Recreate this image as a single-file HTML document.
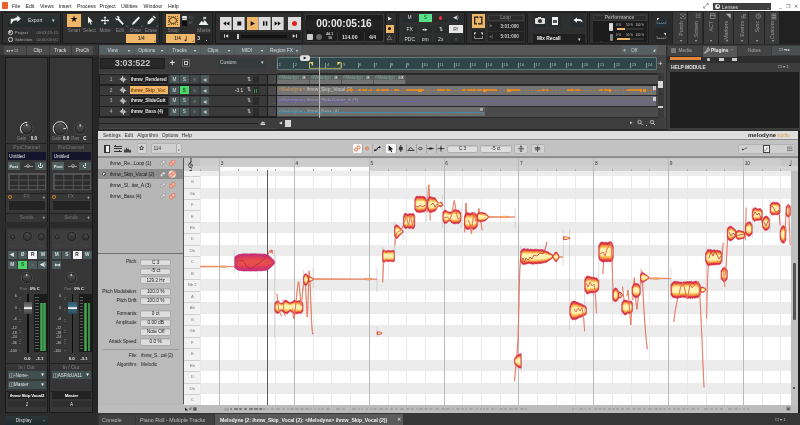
<!DOCTYPE html>
<html><head><meta charset="utf-8"><title>DAW</title>
<style>
html,body{margin:0;padding:0;background:#3a3a3a;}
body{width:800px;height:425px;overflow:hidden;position:relative;font-family:"Liberation Sans",sans-serif;}
#root{position:absolute;left:0;top:0;width:800px;height:425px;overflow:hidden;will-change:transform;}
#root div{position:absolute;box-sizing:border-box;}
#root svg{position:absolute;left:0;top:0;}
</style></head><body><div id="root">
<div style="left:0px;top:0px;width:800px;height:11px;background:#ffffff;"></div>
<div style="left:0px;top:11px;width:800px;height:34px;background:#2a2a2a;"></div>
<div style="left:12px;top:2.5px;font-size:5.2px;color:#222;line-height:6.2px;white-space:nowrap;">File</div>
<div style="left:25.5px;top:2.5px;font-size:5.2px;color:#222;line-height:6.2px;white-space:nowrap;">Edit</div>
<div style="left:40px;top:2.5px;font-size:5.2px;color:#222;line-height:6.2px;white-space:nowrap;">Views</div>
<div style="left:58.5px;top:2.5px;font-size:5.2px;color:#222;line-height:6.2px;white-space:nowrap;">Insert</div>
<div style="left:77px;top:2.5px;font-size:5.2px;color:#222;line-height:6.2px;white-space:nowrap;">Process</div>
<div style="left:99.5px;top:2.5px;font-size:5.2px;color:#222;line-height:6.2px;white-space:nowrap;">Project</div>
<div style="left:121px;top:2.5px;font-size:5.2px;color:#222;line-height:6.2px;white-space:nowrap;">Utilities</div>
<div style="left:143.5px;top:2.5px;font-size:5.2px;color:#222;line-height:6.2px;white-space:nowrap;">Window</div>
<div style="left:168px;top:2.5px;font-size:5.2px;color:#222;line-height:6.2px;white-space:nowrap;">Help</div>
<div style="left:2px;top:2px;width:6px;height:7px;background:#e8622c;border-radius:1px;"></div>
<div style="left:713px;top:3px;width:58px;height:7px;background:#3f3f3f;"></div>
<div style="left:722px;top:3.5px;font-size:5px;color:#ddd;line-height:6px;white-space:nowrap;">Lenses</div>
<div style="left:715.3px;top:3.8px;width:5px;height:5px;background:#e8e8e8;border-radius:50%;"></div>
<div style="left:716.9px;top:5.4px;width:1.8px;height:1.8px;background:#333;border-radius:50%;"></div>
<div style="left:765.5px;top:4px;font-size:5px;color:#aaa;line-height:6px;white-space:nowrap;">&#8964;</div>
<div style="left:703px;top:2px;font-size:7px;color:#333;line-height:8px;white-space:nowrap;">&#x2922;</div>
<div style="left:779px;top:2.5px;font-size:5px;color:#556;line-height:6px;white-space:nowrap;">_</div>
<div style="left:786px;top:2.5px;font-size:5px;color:#556;line-height:6px;white-space:nowrap;">&#x2750;</div>
<div style="left:794px;top:2.5px;font-size:5px;color:#556;line-height:6px;white-space:nowrap;">&#x2715;</div>
<div style="left:2px;top:12px;width:58.5px;height:32px;background:#2f2f2f;border:0.5px solid #1c1c1c;border-radius:1px;"></div>
<div style="left:61.5px;top:12px;width:98.5px;height:32px;background:#2f2f2f;border:0.5px solid #1c1c1c;border-radius:1px;"></div>
<div style="left:161px;top:12px;width:52px;height:32px;background:#2f2f2f;border:0.5px solid #1c1c1c;border-radius:1px;"></div>
<div style="left:214.5px;top:12px;width:88px;height:32px;background:#2f2f2f;border:0.5px solid #1c1c1c;border-radius:1px;"></div>
<div style="left:398px;top:12px;width:67px;height:32px;background:#2f2f2f;border:0.5px solid #1c1c1c;border-radius:1px;"></div>
<div style="left:466px;top:12px;width:60px;height:32px;background:#2f2f2f;border:0.5px solid #1c1c1c;border-radius:1px;"></div>
<div style="left:527px;top:12px;width:61px;height:32px;background:#2f2f2f;border:0.5px solid #1c1c1c;border-radius:1px;"></div>
<div style="left:589px;top:12px;width:60px;height:32px;background:#2f2f2f;border:0.5px solid #1c1c1c;border-radius:1px;"></div>
<div style="left:8px;top:14px;width:50px;height:13px;background:linear-gradient(#2e3433,#1f2b2a);border-radius:1px;"></div>
<div style="left:28px;top:17px;font-size:5px;color:#ddd;line-height:6px;white-space:nowrap;">Export</div>
<div style="left:52px;top:17px;font-size:5px;color:#ddd;line-height:6px;white-space:nowrap;">&#9662;</div>
<svg width="800" height="425" viewBox="0 0 800 425"><path d="M11 24 v-5 h4 M13.5 20.5 q1 -3 4 -3 v-1.6 l3 2.8 l-3 2.8 v-1.6 q-2.5 0 -4 0.6z" fill="#eee" stroke="#eee" stroke-width="0.6"/></svg>
<div style="left:8px;top:30px;width:4.5px;height:4.5px;border:0.7px solid #ccc;border-radius:50%;"></div>
<div style="left:9.4px;top:31.4px;width:1.8px;height:1.8px;background:#ddd;border-radius:50%;"></div>
<div style="left:8px;top:37px;width:4.5px;height:4.5px;border:0.7px solid #ccc;border-radius:50%;"></div>
<div style="left:15px;top:29.5px;font-size:4.2px;color:#aaa;line-height:5.2px;white-space:nowrap;">Project</div>
<div style="left:15px;top:36.5px;font-size:4.2px;color:#aaa;line-height:5.2px;white-space:nowrap;">Selection</div>
<div style="left:36.5px;top:29.5px;font-size:4px;color:#888;line-height:5px;white-space:nowrap;">00:03:23:15</div>
<div style="left:36.5px;top:36.5px;font-size:4px;color:#888;line-height:5px;white-space:nowrap;">00:00:00:00</div>
<div style="left:67px;top:14px;width:14px;height:13px;background:#f0b768;"></div>
<div style="left:64px;top:28px;font-size:4.6px;color:#8a8a8a;line-height:5.6px;white-space:nowrap;width:20px;text-align:center;">Smart</div>
<div style="left:82.5px;top:14px;width:14px;height:13px;background:linear-gradient(#2c2c2c,#2a2e2e 55%,#1f302e);"></div>
<div style="left:79.5px;top:28px;font-size:4.6px;color:#8a8a8a;line-height:5.6px;white-space:nowrap;width:20px;text-align:center;">Select</div>
<div style="left:98px;top:14px;width:14px;height:13px;background:linear-gradient(#2c2c2c,#2a2e2e 55%,#1f302e);"></div>
<div style="left:95px;top:28px;font-size:4.6px;color:#8a8a8a;line-height:5.6px;white-space:nowrap;width:20px;text-align:center;">Move</div>
<div style="left:113px;top:14px;width:14px;height:13px;background:linear-gradient(#2c2c2c,#2a2e2e 55%,#1f302e);"></div>
<div style="left:110px;top:28px;font-size:4.6px;color:#8a8a8a;line-height:5.6px;white-space:nowrap;width:20px;text-align:center;">Edit</div>
<div style="left:128.5px;top:14px;width:14px;height:13px;background:linear-gradient(#2c2c2c,#2a2e2e 55%,#1f302e);"></div>
<div style="left:125.5px;top:28px;font-size:4.6px;color:#8a8a8a;line-height:5.6px;white-space:nowrap;width:20px;text-align:center;">Draw</div>
<div style="left:144px;top:14px;width:14px;height:13px;background:linear-gradient(#2c2c2c,#2a2e2e 55%,#1f302e);"></div>
<div style="left:141px;top:28px;font-size:4.6px;color:#8a8a8a;line-height:5.6px;white-space:nowrap;width:20px;text-align:center;">Erase</div>
<div style="left:70.2px;top:15.3px;font-size:8.5px;color:#111;line-height:9.5px;white-space:nowrap;">&#9733;</div>
<svg width="800" height="425" viewBox="0 0 800 425"><path d="M88 16.5v7l1.6-1.4l1.2 2.6l1.1-0.5l-1.2-2.5l2.1-0.2z" fill="#eee"/><path d="M105 16.2l1.5 1.8h-1v2h2v-1l1.8 1.5l-1.8 1.5v-1h-2v2h1l-1.5 1.8l-1.5-1.8h1v-2h-2v1l-1.8-1.5l1.8-1.5v1h2v-2h-1z" fill="#eee"/><path d="M116.5 16.2q2-0.6 3 1l-0.3 1.4l4.6 5.2l-1.2 1.2l-4.8-5l-1.6 0.2q-1.2-1.4-0.6-2.6l1.4 1.4l1-1z" fill="#eee"/><path d="M132 24.8l0.6-2l6-6.3l1.4 1.4l-6 6.3z" fill="#eee"/><path d="M147.5 24.2l0.2-2.4l4.4-4.6l2.2 2.2l-4.4 4.6z M152.8 16.5l0.9-0.9l2.2 2.2l-0.9 0.9z" fill="#eee"/><path d="M126 26.5h1.2v-1.2z M141 26.5h1.2v-1.2z M156.5 26.5h1.2v-1.2z" fill="#bbb"/></svg>
<div style="left:126.3px;top:34.3px;width:29.4px;height:8.3px;background:#f0b768;"></div>
<div style="left:126.5px;top:35.5px;font-size:4.6px;color:#333;line-height:5.6px;white-space:nowrap;width:29.5px;text-align:center;font-weight:bold;">1/4</div>
<div style="left:166px;top:14px;width:14px;height:13px;background:#f0b768;"></div>
<div style="left:168.3px;top:15.8px;width:9.4px;height:9.4px;border:0.5px dotted #7a5a20;"></div>
<div style="left:169.3px;top:16.8px;width:7.4px;height:7.4px;border:1.5px solid #3a2c14;border-radius:50%;"></div>
<div style="left:182px;top:16.3px;width:4.8px;height:4.2px;background:#e4e4e4;border-radius:1px;"></div>
<div style="left:182px;top:18.2px;width:4.8px;height:0.5px;background:#999;"></div>
<div style="left:182px;top:21px;width:4.8px;height:4.8px;background:#0c0c0c;"></div>
<div style="left:188.8px;top:16.6px;font-size:2.8px;color:#777;line-height:3.8px;white-space:nowrap;">TO</div>
<div style="left:188.8px;top:21.8px;font-size:2.8px;color:#777;line-height:3.8px;white-space:nowrap;">BY</div>
<div style="left:167.5px;top:28px;font-size:4.8px;color:#8a8a8a;line-height:5.8px;white-space:nowrap;">Snap</div>
<div style="left:166px;top:34.3px;width:28.5px;height:8.3px;background:#f0b768;"></div>
<div style="left:174.3px;top:35.5px;font-size:4.6px;color:#333;line-height:5.6px;white-space:nowrap;font-weight:bold;">1/4</div>
<svg width="800" height="425" viewBox="0 0 800 425"><path d="M186.3 36v4.3" stroke="#222" stroke-width="0.6"/><ellipse cx="185.5" cy="40.4" rx="1" ry="0.8" fill="#222"/><path d="M193.8 41.8h-1.6l1.6-1.6z M155.2 41.8h-1.6l1.6-1.6z" fill="#6a4a18"/></svg>
<div style="left:196.5px;top:34.3px;width:14px;height:8.3px;background:#242424;"></div>
<div style="left:197.3px;top:35.3px;font-size:5.2px;color:#ddd;line-height:6.2px;white-space:nowrap;font-weight:bold;">3</div>
<div style="left:205.6px;top:39.6px;width:1.2px;height:1.2px;background:#ddd;"></div>
<div style="left:197px;top:14px;width:13.5px;height:13px;background:linear-gradient(#2c2c2c,#2a2e2e 55%,#1f302e);"></div>
<svg width="800" height="425" viewBox="0 0 800 425"><path d="M198.5 25l3.2-4.2l1.6 1.6l1.4-2.4l3.8 5z" fill="#eee"/><path d="M203.6 20.5v-3.3h2.2v1.5h-2.2" fill="#eee" stroke="#eee" stroke-width="0.4"/></svg>
<div style="left:197.3px;top:28px;font-size:4.8px;color:#8a8a8a;line-height:5.8px;white-space:nowrap;">Marks</div>
<div style="left:220px;top:17px;width:12.3px;height:13px;background:#dcdcdc;border-right:0.5px solid #999;"></div>
<div style="left:233px;top:17px;width:12.3px;height:13px;background:#dcdcdc;border-right:0.5px solid #999;"></div>
<div style="left:246.5px;top:17px;width:12.3px;height:13px;background:#f0b768;border-right:0.5px solid #999;"></div>
<div style="left:259px;top:17px;width:12.3px;height:13px;background:#dcdcdc;border-right:0.5px solid #999;"></div>
<div style="left:271.5px;top:17px;width:12.3px;height:13px;background:#dcdcdc;border-right:0.5px solid #999;"></div>
<svg width="800" height="425" viewBox="0 0 800 425"><path d="M226.2 21.3v4.4l-3-2.2z M229.4 21.3v4.4l-3-2.2z M237.3 21.5h4v4h-4z M250.6 21v5l4.2-2.5z M263 21.2h1.5v4.6h-1.5z M265.8 21.2h1.5v4.6h-1.5z M274.6 21.3v4.4l3-2.2z M277.8 21.3v4.4l3-2.2z" fill="#111"/></svg>
<div style="left:288px;top:17px;width:13px;height:13px;background:#dcdcdc;"></div>
<div style="left:292px;top:21px;width:5px;height:5px;background:#e02020;border-radius:50%;"></div>
<div style="left:220px;top:32px;width:81px;height:8px;background:#222;"></div>
<div style="left:241px;top:35px;width:46px;height:2.5px;background:#111;"></div>
<div style="left:237px;top:33.5px;width:2px;height:5px;background:#ccc;"></div>
<svg width="800" height="425" viewBox="0 0 800 425"><path d="M224 34.3h0.9v3.4h-0.9z M228.2 34.3v3.4l-2.8-1.7z M296 34.3h0.9v3.4h-0.9z M292.7 34.3v3.4l2.8-1.7z" fill="#ddd"/></svg>
<div style="left:304.5px;top:14px;width:79px;height:28px;background:#1d1d1d;border:0.5px solid #3a3a3a;"></div>
<div style="left:305px;top:20px;width:78px;height:10px;background:#232323;"></div>
<div style="left:305px;top:18px;font-size:10.2px;color:#e6e6e6;line-height:11.2px;white-space:nowrap;width:78px;text-align:center;font-weight:bold;">00:00:05:16</div>
<div style="left:307px;top:33.5px;width:6px;height:6.5px;background:#ccc;border-radius:1px;"></div>
<div style="left:316px;top:33.5px;width:6px;height:6.5px;background:#666;border-radius:3px;"></div>
<div style="left:326px;top:32.3px;font-size:3.8px;color:#ccc;line-height:4.8px;white-space:nowrap;font-weight:bold;">44.1</div>
<div style="left:328px;top:36.3px;font-size:3.8px;color:#ccc;line-height:4.8px;white-space:nowrap;font-weight:bold;">16</div>
<div style="left:342px;top:34px;font-size:5.2px;color:#ddd;line-height:6.2px;white-space:nowrap;font-weight:bold;">114.00</div>
<div style="left:369px;top:34px;font-size:5.2px;color:#ddd;line-height:6.2px;white-space:nowrap;font-weight:bold;">4/4</div>
<div style="left:337px;top:31.5px;width:0.5px;height:10px;background:#333;"></div>
<div style="left:364px;top:31.5px;width:0.5px;height:10px;background:#333;"></div>
<div style="left:384.5px;top:12px;width:12.5px;height:32px;background:#2f2f2f;border:0.5px solid #1c1c1c;border-radius:1px;"></div>
<div style="left:387.5px;top:15.5px;font-size:4.5px;color:#ddd;line-height:5.5px;white-space:nowrap;">&#9654;</div>
<div style="left:385.5px;top:24.5px;width:8.5px;height:8.5px;background:#f0b768;"></div>
<div style="left:388.3px;top:27.3px;width:3px;height:3px;background:#111;border-radius:50%;"></div>
<div style="left:386.5px;top:34px;font-size:6px;color:#ddd;line-height:7px;white-space:nowrap;">&#9651;</div>
<div style="left:403px;top:14px;width:13.5px;height:7.5px;background:linear-gradient(#2e2e2e,#232b2b);"></div>
<div style="left:403px;top:15px;font-size:4.6px;color:#ddd;line-height:5.6px;white-space:nowrap;width:13.5px;text-align:center;">M</div>
<div style="left:418.5px;top:14px;width:13.5px;height:7.5px;background:#5be08a;"></div>
<div style="left:418.5px;top:15px;font-size:4.6px;color:#1a4a2a;line-height:5.6px;white-space:nowrap;width:13.5px;text-align:center;">S</div>
<div style="left:434px;top:14px;width:13.5px;height:7.5px;background:linear-gradient(#2e2e2e,#232b2b);"></div>
<div style="left:434px;top:15px;font-size:4.6px;color:#ddd;line-height:5.6px;white-space:nowrap;width:13.5px;text-align:center;"></div>
<div style="left:449px;top:14px;width:13.5px;height:7.5px;background:linear-gradient(#2e2e2e,#232b2b);"></div>
<div style="left:449px;top:15px;font-size:4.6px;color:#ddd;line-height:5.6px;white-space:nowrap;width:13.5px;text-align:center;">&#9664;)</div>
<div style="left:403px;top:24.5px;width:13.5px;height:8px;background:linear-gradient(#2e2e2e,#232b2b);"></div>
<div style="left:403px;top:25.7px;font-size:5px;color:#ddd;line-height:6px;white-space:nowrap;width:13.5px;text-align:center;">FX</div>
<div style="left:418.5px;top:24.5px;width:13.5px;height:8px;background:linear-gradient(#2e2e2e,#232b2b);"></div>
<div style="left:418.5px;top:25.7px;font-size:5px;color:#ddd;line-height:6px;white-space:nowrap;width:13.5px;text-align:center;">&#9666;&#9656;</div>
<div style="left:434px;top:24.5px;width:13.5px;height:8px;background:linear-gradient(#2e2e2e,#232b2b);"></div>
<div style="left:434px;top:25.7px;font-size:5px;color:#ddd;line-height:6px;white-space:nowrap;width:13.5px;text-align:center;">&#8645;</div>
<div style="left:449px;top:24.5px;width:13.5px;height:8px;background:#e8e8e8;"></div>
<div style="left:449px;top:25.7px;font-size:5px;color:#333;line-height:6px;white-space:nowrap;width:13.5px;text-align:center;">R!</div>
<div style="left:403px;top:35px;width:13.5px;height:8px;background:linear-gradient(#2e2e2e,#232b2b);"></div>
<div style="left:403px;top:36.2px;font-size:5px;color:#ddd;line-height:6px;white-space:nowrap;width:13.5px;text-align:center;">PDC</div>
<div style="left:418.5px;top:35px;width:13.5px;height:8px;background:linear-gradient(#2e2e2e,#232b2b);"></div>
<div style="left:418.5px;top:36.2px;font-size:5px;color:#ddd;line-height:6px;white-space:nowrap;width:13.5px;text-align:center;">om</div>
<div style="left:434px;top:35px;width:13.5px;height:8px;background:linear-gradient(#2e2e2e,#232b2b);"></div>
<div style="left:434px;top:36.2px;font-size:5px;color:#ddd;line-height:6px;white-space:nowrap;width:13.5px;text-align:center;">2x</div>
<div style="left:449px;top:35px;width:13.5px;height:8px;background:linear-gradient(#2e2e2e,#232b2b);"></div>
<div style="left:449px;top:36.2px;font-size:5px;color:#666;line-height:6px;white-space:nowrap;width:13.5px;text-align:center;">&#10005;</div>
<div style="left:438.8px;top:16px;width:3.6px;height:3.6px;background:#f03030;border-radius:50%;"></div>
<div style="left:471.5px;top:14px;width:13.5px;height:13.5px;background:#f0b768;"></div>
<div style="left:472px;top:29.5px;width:13px;height:11.5px;background:#222;"></div>
<svg width="800" height="425" viewBox="0 0 800 425"><path d="M477 17.2h-2.3v6.6h2.3 M479.5 17.2h2.3v6.6h-2.3" fill="none" stroke="#222" stroke-width="1.3"/><path d="M477 15.8l1.8 1.4l-1.8 1.4z M479.5 22.4l-1.8 1.4l1.8 1.4z" fill="#222"/><path d="M474.5 38.5v-2.5 M482.5 38.5v-2.5 M474.5 38.5h8" stroke="#ddd" stroke-width="0.6" fill="none"/><path d="M474 32.5h2.5l-2.5 2.5z M483 32.5h-2.5l2.5 2.5z" fill="#eee"/></svg>
<div style="left:487.5px;top:14.5px;width:36px;height:6px;background:#2b2b2b;border:0.5px solid #3c3c3c;"></div>
<div style="left:487.5px;top:15.2px;font-size:4.8px;color:#999;line-height:5.8px;white-space:nowrap;width:36px;text-align:center;">Loop</div>
<div style="left:487.5px;top:21.5px;width:36px;height:9px;background:#222;"></div>
<div style="left:487.5px;top:32px;width:36px;height:9px;background:#222;"></div>
<div style="left:500.5px;top:23.5px;font-size:4.6px;color:#ccc;line-height:5.6px;white-space:nowrap;font-weight:bold;">3:01:000</div>
<div style="left:500.5px;top:34px;font-size:4.6px;color:#ccc;line-height:5.6px;white-space:nowrap;font-weight:bold;">5:01:000</div>
<div style="left:489px;top:23px;font-size:4.5px;color:#777;line-height:5.5px;white-space:nowrap;">|&#9656;</div>
<div style="left:489px;top:33.5px;font-size:4.5px;color:#777;line-height:5.5px;white-space:nowrap;">&#9666;|</div>
<div style="left:533px;top:14px;width:13px;height:12.5px;background:linear-gradient(#2c2c2c,#222c30);"></div>
<div style="left:548px;top:14px;width:13px;height:12.5px;background:linear-gradient(#2c2c2c,#222c30);"></div>
<div style="left:571px;top:14px;width:13px;height:12.5px;background:linear-gradient(#2c2c2c,#222c30);"></div>
<div style="left:535px;top:18px;width:9.5px;height:5.5px;background:#ddd;border-radius:1px;"></div>
<div style="left:537.5px;top:17px;width:3px;height:1.5px;background:#ddd;"></div>
<div style="left:538px;top:19px;width:3.5px;height:3.5px;background:#333;border-radius:50%;"></div>
<div style="left:551.5px;top:16.5px;width:6.5px;height:8px;background:#eee;"></div>
<div style="left:553px;top:20px;width:3.5px;height:2.5px;background:#555;"></div>
<svg width="800" height="425" viewBox="0 0 800 425"><path d="M573.5 20l3.5-2.6v1.7h2.5q3 0 3 3.5q-1-1.6-3-1.6h-2.5v1.7z" fill="#eee"/></svg>
<div style="left:533px;top:34px;width:51.5px;height:8.5px;background:#202020;"></div>
<div style="left:537px;top:35.6px;font-size:4.8px;color:#eee;line-height:5.8px;white-space:nowrap;font-weight:bold;">Mix Recall</div>
<div style="left:577.5px;top:35.5px;font-size:5px;color:#ddd;line-height:6px;white-space:nowrap;">&#9662;</div>
<div style="left:593px;top:14.6px;width:54px;height:6px;background:#2b2b2b;border:0.5px solid #3c3c3c;"></div>
<div style="left:592px;top:15.4px;font-size:4.8px;color:#aaa;line-height:5.8px;white-space:nowrap;width:55px;text-align:center;font-weight:bold;">Performance</div>
<div style="left:593px;top:21.3px;width:54px;height:20.5px;background:#1c1c1c;"></div>
<div style="left:609px;top:23px;width:4px;height:7.5px;background:#ddd;border-radius:1px;"></div>
<div style="left:609.5px;top:33.5px;width:3.5px;height:7.5px;background:#888;border-radius:1px;"></div>
<div style="left:616px;top:23.3px;font-size:3px;color:#ccc;line-height:4px;white-space:nowrap;">0 %</div>
<div style="left:626px;top:23.3px;font-size:3px;color:#ccc;line-height:4px;white-space:nowrap;">50 %</div>
<div style="left:635.5px;top:23.3px;font-size:3px;color:#ccc;line-height:4px;white-space:nowrap;">100 %</div>
<div style="left:616px;top:33.3px;font-size:3px;color:#ccc;line-height:4px;white-space:nowrap;">0 %</div>
<div style="left:626px;top:33.3px;font-size:3px;color:#ccc;line-height:4px;white-space:nowrap;">50 %</div>
<div style="left:635.5px;top:33.3px;font-size:3px;color:#ccc;line-height:4px;white-space:nowrap;">100 %</div>
<div style="left:616.5px;top:28px;width:27px;height:2px;background:#333;"></div>
<div style="left:616.5px;top:28px;width:8.5px;height:2px;background:#f0b768;"></div>
<div style="left:616.5px;top:38px;width:27px;height:2.3px;background:#333;"></div>
<div style="left:616.5px;top:38px;width:13.5px;height:2.3px;background:#f0b768;"></div>
<div style="left:601px;top:38px;font-size:4px;color:#ccc;line-height:5px;white-space:nowrap;">.</div>
<div style="left:653.5px;top:13.5px;width:14.5px;height:13px;background:linear-gradient(#2c2c2c,#22303a);"></div>
<div style="left:653.5px;top:29px;width:14.5px;height:13px;background:#262626;"></div>
<svg width="800" height="425" viewBox="0 0 800 425"><path d="M657 23.5v-2.5 M659.2 23.5v-1.2 M661.4 23.5v-1.2 M663.6 23.5v-1.2 M665.8 23.5v-2.5 M657 23.5h8.8" stroke="#7a9a9a" stroke-width="0.5" fill="none"/><path d="M657 18h2.4l-2.4 2.4z" fill="#eee"/><path d="M657 38.5v-2.5 M659.2 38.5v-1.2 M661.4 38.5v-1.2 M663.6 38.5v-1.2 M665.8 38.5v-2.5 M657 38.5h8.8" stroke="#aaa" stroke-width="0.5" fill="none"/><path d="M666 33h-2.4l2.4 2.4z" fill="#eee"/></svg>
<div style="left:671.9px;top:11.5px;width:15.3px;height:32.5px;background:#3a3a3a;border-left:1.5px solid #222;"></div>
<div style="left:677.5px;top:40.7px;width:20px;text-align:right;font-size:5.2px;line-height:7px;color:#9a9a9a;transform-origin:0 0;transform:rotate(-90deg);white-space:nowrap;">Punch</div>
<div style="left:679.6999999999999px;top:39.3px;font-size:3.5px;color:#aaa;line-height:4.5px;white-space:nowrap;">&#9662;</div>
<div style="left:687.1999999999999px;top:11.5px;width:15.3px;height:32.5px;background:#3a3a3a;border-left:1.5px solid #222;"></div>
<div style="left:692.8px;top:40.7px;width:20px;text-align:right;font-size:5.2px;line-height:7px;color:#9a9a9a;transform-origin:0 0;transform:rotate(-90deg);white-space:nowrap;">Screen</div>
<div style="left:694.9999999999999px;top:39.3px;font-size:3.5px;color:#aaa;line-height:4.5px;white-space:nowrap;">&#9662;</div>
<div style="left:702.5px;top:11.5px;width:15.3px;height:32.5px;background:#3a3a3a;border-left:1.5px solid #222;"></div>
<div style="left:708.1px;top:40.7px;width:20px;text-align:right;font-size:5.2px;line-height:7px;color:#9a9a9a;transform-origin:0 0;transform:rotate(-90deg);white-space:nowrap;">ACT</div>
<div style="left:710.3px;top:39.3px;font-size:3.5px;color:#aaa;line-height:4.5px;white-space:nowrap;">&#9662;</div>
<div style="left:717.8px;top:11.5px;width:15.3px;height:32.5px;background:#3a3a3a;border-left:1.5px solid #222;"></div>
<div style="left:723.4px;top:40.7px;width:20px;text-align:right;font-size:5.2px;line-height:7px;color:#9a9a9a;transform-origin:0 0;transform:rotate(-90deg);white-space:nowrap;">Markers</div>
<div style="left:725.5999999999999px;top:39.3px;font-size:3.5px;color:#aaa;line-height:4.5px;white-space:nowrap;">&#9662;</div>
<div style="left:733.1px;top:11.5px;width:15.3px;height:32.5px;background:#3a3a3a;border-left:1.5px solid #222;"></div>
<div style="left:738.7px;top:40.7px;width:20px;text-align:right;font-size:5.2px;line-height:7px;color:#9a9a9a;transform-origin:0 0;transform:rotate(-90deg);white-space:nowrap;">Events</div>
<div style="left:740.9px;top:39.3px;font-size:3.5px;color:#aaa;line-height:4.5px;white-space:nowrap;">&#9662;</div>
<div style="left:748.4px;top:11.5px;width:15.3px;height:32.5px;background:#3a3a3a;border-left:1.5px solid #222;"></div>
<div style="left:754.0px;top:40.7px;width:20px;text-align:right;font-size:5.2px;line-height:7px;color:#9a9a9a;transform-origin:0 0;transform:rotate(-90deg);white-space:nowrap;">Sync</div>
<div style="left:756.1999999999999px;top:39.3px;font-size:3.5px;color:#aaa;line-height:4.5px;white-space:nowrap;">&#9662;</div>
<div style="left:763.7px;top:11.5px;width:15.3px;height:32.5px;background:#3a3a3a;border-left:1.5px solid #222;"></div>
<div style="left:769.3000000000001px;top:40.7px;width:20px;text-align:right;font-size:5.2px;line-height:7px;color:#9a9a9a;transform-origin:0 0;transform:rotate(-90deg);white-space:nowrap;">Custom</div>
<div style="left:771.5px;top:39.3px;font-size:3.5px;color:#aaa;line-height:4.5px;white-space:nowrap;">&#9662;</div>
<div style="left:779.0px;top:11.5px;width:1.5px;height:32.5px;background:#222;"></div>
<svg width="800" height="425" viewBox="0 0 800 425" fill="none" stroke="#a8a8a8" stroke-width="0.6"><g transform="translate(0.8 -0.5)"><path d="M680 14.5h1.5 M683 14.5h1.5v1.5 M684.5 17.5v1.5h-1.5 M681.5 19h-1.5v-1.5 M680 16v-1.5"/><rect x="681.6" y="16" width="1.4" height="1.4" fill="#a8a8a8" stroke="none"/><path d="M695 14.6h4.6 M695 16.3h4.6 M695 18h4.6" stroke-dasharray="1.2 0.5"/><rect x="709.8" y="14.3" width="4.4" height="4.6"/><path d="M709.8 16h4.4"/><path d="M725 14.2h5v5z" fill="#a8a8a8" stroke="none"/><path d="M741 19v-3 M742.6 19v-4.5 M744.2 19v-2 M744.2 14.5v1.6 M743.4 15.3h1.6"/><circle cx="757.5" cy="16.6" r="2.3"/><path d="M757.5 15.2v1.5h1.2"/><path d="M770.5 14.6h5 M770.5 16.2h5 M770.5 17.8h5 M770.5 19.4h5" stroke-width="0.8"/></g></svg>
<div style="left:779px;top:11px;width:21px;height:33px;background:#212121;"></div>
<div style="left:0px;top:44.5px;width:98.5px;height:380.5px;background:#2c2c2c;"></div>
<div style="left:0px;top:45px;width:98px;height:10px;background:#3a3a3a;"></div>
<div style="left:4px;top:46px;width:22px;height:8.5px;background:#4c4c4c;"></div>
<div style="left:27px;top:46px;width:21.5px;height:8.5px;background:#4c4c4c;"></div>
<div style="left:49.5px;top:46px;width:21.5px;height:8.5px;background:#4c4c4c;"></div>
<div style="left:72px;top:46px;width:21px;height:8.5px;background:#4c4c4c;"></div>
<div style="left:6px;top:47.5px;font-size:4.2px;color:#ddd;line-height:5.2px;white-space:nowrap;">&#9666;&#9666; &#9662; &#10064;</div>
<div style="left:27px;top:47.5px;font-size:4.8px;color:#e0e0e0;line-height:5.8px;white-space:nowrap;width:21.5px;text-align:center;">Clip</div>
<div style="left:49.5px;top:47.5px;font-size:4.8px;color:#e0e0e0;line-height:5.8px;white-space:nowrap;width:21.5px;text-align:center;">Track</div>
<div style="left:72px;top:47.5px;font-size:4.8px;color:#e0e0e0;line-height:5.8px;white-space:nowrap;width:21px;text-align:center;">ProCh</div>
<div style="left:4.8px;top:57px;width:43.5px;height:355.5px;background:#363636;border:0.5px solid #1a1a1a;"></div>
<svg width="800" height="425" viewBox="0 0 800 425"><defs><linearGradient id="kg268_1286" x1="0" y1="0" x2="0" y2="1"><stop offset="0" stop-color="#585858"/><stop offset="1" stop-color="#2e2e2e"/></linearGradient></defs><circle cx="26.8" cy="128.6" r="6.3" fill="#222" stroke="#5a5a5a" stroke-width="0.7"/><circle cx="26.8" cy="128.6" r="6.3" fill="none" stroke="#e4e4e4" stroke-width="0.9" stroke-dasharray="14.84 39.58" transform="rotate(135 26.8 128.6)"/><circle cx="26.8" cy="128.6" r="4.8" fill="url(#kg268_1286)"/><path d="M26.80 123.60L26.80 126.10" stroke="#f0f0f0" stroke-width="0.9"/></svg>
<div style="left:16.8px;top:136.3px;font-size:4.5px;color:#888;line-height:5.5px;white-space:nowrap;">Gain</div>
<div style="left:30.8px;top:136.3px;font-size:4.5px;color:#eee;line-height:5.5px;white-space:nowrap;font-weight:bold;">0.0</div>
<div style="left:5.3px;top:142.5px;width:42.5px;height:0.6px;background:#222;"></div>
<div style="left:4.8px;top:144.2px;font-size:5px;color:#777;line-height:6px;white-space:nowrap;width:43.5px;text-align:center;">ProChannel</div>
<div style="left:7.8px;top:152.3px;width:38.5px;height:7.6px;background:#14142c;"></div>
<div style="left:9.3px;top:153.5px;font-size:4.6px;color:#e8e8e8;line-height:5.6px;white-space:nowrap;">Untitled</div>
<div style="left:7.8px;top:162px;width:12px;height:7.8px;background:#506060;"></div>
<div style="left:7.8px;top:163.7px;font-size:4px;color:#eee;line-height:5px;white-space:nowrap;width:12px;text-align:center;font-weight:bold;">Post</div>
<div style="left:34.8px;top:162px;width:11.5px;height:7.8px;background:#4a5858;"></div>
<div style="left:38.4px;top:163.6px;width:4.4px;height:4.4px;border:0.8px solid #eee;border-radius:50%;"></div>
<div style="left:40.099999999999994px;top:162.9px;width:1px;height:3px;background:#eee;outline:0.6px solid #4a5858;"></div>
<div style="left:23.8px;top:165.7px;width:9px;height:0.5px;background:#999;"></div>
<div style="left:26.3px;top:163.8px;width:4.2px;height:4.2px;border:0.5px solid #999;border-radius:50%;"></div>
<div style="left:8.3px;top:172.5px;width:38px;height:17px;background:#2e2e2e;border:0.5px solid #555;background-image:linear-gradient(#555 0.5px,transparent 0.5px),linear-gradient(90deg,#555 0.5px,transparent 0.5px);background-size:9.4px 5.6px;"></div>
<div style="left:5.3px;top:192.8px;width:42.5px;height:0.6px;background:#222;"></div>
<div style="left:8.0px;top:195px;width:3.6px;height:3.6px;border:0.8px solid #e08a30;border-radius:50%;"></div>
<div style="left:4.8px;top:194.2px;font-size:4.8px;color:#777;line-height:5.8px;white-space:nowrap;width:43.5px;text-align:center;">FX</div>
<div style="left:42.3px;top:193.5px;font-size:5.5px;color:#aaa;line-height:6.5px;white-space:nowrap;font-weight:bold;">+</div>
<div style="left:7.8px;top:199.8px;width:38.5px;height:10.8px;background:#232323;border:0.5px solid #3c3c3c;"></div>
<div style="left:5.3px;top:212.5px;width:42.5px;height:0.6px;background:#222;"></div>
<div style="left:4.8px;top:215px;font-size:4.8px;color:#777;line-height:5.8px;white-space:nowrap;width:43.5px;text-align:center;">Sends</div>
<div style="left:42.3px;top:214px;font-size:5.5px;color:#aaa;line-height:6.5px;white-space:nowrap;font-weight:bold;">+</div>
<div style="left:5.3px;top:221.5px;width:42.5px;height:6.5px;background:#2b2b2b;"></div>
<div style="left:7.8px;top:229.5px;width:38.5px;height:19px;background:#3d3d3d;"></div>
<svg width="800" height="425" viewBox="0 0 800 425"><defs><linearGradient id="kg128_2370" x1="0" y1="0" x2="0" y2="1"><stop offset="0" stop-color="#444"/><stop offset="1" stop-color="#333"/></linearGradient></defs><circle cx="12.8" cy="237" r="3" fill="#222" stroke="#4a4a4a" stroke-width="0.7"/><circle cx="12.8" cy="237" r="1.5" fill="url(#kg128_2370)"/><path d="M12.80 235.30L12.80 237.80" stroke="#555" stroke-width="0.9"/></svg>
<svg width="800" height="425" viewBox="0 0 800 425"><defs><linearGradient id="kg273_2365" x1="0" y1="0" x2="0" y2="1"><stop offset="0" stop-color="#444"/><stop offset="1" stop-color="#333"/></linearGradient></defs><circle cx="27.3" cy="236.5" r="5" fill="#222" stroke="#4a4a4a" stroke-width="0.7"/><circle cx="27.3" cy="236.5" r="3.5" fill="url(#kg273_2365)"/><path d="M27.30 232.80L27.30 235.30" stroke="#555" stroke-width="0.9"/></svg>
<svg width="800" height="425" viewBox="0 0 800 425"><defs><linearGradient id="kg413_2370" x1="0" y1="0" x2="0" y2="1"><stop offset="0" stop-color="#444"/><stop offset="1" stop-color="#333"/></linearGradient></defs><circle cx="41.3" cy="237" r="4" fill="#222" stroke="#4a4a4a" stroke-width="0.7"/><circle cx="41.3" cy="237" r="2.5" fill="url(#kg413_2370)"/><path d="M41.30 234.30L41.30 236.80" stroke="#555" stroke-width="0.9"/></svg>
<div style="left:8.8px;top:243.5px;font-size:3.6px;color:#4a4a4a;line-height:4.6px;white-space:nowrap;">Post</div>
<div style="left:21.8px;top:243.5px;font-size:3.6px;color:#4a4a4a;line-height:4.6px;white-space:nowrap;">Level</div>
<div style="left:37.8px;top:243.5px;font-size:3.6px;color:#4a4a4a;line-height:4.6px;white-space:nowrap;">Pan</div>
<div style="left:7.8px;top:250.8px;width:9px;height:8.2px;background:#4a5a5a;"></div>
<div style="left:7.8px;top:252.3px;font-size:4.8px;color:#ddd;line-height:5.8px;white-space:nowrap;width:9px;text-align:center;font-weight:bold;">&#9664;</div>
<div style="left:18.0px;top:250.8px;width:9px;height:8.2px;background:#4a5a5a;"></div>
<div style="left:18.0px;top:252.3px;font-size:4.8px;color:#ddd;line-height:5.8px;white-space:nowrap;width:9px;text-align:center;font-weight:bold;">&#216;</div>
<div style="left:28.2px;top:250.8px;width:9px;height:8.2px;background:#f2f2f2;"></div>
<div style="left:28.2px;top:252.3px;font-size:4.8px;color:#222;line-height:5.8px;white-space:nowrap;width:9px;text-align:center;font-weight:bold;">R</div>
<div style="left:38.4px;top:250.8px;width:9px;height:8.2px;background:#4a5a5a;"></div>
<div style="left:38.4px;top:252.3px;font-size:4.8px;color:#ddd;line-height:5.8px;white-space:nowrap;width:9px;text-align:center;font-weight:bold;">W</div>
<div style="left:7.8px;top:261px;width:9px;height:8px;background:#4a5a5a;"></div>
<div style="left:7.8px;top:262.4px;font-size:4.8px;color:#ddd;line-height:5.8px;white-space:nowrap;width:9px;text-align:center;font-weight:bold;">M</div>
<div style="left:18.0px;top:261px;width:9px;height:8px;background:#4fd66a;"></div>
<div style="left:18.0px;top:262.4px;font-size:4.8px;color:#1a5a2a;line-height:5.8px;white-space:nowrap;width:9px;text-align:center;font-weight:bold;">S</div>
<div style="left:28.2px;top:261px;width:9px;height:8px;background:#4a5a5a;"></div>
<div style="left:28.2px;top:262.4px;font-size:4.8px;color:#ddd;line-height:5.8px;white-space:nowrap;width:9px;text-align:center;font-weight:bold;"></div>
<div style="left:38.4px;top:261px;width:9px;height:8px;background:#4a5a5a;"></div>
<div style="left:38.4px;top:262.4px;font-size:4.8px;color:#ddd;line-height:5.8px;white-space:nowrap;width:9px;text-align:center;font-weight:bold;">&#9664;)</div>
<div style="left:31.400000000000002px;top:263.7px;width:2.8px;height:2.8px;background:#666;border-radius:50%;"></div>
<svg width="800" height="425" viewBox="0 0 800 425"><defs><linearGradient id="kg268_2780" x1="0" y1="0" x2="0" y2="1"><stop offset="0" stop-color="#585858"/><stop offset="1" stop-color="#2e2e2e"/></linearGradient></defs><circle cx="26.8" cy="278" r="5.6" fill="#222" stroke="#5a5a5a" stroke-width="0.7"/><circle cx="26.8" cy="278" r="4.1" fill="url(#kg268_2780)"/><path d="M26.80 273.70L26.80 276.20" stroke="#f0f0f0" stroke-width="0.9"/></svg>
<div style="left:19.8px;top:286px;font-size:4px;color:#888;line-height:5px;white-space:nowrap;">Pan</div>
<div style="left:29.8px;top:286px;font-size:4px;color:#eee;line-height:5px;white-space:nowrap;font-weight:bold;">0% C</div>
<div style="left:5.8px;top:294.3px;font-size:3.6px;color:#ccc;line-height:4.6px;white-space:nowrap;width:11px;text-align:right;">6</div>
<div style="left:5.8px;top:305.5px;font-size:3.6px;color:#ccc;line-height:4.6px;white-space:nowrap;width:11px;text-align:right;">0</div>
<div style="left:5.8px;top:316.5px;font-size:3.6px;color:#ccc;line-height:4.6px;white-space:nowrap;width:11px;text-align:right;">-6</div>
<div style="left:5.8px;top:325.5px;font-size:3.6px;color:#ccc;line-height:4.6px;white-space:nowrap;width:11px;text-align:right;">-12</div>
<div style="left:5.8px;top:330.5px;font-size:3.6px;color:#ccc;line-height:4.6px;white-space:nowrap;width:11px;text-align:right;">-18</div>
<div style="left:5.8px;top:334.5px;font-size:3.6px;color:#ccc;line-height:4.6px;white-space:nowrap;width:11px;text-align:right;">-24</div>
<div style="left:5.8px;top:341.3px;font-size:3.6px;color:#ccc;line-height:4.6px;white-space:nowrap;width:11px;text-align:right;">-36</div>
<div style="left:5.8px;top:348.5px;font-size:3.6px;color:#ccc;line-height:4.6px;white-space:nowrap;width:11px;text-align:right;">-100</div>
<div style="left:19.3px;top:295px;width:2px;height:57px;background-image:repeating-linear-gradient(#555 0,#555 0.5px,transparent 0.5px,transparent 2.2px);"></div>
<div style="left:27.1px;top:293.6px;width:1.6px;height:59.5px;background:#0c0c0c;"></div>
<div style="left:23.6px;top:302px;width:8.6px;height:12px;background:linear-gradient(#555 0,#777 40%,#eee 47%,#eee 55%,#666 60%,#444 100%);border-radius:1px;"></div>
<div style="left:34.3px;top:294px;width:13px;height:57.5px;background:#1b1b1b;"></div>
<div style="left:35.3px;top:297px;width:3.5px;height:53px;background-image:repeating-linear-gradient(#5c5c5c 0,#5c5c5c 1px,transparent 1px,transparent 3px);"></div>
<div style="left:39.8px;top:303px;width:2.8px;height:47.5px;background:linear-gradient(90deg,#2c7636,#4aa656,#2c7636);"></div>
<div style="left:43.3px;top:303px;width:2.6px;height:47.5px;background:linear-gradient(90deg,#2c7636,#4aa656,#2c7636);"></div>
<div style="left:24.3px;top:355.5px;font-size:4.4px;color:#eee;line-height:5.4px;white-space:nowrap;font-weight:bold;">0.0</div>
<div style="left:35.8px;top:355.5px;font-size:4.4px;color:#eee;line-height:5.4px;white-space:nowrap;font-weight:bold;">-3.1</div>
<div style="left:5.3px;top:363px;width:42.5px;height:0.6px;background:#222;"></div>
<div style="left:4.8px;top:364.3px;font-size:5px;color:#868686;line-height:6px;white-space:nowrap;width:43.5px;text-align:center;">In / Out</div>
<div style="left:7.8px;top:371.4px;width:38.5px;height:7.8px;background:#414f50;"></div>
<div style="left:8.8px;top:372.6px;font-size:4.8px;color:#e4e4e4;line-height:5.8px;white-space:nowrap;">&#9707;-None-</div>
<div style="left:40.3px;top:372.3px;font-size:4.6px;color:#fff;line-height:5.6px;white-space:nowrap;">&#9660;</div>
<div style="left:7.8px;top:381px;width:38.5px;height:8px;background:#414f50;"></div>
<div style="left:8.8px;top:382.3px;font-size:4.8px;color:#e4e4e4;line-height:5.8px;white-space:nowrap;">&#9707;Master</div>
<div style="left:40.3px;top:382.1px;font-size:4.6px;color:#fff;line-height:5.6px;white-space:nowrap;">&#9660;</div>
<div style="left:5.3px;top:390.5px;width:42.5px;height:0.6px;background:#222;"></div>
<div style="left:7.8px;top:391.8px;width:38.5px;height:7.4px;background:#222;"></div>
<div style="left:6.8px;top:393px;font-size:4.4px;color:#fff;line-height:5.4px;white-space:nowrap;width:40.5px;text-align:center;font-weight:bold;letter-spacing:-0.15px;">ihmw Skip Vocal2</div>
<div style="left:7.8px;top:400.7px;width:38.5px;height:6.8px;background:#2e2e2e;"></div>
<div style="left:7.8px;top:401.6px;font-size:4.6px;color:#ddd;line-height:5.6px;white-space:nowrap;width:38.5px;text-align:center;">2</div>
<div style="left:49.2px;top:57px;width:43.5px;height:355.5px;background:#363636;border:0.5px solid #1a1a1a;"></div>
<svg width="800" height="425" viewBox="0 0 800 425"><defs><linearGradient id="kg602_1286" x1="0" y1="0" x2="0" y2="1"><stop offset="0" stop-color="#585858"/><stop offset="1" stop-color="#2e2e2e"/></linearGradient></defs><circle cx="60.2" cy="128.6" r="7" fill="#222" stroke="#5a5a5a" stroke-width="0.7"/><circle cx="60.2" cy="128.6" r="7" fill="none" stroke="#e4e4e4" stroke-width="0.9" stroke-dasharray="27.38 43.98" transform="rotate(135 60.2 128.6)"/><circle cx="60.2" cy="128.6" r="5.5" fill="url(#kg602_1286)"/><path d="M65.90 128.60L63.40 128.60" stroke="#f0f0f0" stroke-width="0.9"/></svg>
<svg width="800" height="425" viewBox="0 0 800 425"><defs><linearGradient id="kg802_1286" x1="0" y1="0" x2="0" y2="1"><stop offset="0" stop-color="#585858"/><stop offset="1" stop-color="#2e2e2e"/></linearGradient></defs><circle cx="80.2" cy="128.6" r="5.8" fill="#222" stroke="#5a5a5a" stroke-width="0.7"/><circle cx="80.2" cy="128.6" r="4.3" fill="url(#kg802_1286)"/><path d="M80.20 124.10L80.20 126.60" stroke="#f0f0f0" stroke-width="0.9"/></svg>
<div style="left:51.7px;top:136.3px;font-size:4.5px;color:#888;line-height:5.5px;white-space:nowrap;">Gain</div>
<div style="left:63.0px;top:136.3px;font-size:4.5px;color:#eee;line-height:5.5px;white-space:nowrap;font-weight:bold;">0.0</div>
<div style="left:71.2px;top:136.3px;font-size:4.5px;color:#888;line-height:5.5px;white-space:nowrap;">Pan</div>
<div style="left:83.2px;top:136.3px;font-size:4.5px;color:#eee;line-height:5.5px;white-space:nowrap;font-weight:bold;">C</div>
<div style="left:49.7px;top:142.5px;width:42.5px;height:0.6px;background:#222;"></div>
<div style="left:49.2px;top:144.2px;font-size:5px;color:#777;line-height:6px;white-space:nowrap;width:43.5px;text-align:center;">ProChannel</div>
<div style="left:52.2px;top:152.3px;width:38.5px;height:7.6px;background:#14142c;"></div>
<div style="left:53.7px;top:153.5px;font-size:4.6px;color:#e8e8e8;line-height:5.6px;white-space:nowrap;">Untitled</div>
<div style="left:52.2px;top:162px;width:12px;height:7.8px;background:#506060;"></div>
<div style="left:52.2px;top:163.7px;font-size:4px;color:#eee;line-height:5px;white-space:nowrap;width:12px;text-align:center;font-weight:bold;">Post</div>
<div style="left:79.2px;top:162px;width:11.5px;height:7.8px;background:#4a5858;"></div>
<div style="left:82.80000000000001px;top:163.6px;width:4.4px;height:4.4px;border:0.8px solid #eee;border-radius:50%;"></div>
<div style="left:84.5px;top:162.9px;width:1px;height:3px;background:#eee;outline:0.6px solid #4a5858;"></div>
<div style="left:68.2px;top:165.7px;width:9px;height:0.5px;background:#999;"></div>
<div style="left:70.7px;top:163.8px;width:4.2px;height:4.2px;border:0.5px solid #999;border-radius:50%;"></div>
<div style="left:52.7px;top:172.5px;width:38px;height:17px;background:#2e2e2e;border:0.5px solid #555;background-image:linear-gradient(#555 0.5px,transparent 0.5px),linear-gradient(90deg,#555 0.5px,transparent 0.5px);background-size:9.4px 5.6px;"></div>
<div style="left:49.7px;top:192.8px;width:42.5px;height:0.6px;background:#222;"></div>
<div style="left:52.400000000000006px;top:195px;width:3.6px;height:3.6px;border:0.8px solid #e08a30;border-radius:50%;"></div>
<div style="left:49.2px;top:194.2px;font-size:4.8px;color:#777;line-height:5.8px;white-space:nowrap;width:43.5px;text-align:center;">FX</div>
<div style="left:86.7px;top:193.5px;font-size:5.5px;color:#aaa;line-height:6.5px;white-space:nowrap;font-weight:bold;">+</div>
<div style="left:52.2px;top:199.8px;width:38.5px;height:10.8px;background:#232323;border:0.5px solid #3c3c3c;"></div>
<div style="left:49.7px;top:212.5px;width:42.5px;height:0.6px;background:#222;"></div>
<div style="left:49.2px;top:215px;font-size:4.8px;color:#777;line-height:5.8px;white-space:nowrap;width:43.5px;text-align:center;">Sends</div>
<div style="left:86.7px;top:214px;font-size:5.5px;color:#aaa;line-height:6.5px;white-space:nowrap;font-weight:bold;">+</div>
<div style="left:49.7px;top:221.5px;width:42.5px;height:6.5px;background:#2b2b2b;"></div>
<div style="left:52.2px;top:229.5px;width:38.5px;height:19px;background:#3d3d3d;"></div>
<svg width="800" height="425" viewBox="0 0 800 425"><defs><linearGradient id="kg572_2370" x1="0" y1="0" x2="0" y2="1"><stop offset="0" stop-color="#444"/><stop offset="1" stop-color="#333"/></linearGradient></defs><circle cx="57.2" cy="237" r="3" fill="#222" stroke="#4a4a4a" stroke-width="0.7"/><circle cx="57.2" cy="237" r="1.5" fill="url(#kg572_2370)"/><path d="M57.20 235.30L57.20 237.80" stroke="#555" stroke-width="0.9"/></svg>
<svg width="800" height="425" viewBox="0 0 800 425"><defs><linearGradient id="kg717_2365" x1="0" y1="0" x2="0" y2="1"><stop offset="0" stop-color="#444"/><stop offset="1" stop-color="#333"/></linearGradient></defs><circle cx="71.7" cy="236.5" r="5" fill="#222" stroke="#4a4a4a" stroke-width="0.7"/><circle cx="71.7" cy="236.5" r="3.5" fill="url(#kg717_2365)"/><path d="M71.70 232.80L71.70 235.30" stroke="#555" stroke-width="0.9"/></svg>
<svg width="800" height="425" viewBox="0 0 800 425"><defs><linearGradient id="kg857_2370" x1="0" y1="0" x2="0" y2="1"><stop offset="0" stop-color="#444"/><stop offset="1" stop-color="#333"/></linearGradient></defs><circle cx="85.7" cy="237" r="4" fill="#222" stroke="#4a4a4a" stroke-width="0.7"/><circle cx="85.7" cy="237" r="2.5" fill="url(#kg857_2370)"/><path d="M85.70 234.30L85.70 236.80" stroke="#555" stroke-width="0.9"/></svg>
<div style="left:53.2px;top:243.5px;font-size:3.6px;color:#4a4a4a;line-height:4.6px;white-space:nowrap;">Post</div>
<div style="left:66.2px;top:243.5px;font-size:3.6px;color:#4a4a4a;line-height:4.6px;white-space:nowrap;">Level</div>
<div style="left:82.2px;top:243.5px;font-size:3.6px;color:#4a4a4a;line-height:4.6px;white-space:nowrap;">Pan</div>
<div style="left:52.2px;top:250.8px;width:9px;height:8.2px;background:#4a5a5a;"></div>
<div style="left:52.2px;top:252.3px;font-size:4.8px;color:#ddd;line-height:5.8px;white-space:nowrap;width:9px;text-align:center;font-weight:bold;">M</div>
<div style="left:62.400000000000006px;top:250.8px;width:9px;height:8.2px;background:#4a5a5a;"></div>
<div style="left:62.400000000000006px;top:252.3px;font-size:4.8px;color:#ddd;line-height:5.8px;white-space:nowrap;width:9px;text-align:center;font-weight:bold;">S</div>
<div style="left:72.6px;top:250.8px;width:9px;height:8.2px;background:#f2f2f2;"></div>
<div style="left:72.6px;top:252.3px;font-size:4.8px;color:#222;line-height:5.8px;white-space:nowrap;width:9px;text-align:center;font-weight:bold;">R</div>
<div style="left:82.80000000000001px;top:250.8px;width:9px;height:8.2px;background:#4a5a5a;"></div>
<div style="left:82.80000000000001px;top:252.3px;font-size:4.8px;color:#ddd;line-height:5.8px;white-space:nowrap;width:9px;text-align:center;font-weight:bold;">W</div>
<div style="left:52.2px;top:261px;width:9px;height:8px;background:#4a5a5a;"></div>
<div style="left:52.2px;top:262.4px;font-size:4px;color:#ddd;line-height:5px;white-space:nowrap;width:9px;text-align:center;letter-spacing:-1px;">&#9654;&#9664;</div>
<svg width="800" height="425" viewBox="0 0 800 425"><defs><linearGradient id="kg712_2780" x1="0" y1="0" x2="0" y2="1"><stop offset="0" stop-color="#585858"/><stop offset="1" stop-color="#2e2e2e"/></linearGradient></defs><circle cx="71.2" cy="278" r="5.6" fill="#222" stroke="#5a5a5a" stroke-width="0.7"/><circle cx="71.2" cy="278" r="4.1" fill="url(#kg712_2780)"/><path d="M71.20 273.70L71.20 276.20" stroke="#f0f0f0" stroke-width="0.9"/></svg>
<div style="left:64.2px;top:286px;font-size:4px;color:#888;line-height:5px;white-space:nowrap;">Pan</div>
<div style="left:74.2px;top:286px;font-size:4px;color:#eee;line-height:5px;white-space:nowrap;font-weight:bold;">0% C</div>
<div style="left:50.2px;top:294.3px;font-size:3.6px;color:#ccc;line-height:4.6px;white-space:nowrap;width:11px;text-align:right;">6</div>
<div style="left:50.2px;top:305.5px;font-size:3.6px;color:#ccc;line-height:4.6px;white-space:nowrap;width:11px;text-align:right;">0</div>
<div style="left:50.2px;top:316.5px;font-size:3.6px;color:#ccc;line-height:4.6px;white-space:nowrap;width:11px;text-align:right;">-6</div>
<div style="left:50.2px;top:325.5px;font-size:3.6px;color:#ccc;line-height:4.6px;white-space:nowrap;width:11px;text-align:right;">-12</div>
<div style="left:50.2px;top:330.5px;font-size:3.6px;color:#ccc;line-height:4.6px;white-space:nowrap;width:11px;text-align:right;">-18</div>
<div style="left:50.2px;top:334.5px;font-size:3.6px;color:#ccc;line-height:4.6px;white-space:nowrap;width:11px;text-align:right;">-24</div>
<div style="left:50.2px;top:341.3px;font-size:3.6px;color:#ccc;line-height:4.6px;white-space:nowrap;width:11px;text-align:right;">-36</div>
<div style="left:50.2px;top:348.5px;font-size:3.6px;color:#ccc;line-height:4.6px;white-space:nowrap;width:11px;text-align:right;">-100</div>
<div style="left:63.7px;top:295px;width:2px;height:57px;background-image:repeating-linear-gradient(#555 0,#555 0.5px,transparent 0.5px,transparent 2.2px);"></div>
<div style="left:71.5px;top:293.6px;width:1.6px;height:59.5px;background:#0c0c0c;"></div>
<div style="left:68.0px;top:302px;width:8.6px;height:12px;background:linear-gradient(#2f5566 0,#41758c 40%,#eee 47%,#eee 55%,#3a687c 60%,#28485a 100%);border-radius:1px;"></div>
<div style="left:78.7px;top:294px;width:13px;height:57.5px;background:#1b1b1b;"></div>
<div style="left:79.7px;top:297px;width:3.5px;height:53px;background-image:repeating-linear-gradient(#5c5c5c 0,#5c5c5c 1px,transparent 1px,transparent 3px);"></div>
<div style="left:84.2px;top:303px;width:2.8px;height:47.5px;background:linear-gradient(90deg,#2c7636,#4aa656,#2c7636);"></div>
<div style="left:87.7px;top:303px;width:2.6px;height:47.5px;background:linear-gradient(90deg,#2c7636,#4aa656,#2c7636);"></div>
<div style="left:68.7px;top:355.5px;font-size:4.4px;color:#eee;line-height:5.4px;white-space:nowrap;font-weight:bold;">0.0</div>
<div style="left:80.2px;top:355.5px;font-size:4.4px;color:#eee;line-height:5.4px;white-space:nowrap;font-weight:bold;">-3.1</div>
<div style="left:49.7px;top:363px;width:42.5px;height:0.6px;background:#222;"></div>
<div style="left:49.2px;top:364.3px;font-size:5px;color:#868686;line-height:6px;white-space:nowrap;width:43.5px;text-align:center;">In / Out</div>
<div style="left:52.2px;top:371.4px;width:38.5px;height:7.8px;background:#414f50;"></div>
<div style="left:52.800000000000004px;top:372.7px;font-size:4.5px;color:#e4e4e4;line-height:5.5px;white-space:nowrap;">&#9707;ASFifcUA11</div>
<div style="left:85.2px;top:372.3px;font-size:4.6px;color:#fff;line-height:5.6px;white-space:nowrap;">&#9660;</div>
<div style="left:49.7px;top:390.5px;width:42.5px;height:0.6px;background:#222;"></div>
<div style="left:52.2px;top:391.8px;width:38.5px;height:7.4px;background:#222;"></div>
<div style="left:51.2px;top:393px;font-size:4.4px;color:#fff;line-height:5.4px;white-space:nowrap;width:40.5px;text-align:center;font-weight:bold;letter-spacing:-0.15px;">Master</div>
<div style="left:52.2px;top:400.7px;width:38.5px;height:6.8px;background:#2e2e2e;"></div>
<div style="left:52.2px;top:401.6px;font-size:4.6px;color:#ddd;line-height:5.6px;white-space:nowrap;width:38.5px;text-align:center;">A</div>
<div style="left:93px;top:57px;width:5.5px;height:355.5px;background:#262626;"></div>
<div style="left:4.7px;top:415.5px;width:43px;height:9.5px;background:linear-gradient(#2b3638,#1f2c30);"></div>
<div style="left:4.7px;top:417.5px;font-size:4.8px;color:#ddd;line-height:5.8px;white-space:nowrap;width:38px;text-align:center;">Display</div>
<div style="left:43px;top:418px;font-size:4px;color:#667;line-height:5px;white-space:nowrap;">&#9662;</div>
<div style="left:98.5px;top:44.5px;width:567px;height:86.5px;background:#484848;"></div>
<div style="left:98.5px;top:45px;width:567px;height:9.5px;background:#565656;"></div>
<div style="left:99.7px;top:46px;width:34px;height:8px;background:#586064;"></div>
<div style="left:99.7px;top:47.9px;font-size:4.9px;color:#dadada;line-height:5.9px;white-space:nowrap;width:26px;text-align:center;">View</div>
<div style="left:127.69999999999999px;top:47.5px;font-size:4px;color:#ddd;line-height:5px;white-space:nowrap;">&#9662;</div>
<div style="left:135px;top:46px;width:31.5px;height:8px;background:#586064;"></div>
<div style="left:135px;top:47.9px;font-size:4.9px;color:#dadada;line-height:5.9px;white-space:nowrap;width:23.5px;text-align:center;">Options</div>
<div style="left:160.5px;top:47.5px;font-size:4px;color:#ddd;line-height:5px;white-space:nowrap;">&#9662;</div>
<div style="left:167.5px;top:46px;width:32px;height:8px;background:#586064;"></div>
<div style="left:167.5px;top:47.9px;font-size:4.9px;color:#dadada;line-height:5.9px;white-space:nowrap;width:24px;text-align:center;">Tracks</div>
<div style="left:193.5px;top:47.5px;font-size:4px;color:#ddd;line-height:5px;white-space:nowrap;">&#9662;</div>
<div style="left:200.5px;top:46px;width:33px;height:8px;background:#586064;"></div>
<div style="left:200.5px;top:47.9px;font-size:4.9px;color:#dadada;line-height:5.9px;white-space:nowrap;width:25px;text-align:center;">Clips</div>
<div style="left:227.5px;top:47.5px;font-size:4px;color:#ddd;line-height:5px;white-space:nowrap;">&#9662;</div>
<div style="left:235px;top:46px;width:32px;height:8px;background:#586064;"></div>
<div style="left:235px;top:47.9px;font-size:4.9px;color:#dadada;line-height:5.9px;white-space:nowrap;width:24px;text-align:center;">MIDI</div>
<div style="left:261px;top:47.5px;font-size:4px;color:#ddd;line-height:5px;white-space:nowrap;">&#9662;</div>
<div style="left:268px;top:46px;width:33px;height:8px;background:#586064;"></div>
<div style="left:268px;top:47.9px;font-size:4.9px;color:#dadada;line-height:5.9px;white-space:nowrap;width:27px;text-align:center;">Region FX</div>
<div style="left:296px;top:47.5px;font-size:4px;color:#ddd;line-height:5px;white-space:nowrap;">&#9662;</div>
<div style="left:620.5px;top:46px;width:36px;height:8px;background:#586064;"></div>
<div style="left:631px;top:48px;font-size:4.8px;color:#ccc;line-height:5.8px;white-space:nowrap;">Off</div>
<div style="left:622.5px;top:47.2px;font-size:5.5px;color:#ddd;line-height:6.5px;white-space:nowrap;">&#8982;</div>
<div style="left:652.5px;top:49px;font-size:2.5px;color:#ddd;line-height:3.5px;white-space:nowrap;">&#9698;</div>
<div style="left:98.5px;top:55px;width:178px;height:17.5px;background:#3c3c3c;"></div>
<div style="left:99.7px;top:57.8px;width:65.5px;height:10.8px;background:#272727;border-radius:1px;border:0.5px solid #1e1e1e;"></div>
<div style="left:99.7px;top:57.8px;font-size:9px;color:#c4c4c4;line-height:10px;white-space:nowrap;width:65.5px;text-align:center;font-weight:bold;letter-spacing:-0.1px;">3:03:522</div>
<div style="left:169.5px;top:58.2px;font-size:9.5px;color:#ddd;line-height:10.5px;white-space:nowrap;font-weight:bold;">+</div>
<div style="left:182px;top:59px;width:7.8px;height:8.2px;background:#333;border:0.5px solid #666;border-radius:1px;"></div>
<div style="left:184px;top:61.2px;width:4.2px;height:4.2px;border:0.6px solid #ccc;"></div>
<div style="left:218px;top:57.8px;width:48px;height:10px;background:#353b3c;"></div>
<div style="left:220px;top:60.4px;font-size:4.8px;color:#ccc;line-height:5.8px;white-space:nowrap;">Custom</div>
<div style="left:260.5px;top:60px;font-size:4.8px;color:#ddd;line-height:5.8px;white-space:nowrap;">&#9662;</div>
<div style="left:276.8px;top:55px;width:388px;height:17.5px;background:#454545;"></div>
<div style="left:277px;top:56.5px;width:380px;height:13.5px;background:#2f4548;border:0.6px solid #5f7a7c;border-radius:1px;"></div>
<div style="left:277.3px;top:62.6px;width:0.5px;height:5.4px;background:#7d9a9a;"></div>
<div style="left:278.8px;top:61.6px;font-size:4.2px;color:#a4bcbc;line-height:5.2px;white-space:nowrap;">1</div>
<div style="left:293.34000000000003px;top:62.6px;width:0.5px;height:5.4px;background:#7d9a9a;"></div>
<div style="left:294.84000000000003px;top:61.6px;font-size:4.2px;color:#a4bcbc;line-height:5.2px;white-space:nowrap;">2</div>
<div style="left:309.38px;top:62.6px;width:0.5px;height:5.4px;background:#7d9a9a;"></div>
<div style="left:310.88px;top:61.6px;font-size:4.2px;color:#a4bcbc;line-height:5.2px;white-space:nowrap;">3</div>
<div style="left:325.42px;top:62.6px;width:0.5px;height:5.4px;background:#7d9a9a;"></div>
<div style="left:326.92px;top:61.6px;font-size:4.2px;color:#a4bcbc;line-height:5.2px;white-space:nowrap;">4</div>
<div style="left:341.46px;top:62.6px;width:0.5px;height:5.4px;background:#7d9a9a;"></div>
<div style="left:342.96px;top:61.6px;font-size:4.2px;color:#a4bcbc;line-height:5.2px;white-space:nowrap;">5</div>
<div style="left:357.5px;top:62.6px;width:0.5px;height:5.4px;background:#7d9a9a;"></div>
<div style="left:359.0px;top:61.6px;font-size:4.2px;color:#a4bcbc;line-height:5.2px;white-space:nowrap;">6</div>
<div style="left:373.54px;top:62.6px;width:0.5px;height:5.4px;background:#7d9a9a;"></div>
<div style="left:375.04px;top:61.6px;font-size:4.2px;color:#a4bcbc;line-height:5.2px;white-space:nowrap;">7</div>
<div style="left:389.58px;top:62.6px;width:0.5px;height:5.4px;background:#7d9a9a;"></div>
<div style="left:391.08px;top:61.6px;font-size:4.2px;color:#a4bcbc;line-height:5.2px;white-space:nowrap;">8</div>
<div style="left:405.62px;top:62.6px;width:0.5px;height:5.4px;background:#7d9a9a;"></div>
<div style="left:407.12px;top:61.6px;font-size:4.2px;color:#a4bcbc;line-height:5.2px;white-space:nowrap;">9</div>
<div style="left:421.66px;top:62.6px;width:0.5px;height:5.4px;background:#7d9a9a;"></div>
<div style="left:423.16px;top:61.6px;font-size:4.2px;color:#a4bcbc;line-height:5.2px;white-space:nowrap;">10</div>
<div style="left:437.7px;top:62.6px;width:0.5px;height:5.4px;background:#7d9a9a;"></div>
<div style="left:439.2px;top:61.6px;font-size:4.2px;color:#a4bcbc;line-height:5.2px;white-space:nowrap;">11</div>
<div style="left:453.74px;top:62.6px;width:0.5px;height:5.4px;background:#7d9a9a;"></div>
<div style="left:455.24px;top:61.6px;font-size:4.2px;color:#a4bcbc;line-height:5.2px;white-space:nowrap;">12</div>
<div style="left:469.78000000000003px;top:62.6px;width:0.5px;height:5.4px;background:#7d9a9a;"></div>
<div style="left:471.28000000000003px;top:61.6px;font-size:4.2px;color:#a4bcbc;line-height:5.2px;white-space:nowrap;">13</div>
<div style="left:485.82px;top:62.6px;width:0.5px;height:5.4px;background:#7d9a9a;"></div>
<div style="left:487.32px;top:61.6px;font-size:4.2px;color:#a4bcbc;line-height:5.2px;white-space:nowrap;">14</div>
<div style="left:501.86px;top:62.6px;width:0.5px;height:5.4px;background:#7d9a9a;"></div>
<div style="left:503.36px;top:61.6px;font-size:4.2px;color:#a4bcbc;line-height:5.2px;white-space:nowrap;">15</div>
<div style="left:517.9000000000001px;top:62.6px;width:0.5px;height:5.4px;background:#7d9a9a;"></div>
<div style="left:519.4000000000001px;top:61.6px;font-size:4.2px;color:#a4bcbc;line-height:5.2px;white-space:nowrap;">16</div>
<div style="left:533.94px;top:62.6px;width:0.5px;height:5.4px;background:#7d9a9a;"></div>
<div style="left:535.44px;top:61.6px;font-size:4.2px;color:#a4bcbc;line-height:5.2px;white-space:nowrap;">17</div>
<div style="left:549.98px;top:62.6px;width:0.5px;height:5.4px;background:#7d9a9a;"></div>
<div style="left:551.48px;top:61.6px;font-size:4.2px;color:#a4bcbc;line-height:5.2px;white-space:nowrap;">18</div>
<div style="left:566.02px;top:62.6px;width:0.5px;height:5.4px;background:#7d9a9a;"></div>
<div style="left:567.52px;top:61.6px;font-size:4.2px;color:#a4bcbc;line-height:5.2px;white-space:nowrap;">19</div>
<div style="left:582.0600000000001px;top:62.6px;width:0.5px;height:5.4px;background:#7d9a9a;"></div>
<div style="left:583.5600000000001px;top:61.6px;font-size:4.2px;color:#a4bcbc;line-height:5.2px;white-space:nowrap;">20</div>
<div style="left:598.1px;top:62.6px;width:0.5px;height:5.4px;background:#7d9a9a;"></div>
<div style="left:599.6px;top:61.6px;font-size:4.2px;color:#a4bcbc;line-height:5.2px;white-space:nowrap;">21</div>
<div style="left:614.1400000000001px;top:62.6px;width:0.5px;height:5.4px;background:#7d9a9a;"></div>
<div style="left:615.6400000000001px;top:61.6px;font-size:4.2px;color:#a4bcbc;line-height:5.2px;white-space:nowrap;">22</div>
<div style="left:630.1800000000001px;top:62.6px;width:0.5px;height:5.4px;background:#7d9a9a;"></div>
<div style="left:631.6800000000001px;top:61.6px;font-size:4.2px;color:#a4bcbc;line-height:5.2px;white-space:nowrap;">23</div>
<div style="left:646.22px;top:62.6px;width:0.5px;height:5.4px;background:#7d9a9a;"></div>
<div style="left:647.72px;top:61.6px;font-size:4.2px;color:#a4bcbc;line-height:5.2px;white-space:nowrap;">24</div>
<div style="left:658px;top:58.5px;font-size:8px;color:#ddd;line-height:9px;white-space:nowrap;">+</div>
<svg width="800" height="425" viewBox="0 0 800 425"><path d="M309.5 62h3.6v3.6z M341 62h-3.6v3.6z" fill="#e8d860"/><path d="M309.5 62v6.3h31.5v-6.3" fill="none" stroke="#e0d060" stroke-width="0.7"/><rect x="300" y="55.3" width="10" height="5.6" rx="2" fill="#e4e4e4"/><path d="M303.6 56.6l3 1.5l-3 1.5z" fill="#222"/></svg>
<div style="left:98.8px;top:73.5px;width:178px;height:44px;background:#1e1e1e;"></div>
<div style="left:100px;top:74.7px;width:167px;height:9.4px;background:#3a3a3a;"></div>
<div style="left:267.6px;top:74.7px;width:8.9px;height:9.4px;background:#474747;"></div>
<div style="left:106px;top:76.7px;font-size:4.8px;color:#bbb;line-height:5.8px;white-space:nowrap;width:10px;text-align:center;">1</div>
<svg width="800" height="425" viewBox="0 0 800 425"><path d="M119.8 79.5h1l0.6-1.6l0.6 3l0.7-4.6l0.7 6l0.7-4.4l0.6 2.6l0.5-1h1.2" fill="none" stroke="#e8e8e8" stroke-width="0.7"/></svg>
<div style="left:130px;top:75.4px;width:38px;height:8px;background:#1e1e1e;"></div>
<div style="left:130.8px;top:76.7px;font-size:4.8px;color:#e0e0e0;line-height:5.8px;white-space:nowrap;width:37px;text-align:left;font-weight:bold;letter-spacing:-0.1px;overflow:hidden;">ihmw_Rendered</div>
<div style="left:170.2px;top:75.3px;width:8.4px;height:8.2px;background:#4a5a5a;"></div>
<div style="left:170.2px;top:76.8px;font-size:4.6px;color:#ddd;line-height:5.6px;white-space:nowrap;width:8.4px;text-align:center;">M</div>
<div style="left:180.2px;top:75.3px;width:8.4px;height:8.2px;background:#4a5a5a;"></div>
<div style="left:180.2px;top:76.8px;font-size:4.6px;color:#ddd;line-height:5.6px;white-space:nowrap;width:8.4px;text-align:center;">S</div>
<div style="left:190.6px;top:75.3px;width:8.4px;height:8.2px;background:#424848;"></div>
<div style="left:193.3px;top:77.9px;width:3px;height:3px;background:#5c6262;border-radius:50%;"></div>
<div style="left:200.8px;top:75.3px;width:8.6px;height:8.2px;background:#4a5a5a;"></div>
<div style="left:200.8px;top:77.10000000000001px;font-size:4px;color:#ccc;line-height:5px;white-space:nowrap;width:8.6px;text-align:center;letter-spacing:-0.5px;">&#9664;)</div>
<div style="left:246.5px;top:76.5px;font-size:4.6px;color:#ccc;line-height:5.6px;white-space:nowrap;">&#8645;</div>
<div style="left:252.5px;top:75.7px;width:6px;height:7.8px;background:#2b2b2b;"></div>
<div style="left:273.5px;top:78.2px;font-size:4px;color:#bbb;line-height:5px;white-space:nowrap;">.</div>
<div style="left:100px;top:85.5px;width:167px;height:9.4px;background:#3a3a3a;"></div>
<div style="left:267.6px;top:85.5px;width:8.9px;height:9.4px;background:#474747;"></div>
<div style="left:106px;top:87.5px;font-size:4.8px;color:#bbb;line-height:5.8px;white-space:nowrap;width:10px;text-align:center;">2</div>
<svg width="800" height="425" viewBox="0 0 800 425"><path d="M119.8 90.3h1l0.6-1.6l0.6 3l0.7-4.6l0.7 6l0.7-4.4l0.6 2.6l0.5-1h1.2" fill="none" stroke="#e8e8e8" stroke-width="0.7"/></svg>
<div style="left:130px;top:86.2px;width:38px;height:8px;background:#f0b768;"></div>
<div style="left:130.8px;top:87.5px;font-size:4.8px;color:#8a4a10;line-height:5.8px;white-space:nowrap;width:37px;text-align:left;font-weight:bold;letter-spacing:-0.1px;overflow:hidden;">ihmw_Skip_Voc</div>
<div style="left:170.2px;top:86.1px;width:8.4px;height:8.2px;background:#4a5a5a;"></div>
<div style="left:170.2px;top:87.6px;font-size:4.6px;color:#ddd;line-height:5.6px;white-space:nowrap;width:8.4px;text-align:center;">M</div>
<div style="left:180.2px;top:86.1px;width:8.4px;height:8.2px;background:#4fd66a;"></div>
<div style="left:180.2px;top:87.6px;font-size:4.6px;color:#14501f;line-height:5.6px;white-space:nowrap;width:8.4px;text-align:center;font-weight:bold;">S</div>
<div style="left:190.6px;top:86.1px;width:8.4px;height:8.2px;background:#424848;"></div>
<div style="left:193.3px;top:88.7px;width:3px;height:3px;background:#5c6262;border-radius:50%;"></div>
<div style="left:200.8px;top:86.1px;width:8.6px;height:8.2px;background:#4a5a5a;"></div>
<div style="left:200.8px;top:87.9px;font-size:4px;color:#ccc;line-height:5px;white-space:nowrap;width:8.6px;text-align:center;letter-spacing:-0.5px;">&#9664;)</div>
<div style="left:246.5px;top:87.3px;font-size:4.6px;color:#ccc;line-height:5.6px;white-space:nowrap;">&#8645;</div>
<div style="left:252.5px;top:86.5px;width:6px;height:7.8px;background:#2b2b2b;"></div>
<div style="left:235px;top:87.5px;font-size:4.8px;color:#ddd;line-height:5.8px;white-space:nowrap;">-3.1</div>
<div style="left:254px;top:89.1px;width:1.2px;height:3.8px;background:#2f9440;"></div>
<div style="left:256px;top:89.1px;width:1.2px;height:3.8px;background:#2f9440;"></div>
<div style="left:273.5px;top:89.0px;font-size:4px;color:#bbb;line-height:5px;white-space:nowrap;">.</div>
<div style="left:100px;top:96.3px;width:167px;height:9.4px;background:#3a3a3a;"></div>
<div style="left:267.6px;top:96.3px;width:8.9px;height:9.4px;background:#474747;"></div>
<div style="left:106px;top:98.3px;font-size:4.8px;color:#bbb;line-height:5.8px;white-space:nowrap;width:10px;text-align:center;">3</div>
<svg width="800" height="425" viewBox="0 0 800 425"><path d="M119.8 101.1h1l0.6-1.6l0.6 3l0.7-4.6l0.7 6l0.7-4.4l0.6 2.6l0.5-1h1.2" fill="none" stroke="#e8e8e8" stroke-width="0.7"/></svg>
<div style="left:130px;top:97.0px;width:38px;height:8px;background:#1e1e1e;"></div>
<div style="left:130.8px;top:98.3px;font-size:4.8px;color:#e0e0e0;line-height:5.8px;white-space:nowrap;width:37px;text-align:left;font-weight:bold;letter-spacing:-0.1px;overflow:hidden;">ihmw_SlideGuit</div>
<div style="left:170.2px;top:96.89999999999999px;width:8.4px;height:8.2px;background:#4a5a5a;"></div>
<div style="left:170.2px;top:98.39999999999999px;font-size:4.6px;color:#ddd;line-height:5.6px;white-space:nowrap;width:8.4px;text-align:center;">M</div>
<div style="left:180.2px;top:96.89999999999999px;width:8.4px;height:8.2px;background:#4a5a5a;"></div>
<div style="left:180.2px;top:98.39999999999999px;font-size:4.6px;color:#ddd;line-height:5.6px;white-space:nowrap;width:8.4px;text-align:center;">S</div>
<div style="left:190.6px;top:96.89999999999999px;width:8.4px;height:8.2px;background:#424848;"></div>
<div style="left:193.3px;top:99.5px;width:3px;height:3px;background:#5c6262;border-radius:50%;"></div>
<div style="left:200.8px;top:96.89999999999999px;width:8.6px;height:8.2px;background:#4a5a5a;"></div>
<div style="left:200.8px;top:98.7px;font-size:4px;color:#ccc;line-height:5px;white-space:nowrap;width:8.6px;text-align:center;letter-spacing:-0.5px;">&#9664;)</div>
<div style="left:246.5px;top:98.1px;font-size:4.6px;color:#ccc;line-height:5.6px;white-space:nowrap;">&#8645;</div>
<div style="left:252.5px;top:97.3px;width:6px;height:7.8px;background:#2b2b2b;"></div>
<div style="left:273.5px;top:99.8px;font-size:4px;color:#bbb;line-height:5px;white-space:nowrap;">.</div>
<div style="left:100px;top:107px;width:167px;height:9.4px;background:#3a3a3a;"></div>
<div style="left:267.6px;top:107px;width:8.9px;height:9.4px;background:#474747;"></div>
<div style="left:106px;top:109px;font-size:4.8px;color:#bbb;line-height:5.8px;white-space:nowrap;width:10px;text-align:center;">4</div>
<svg width="800" height="425" viewBox="0 0 800 425"><path d="M119.8 111.8h1l0.6-1.6l0.6 3l0.7-4.6l0.7 6l0.7-4.4l0.6 2.6l0.5-1h1.2" fill="none" stroke="#e8e8e8" stroke-width="0.7"/></svg>
<div style="left:130px;top:107.7px;width:38px;height:8px;background:#1e1e1e;"></div>
<div style="left:130.8px;top:109px;font-size:4.8px;color:#e0e0e0;line-height:5.8px;white-space:nowrap;width:37px;text-align:left;font-weight:bold;letter-spacing:-0.1px;overflow:hidden;">ihmw_Bass (4)</div>
<div style="left:170.2px;top:107.6px;width:8.4px;height:8.2px;background:#4a5a5a;"></div>
<div style="left:170.2px;top:109.1px;font-size:4.6px;color:#ddd;line-height:5.6px;white-space:nowrap;width:8.4px;text-align:center;">M</div>
<div style="left:180.2px;top:107.6px;width:8.4px;height:8.2px;background:#4a5a5a;"></div>
<div style="left:180.2px;top:109.1px;font-size:4.6px;color:#ddd;line-height:5.6px;white-space:nowrap;width:8.4px;text-align:center;">S</div>
<div style="left:190.6px;top:107.6px;width:8.4px;height:8.2px;background:#424848;"></div>
<div style="left:193.3px;top:110.2px;width:3px;height:3px;background:#5c6262;border-radius:50%;"></div>
<div style="left:200.8px;top:107.6px;width:8.6px;height:8.2px;background:#4a5a5a;"></div>
<div style="left:200.8px;top:109.4px;font-size:4px;color:#ccc;line-height:5px;white-space:nowrap;width:8.6px;text-align:center;letter-spacing:-0.5px;">&#9664;)</div>
<div style="left:246.5px;top:108.8px;font-size:4.6px;color:#ccc;line-height:5.6px;white-space:nowrap;">&#8645;</div>
<div style="left:252.5px;top:108px;width:6px;height:7.8px;background:#2b2b2b;"></div>
<div style="left:273.5px;top:110.5px;font-size:4px;color:#bbb;line-height:5px;white-space:nowrap;">.</div>
<div style="left:98.8px;top:117.5px;width:178px;height:10.5px;background:#3c3c3c;"></div>
<div style="left:99px;top:122.6px;width:159px;height:1.6px;background:#242424;"></div>
<div style="left:259.5px;top:119.5px;font-size:5.5px;color:#ddd;line-height:6.5px;white-space:nowrap;">&#9167;</div>
<div style="left:276.8px;top:72.5px;width:381px;height:45px;background:#2a2a2a;"></div>
<div style="left:276.8px;top:74.7px;width:381px;height:9.5px;background:#4b4b4b;"></div>
<div style="left:276.8px;top:85.5px;width:381px;height:9.5px;background:#4b4b4b;"></div>
<div style="left:276.8px;top:96.3px;width:381px;height:9.5px;background:#4b4b4b;"></div>
<div style="left:276.8px;top:107px;width:381px;height:9.5px;background:#4b4b4b;"></div>
<div style="left:277px;top:74.7px;width:127.7px;height:9.5px;background:#737373;"></div>
<div style="left:277px;top:74.7px;width:127.7px;height:5.6px;background:#5a6460;"></div>
<div style="left:278.5px;top:75.2px;font-size:4.7px;color:#86a898;line-height:5.7px;white-space:nowrap;">&lt;Melodyn</div>
<div style="left:309.1px;top:74.7px;width:0.5px;height:9.5px;background:#555;"></div>
<div style="left:302.0px;top:76.3px;width:5.5px;height:3.2px;background:#5a5a5a;"></div>
<div style="left:302.5px;top:76.2px;font-size:3px;color:#eee;line-height:4px;white-space:nowrap;font-weight:bold;">fX</div>
<div style="left:310.5px;top:75.2px;font-size:4.7px;color:#86a898;line-height:5.7px;white-space:nowrap;">&lt;Melodyn</div>
<div style="left:341.1px;top:74.7px;width:0.5px;height:9.5px;background:#555;"></div>
<div style="left:334.0px;top:76.3px;width:5.5px;height:3.2px;background:#5a5a5a;"></div>
<div style="left:334.5px;top:76.2px;font-size:3px;color:#eee;line-height:4px;white-space:nowrap;font-weight:bold;">fX</div>
<div style="left:342.5px;top:75.2px;font-size:4.7px;color:#86a898;line-height:5.7px;white-space:nowrap;">&lt;Melodyn</div>
<div style="left:373.1px;top:74.7px;width:0.5px;height:9.5px;background:#555;"></div>
<div style="left:366.0px;top:76.3px;width:5.5px;height:3.2px;background:#5a5a5a;"></div>
<div style="left:366.5px;top:76.2px;font-size:3px;color:#eee;line-height:4px;white-space:nowrap;font-weight:bold;">fX</div>
<div style="left:374.5px;top:75.2px;font-size:4.7px;color:#86a898;line-height:5.7px;white-space:nowrap;">&lt;Melodyn</div>
<div style="left:405.1px;top:74.7px;width:0.5px;height:9.5px;background:#555;"></div>
<div style="left:398.0px;top:76.3px;width:5.5px;height:3.2px;background:#5a5a5a;"></div>
<div style="left:398.5px;top:76.2px;font-size:3px;color:#eee;line-height:4px;white-space:nowrap;font-weight:bold;">fX</div>
<div style="left:400.2px;top:75.5px;width:4.5px;height:4px;background:#5a5a5a;"></div>
<div style="left:400.6px;top:75.6px;font-size:3px;color:#eee;line-height:4px;white-space:nowrap;font-weight:bold;">fX</div>
<div style="left:277px;top:85.5px;width:378.5px;height:9.4px;background:#747474;"></div>
<div style="left:278.5px;top:87px;font-size:4.9px;color:#d0ccc4;line-height:5.9px;white-space:nowrap;"><span style="color:#d89a58">&lt;Melodyne&gt;</span> ihmw_Skip_Vocal (2)</div>
<div style="left:277px;top:96.3px;width:378.5px;height:9.4px;background:#6c6b76;"></div>
<div style="left:278.5px;top:97.8px;font-size:4.9px;color:#a09cb0;line-height:5.9px;white-space:nowrap;"><span style="color:#9088b8">&lt;Melodyne&gt;</span> ihmw_SlideGuitar_A (3)</div>
<div style="left:277px;top:107px;width:207.7px;height:9.4px;background:#6e6e6e;"></div>
<div style="left:278.5px;top:108.5px;font-size:4.9px;color:#90b0b8;line-height:5.9px;white-space:nowrap;"><span style="color:#5aa8c0">&lt;Melodyne&gt;</span> ihmw_Bass (4)</div>
<div style="left:479.5px;top:107.8px;width:5px;height:4px;background:#5a5a5a;"></div>
<div style="left:480px;top:107.9px;font-size:3px;color:#eee;line-height:4px;white-space:nowrap;font-weight:bold;">fX</div>
<div style="left:653px;top:86.3px;width:2.5px;height:3.6px;background:#ccc;"></div>
<div style="left:653px;top:97.2px;width:2.5px;height:3.6px;background:#ccc;"></div>
<div style="left:345px;top:90px;width:310px;height:1px;background:repeating-linear-gradient(90deg,#c07c30 0,#c07c30 2px,transparent 2px,transparent 3.5px);opacity:0.75;"></div>
<div style="left:347px;top:89px;width:4px;height:2px;background:#d98626;"></div>
<div style="left:351px;top:89px;width:2px;height:2px;background:#d98626;"></div>
<div style="left:358px;top:89px;width:3px;height:2px;background:#d98626;"></div>
<div style="left:362px;top:89px;width:5px;height:2px;background:#d98626;"></div>
<div style="left:368px;top:90px;width:2px;height:1px;background:#d98626;"></div>
<div style="left:370px;top:89px;width:2px;height:2px;background:#d98626;"></div>
<div style="left:376px;top:89px;width:4px;height:2px;background:#d98626;"></div>
<div style="left:381px;top:89px;width:3px;height:2px;background:#d98626;"></div>
<div style="left:384px;top:89px;width:5px;height:2px;background:#d98626;"></div>
<div style="left:394px;top:89px;width:2px;height:2px;background:#d98626;"></div>
<div style="left:396px;top:89px;width:3px;height:2px;background:#d98626;"></div>
<div style="left:405.6px;top:89px;width:4px;height:2px;background:#d98626;"></div>
<div style="left:409.6px;top:89px;width:3px;height:2px;background:#d98626;"></div>
<div style="left:412.6px;top:89px;width:5px;height:2px;background:#d98626;"></div>
<div style="left:417.6px;top:89px;width:4px;height:3px;background:#e89028;"></div>
<div style="left:421.6px;top:89px;width:2.3999999999999773px;height:2px;background:#d98626;"></div>
<div style="left:436.7px;top:89px;width:4px;height:2px;background:#d98626;"></div>
<div style="left:440.7px;top:89px;width:4px;height:2px;background:#d98626;"></div>
<div style="left:445.7px;top:89px;width:4px;height:2px;background:#d98626;"></div>
<div style="left:462px;top:89px;width:4px;height:2px;background:#d98626;"></div>
<div style="left:467px;top:89px;width:5px;height:2px;background:#d98626;"></div>
<div style="left:472px;top:89px;width:4px;height:2px;background:#d98626;"></div>
<div style="left:477px;top:89px;width:5px;height:2px;background:#d98626;"></div>
<div style="left:483px;top:89px;width:4px;height:3px;background:#e89028;"></div>
<div style="left:487px;top:89px;width:5px;height:2px;background:#d98626;"></div>
<div style="left:492px;top:89px;width:3px;height:2px;background:#d98626;"></div>
<div style="left:495px;top:89px;width:1.6999999999999886px;height:2px;background:#d98626;"></div>
<div style="left:507px;top:89px;width:4px;height:3px;background:#e89028;"></div>
<div style="left:511px;top:89px;width:4px;height:2px;background:#d98626;"></div>
<div style="left:515px;top:89px;width:5px;height:2px;background:#d98626;"></div>
<div style="left:537px;top:90px;width:4px;height:1px;background:#d98626;"></div>
<div style="left:542px;top:89px;width:3px;height:2px;background:#d98626;"></div>
<div style="left:546px;top:89px;width:2px;height:2px;background:#d98626;"></div>
<div style="left:567px;top:89px;width:4px;height:2px;background:#d98626;"></div>
<div style="left:571px;top:89px;width:3px;height:2px;background:#d98626;"></div>
<div style="left:575px;top:89px;width:3px;height:2px;background:#d98626;"></div>
<div style="left:578px;top:89px;width:2px;height:2px;background:#d98626;"></div>
<div style="left:598.7px;top:89px;width:4px;height:2px;background:#d98626;"></div>
<div style="left:603.7px;top:89px;width:5px;height:2px;background:#d98626;"></div>
<div style="left:608.7px;top:89px;width:2px;height:3px;background:#e89028;"></div>
<div style="left:627px;top:89px;width:3px;height:2px;background:#d98626;"></div>
<div style="left:630px;top:89px;width:5px;height:2px;background:#d98626;"></div>
<div style="left:635px;top:89px;width:5px;height:2px;background:#d98626;"></div>
<div style="left:640px;top:89px;width:2px;height:3px;background:#e89028;"></div>
<div style="left:643px;top:89px;width:2.6000000000000227px;height:3px;background:#e89028;"></div>
<div style="left:277px;top:101.4px;width:378px;height:0.4px;background:#6c6888;"></div>
<div style="left:283px;top:101.2px;width:17px;height:0.6px;background:#6a62a0;"></div>
<div style="left:330px;top:101.2px;width:15px;height:0.6px;background:#6a62a0;"></div>
<div style="left:400px;top:101.2px;width:20px;height:0.6px;background:#6a62a0;"></div>
<div style="left:470px;top:101.2px;width:20px;height:0.6px;background:#6a62a0;"></div>
<div style="left:277px;top:112.2px;width:207px;height:0.4px;background:#4c8498;"></div>
<div style="left:300px;top:112px;width:20px;height:0.7px;background:#3f90ac;background:repeating-linear-gradient(90deg,#3f90ac 0,#3f90ac 2px,transparent 2px,transparent 3px);"></div>
<div style="left:340px;top:112px;width:55px;height:0.7px;background:#3f90ac;background:repeating-linear-gradient(90deg,#3f90ac 0,#3f90ac 2px,transparent 2px,transparent 3px);"></div>
<div style="left:405px;top:112px;width:35px;height:0.7px;background:#3f90ac;background:repeating-linear-gradient(90deg,#3f90ac 0,#3f90ac 2px,transparent 2px,transparent 3px);"></div>
<div style="left:450px;top:112px;width:25px;height:0.7px;background:#3f90ac;background:repeating-linear-gradient(90deg,#3f90ac 0,#3f90ac 2px,transparent 2px,transparent 3px);"></div>
<div style="left:319px;top:56.5px;width:0.6px;height:61px;background:#b4b4b4;"></div>
<div style="left:276.8px;top:117.5px;width:388px;height:13px;background:#3e3e3e;"></div>
<div style="left:279px;top:119.8px;font-size:4px;color:#ddd;line-height:5px;white-space:nowrap;">&#9664;</div>
<div style="left:285px;top:120px;width:6.3px;height:6.5px;background:#d8d8d8;"></div>
<div style="left:630px;top:119.8px;font-size:4.5px;color:#ccc;line-height:5.5px;white-space:nowrap;">&#9656;</div>
<div style="left:645.5px;top:124.5px;width:1.6px;height:1.3px;background:#ddd;"></div>
<svg width="800" height="425" viewBox="0 0 800 425"><circle cx="639.5" cy="122" r="1.7" fill="none" stroke="#ddd" stroke-width="0.7"/><path d="M640.69 123.19l1.8 1.8" stroke="#ddd" stroke-width="0.9"/><circle cx="652" cy="122" r="1.7" fill="none" stroke="#ddd" stroke-width="0.7"/><path d="M653.19 123.19l1.8 1.8" stroke="#ddd" stroke-width="0.9"/><circle cx="660" cy="101.5" r="1.5" fill="none" stroke="#ddd" stroke-width="0.7"/><path d="M661.05 102.55l1.8 1.8" stroke="#ddd" stroke-width="0.9"/><circle cx="660" cy="112" r="1.5" fill="none" stroke="#ddd" stroke-width="0.7"/><path d="M661.05 113.05l1.8 1.8" stroke="#ddd" stroke-width="0.9"/></svg>
<div style="left:657.8px;top:72.5px;width:6px;height:45px;background:#3a3a3a;"></div>
<div style="left:658.3px;top:75px;font-size:3.5px;color:#222;line-height:4.5px;white-space:nowrap;">&#9650;</div>
<div style="left:658px;top:81.3px;width:5.4px;height:6.7px;background:#d8d8d8;"></div>
<div style="left:658.3px;top:92px;font-size:3.5px;color:#222;line-height:4.5px;white-space:nowrap;">&#9660;</div>
<div style="left:658.3px;top:106.3px;width:4.6px;height:2px;background:#ccc;"></div>
<div style="left:98.5px;top:128.5px;width:567px;height:2.5px;background:#2b2b2b;"></div>
<div style="left:665.5px;top:44.5px;width:134.5px;height:86.5px;background:#2e2e2e;"></div>
<div style="left:667px;top:45px;width:133px;height:10.5px;background:#3a3a3a;"></div>
<div style="left:668px;top:46px;width:32.5px;height:9.5px;background:#434343;"></div>
<div style="left:678.5px;top:47.5px;font-size:4.8px;color:#aaa;line-height:5.8px;white-space:nowrap;">Media</div>
<div style="left:670.5px;top:48px;width:5px;height:4.5px;background:#777;border-radius:0.5px;"></div>
<div style="left:702.5px;top:46px;width:34px;height:10.5px;background:#575757;"></div>
<div style="left:711px;top:47.5px;font-size:4.8px;color:#eee;line-height:5.8px;white-space:nowrap;font-weight:bold;">Plugins</div>
<div style="left:731px;top:47.8px;font-size:3.8px;color:#888;line-height:4.8px;white-space:nowrap;">&#9662;</div>
<svg width="800" height="425" viewBox="0 0 800 425"><path d="M704 53.5l4.5-5l1.4 0.8l-1 1.6z M706.5 49.2l2.4-1.9" stroke="#ccc" stroke-width="0.6" fill="#999"/><path d="M740.5 48.3h4v5h-4z M740 48.3h5" stroke="#888" stroke-width="0.6" fill="none"/></svg>
<div style="left:738px;top:46px;width:32.5px;height:9.5px;background:#434343;"></div>
<div style="left:748px;top:47.5px;font-size:4.8px;color:#aaa;line-height:5.8px;white-space:nowrap;">Notes</div>
<div style="left:772px;top:46px;width:28px;height:8.5px;background:#4a4f4f;"></div>
<div style="left:779px;top:47px;font-size:4.2px;color:#ddd;line-height:5.2px;white-space:nowrap;letter-spacing:-0.3px;">&#10064; &#9662; &#9656;&#9656;</div>
<div style="left:669.5px;top:56.7px;width:31px;height:3.6px;background:#e0873a;"></div>
<div style="left:707px;top:58px;width:3px;height:2.5px;background:#bbb;border-radius:1px 1px 0 0;"></div>
<div style="left:719px;top:58px;width:5px;height:2.5px;background:#ccc;"></div>
<div style="left:732px;top:58px;width:5px;height:2.5px;background:#ccc;"></div>
<div style="left:667px;top:62.6px;width:133px;height:67px;background:#3d3d3d;border-radius:1.5px;"></div>
<div style="left:671px;top:64.3px;font-size:5px;color:#e0e0e0;line-height:6px;white-space:nowrap;font-weight:bold;letter-spacing:-0.15px;">HELP MODULE</div>
<div style="left:778px;top:64px;font-size:4.2px;color:#ccc;line-height:5.2px;white-space:nowrap;">&#10064; &#9662; &#8225;</div>
<div style="left:669.5px;top:72px;width:129px;height:56px;background:#1f1f1f;"></div>
<div style="left:97.5px;top:130.5px;width:702.5px;height:284px;background:#1e1e1e;"></div>
<div style="left:98.3px;top:131px;width:700px;height:273.5px;background:#b8b8b8;"></div>
<div style="left:98.3px;top:131px;width:700px;height:7.5px;background:#dedede;"></div>
<div style="left:98.3px;top:138.5px;width:700px;height:1.2px;background:#8c8c8c;"></div>
<div style="left:98.3px;top:139.7px;width:700px;height:17px;background:#c2c2c2;"></div>
<div style="left:98.3px;top:156.7px;width:700px;height:0.7px;background:#9a9a9a;"></div>
<div style="left:103px;top:132.6px;font-size:4.9px;color:#2a2a2a;line-height:5.9px;white-space:nowrap;">Settings</div>
<div style="left:124.6px;top:132.6px;font-size:4.9px;color:#2a2a2a;line-height:5.9px;white-space:nowrap;">Edit</div>
<div style="left:137.3px;top:132.6px;font-size:4.9px;color:#2a2a2a;line-height:5.9px;white-space:nowrap;">Algorithm</div>
<div style="left:161.7px;top:132.6px;font-size:4.9px;color:#2a2a2a;line-height:5.9px;white-space:nowrap;">Options</div>
<div style="left:181.8px;top:132.6px;font-size:4.9px;color:#2a2a2a;line-height:5.9px;white-space:nowrap;">Help</div>
<div style="left:748px;top:131.5px;font-size:6px;color:#2a2a2a;line-height:7px;white-space:nowrap;font-weight:bold;letter-spacing:0.02px;">melodyne</div>
<div style="left:776.8px;top:131.8px;font-size:5.2px;color:#e8a050;line-height:6.2px;white-space:nowrap;letter-spacing:-0.15px;">studio</div>
<div style="left:103.5px;top:145px;width:6px;height:7.5px;background:#f4f4f4;border:0.7px solid #333;"></div>
<div style="left:103.5px;top:145px;width:2.4px;height:7.5px;background:#333;"></div>
<div style="left:113.5px;top:146.0px;width:8px;height:0.6px;background:#333;"></div>
<div style="left:115px;top:145.3px;width:1.4px;height:1.8px;background:#333;"></div>
<div style="left:113.5px;top:148.4px;width:8px;height:0.6px;background:#333;"></div>
<div style="left:117px;top:147.70000000000002px;width:1.4px;height:1.8px;background:#333;"></div>
<div style="left:113.5px;top:150.8px;width:8px;height:0.6px;background:#333;"></div>
<div style="left:119px;top:150.10000000000002px;width:1.4px;height:1.8px;background:#333;"></div>
<svg width="800" height="425" viewBox="0 0 800 425"><path transform="translate(0 1)" d="M124 151.5v-2l1-2l0.8 1.5l0.8-3l0.9 2.4l0.8-1.4l1 2.4l1-1l0.8 1.4v1.7z" fill="#444"/></svg>
<div style="left:137.5px;top:143.6px;width:8.6px;height:9.6px;background:#d4d4d4;border-radius:1px;box-shadow:0 0 0 0.45px #a0a0a0;"></div>
<div style="left:139.3px;top:144.6px;font-size:6px;color:#333;line-height:7px;white-space:nowrap;">&#10047;</div>
<div style="left:151.5px;top:143.6px;width:24.5px;height:9.6px;background:#cfcfcf;border-radius:1px;box-shadow:0 0 0 0.45px #a0a0a0;"></div>
<div style="left:153.5px;top:146px;font-size:4.8px;color:#333;line-height:5.8px;white-space:nowrap;">114</div>
<div style="left:176.6px;top:143.6px;width:4.2px;height:9.6px;background:#d8d8d8;border-radius:1px;box-shadow:0 0 0 0.45px #a0a0a0;"></div>
<div style="left:177.5px;top:148px;font-size:3px;color:#333;line-height:4px;white-space:nowrap;">&#9662;</div>
<div style="left:353px;top:143.9px;width:8.8px;height:9.2px;background:#f6f6f6;border-radius:1px;"></div>
<div style="left:362.3px;top:143.9px;width:9.6px;height:9.2px;background:#c8c8c8;border-left:0.5px solid #aaa;"></div>
<div style="left:372.2px;top:143.9px;width:10px;height:9.2px;background:#c8c8c8;border-left:0.5px solid #aaa;"></div>
<svg width="800" height="425" viewBox="0 0 800 425"><circle cx="356" cy="149.6" r="1.5" fill="none" stroke="#e8703a" stroke-width="0.9"/><circle cx="358.6" cy="147.4" r="1.5" fill="none" stroke="#e8703a" stroke-width="0.9"/><circle cx="367" cy="148.5" r="1.6" fill="#f0a080" stroke="#e0603a" stroke-width="0.6"/><path d="M374.5 150.5l2-0.3l1.2-2.5l2.3-0.5" stroke="#222" stroke-width="1" fill="none"/><circle cx="375" cy="150.3" r="1" fill="#222"/><circle cx="379.6" cy="147.3" r="1" fill="#222"/></svg>
<div style="left:386px;top:143.9px;width:9.6px;height:9.2px;background:#f6f6f6;border-radius:1px;"></div>
<div style="left:396px;top:143.9px;width:9.7px;height:9.2px;background:#c6c6c6;border-left:0.5px solid #a4a4a4;"></div>
<div style="left:406px;top:143.9px;width:9.7px;height:9.2px;background:#c6c6c6;border-left:0.5px solid #a4a4a4;"></div>
<div style="left:416px;top:143.9px;width:9.7px;height:9.2px;background:#c6c6c6;border-left:0.5px solid #a4a4a4;"></div>
<div style="left:426px;top:143.9px;width:9.7px;height:9.2px;background:#c6c6c6;border-left:0.5px solid #a4a4a4;"></div>
<div style="left:436px;top:143.9px;width:9.7px;height:9.2px;background:#c6c6c6;border-left:0.5px solid #a4a4a4;"></div>
<svg width="800" height="425" viewBox="0 0 800 425"><path d="M388.6 145.2v6l1.5-1.3l1.1 2.4l1-0.5l-1.1-2.3l2-0.2z" fill="#111"/><path d="M400.8 145v7 M399.4 147.2h2.8v2.6h-2.8z" stroke="#222" stroke-width="0.8" fill="#555"/><path d="M407.5 150.5h7 M408.5 150.3q1-3 2.4-2.6q1 0.4 2.6 2.4" stroke="#222" stroke-width="0.8" fill="none"/><ellipse cx="420.3" cy="148.6" rx="1.8" ry="1.1" fill="none" stroke="#222" stroke-width="0.7"/><path d="M427.2 148.6h7" stroke="#222" stroke-width="0.7"/><ellipse cx="430.6" cy="148.6" rx="2" ry="1" fill="#222"/><path d="M437.5 148.6h7 M441 145.5v6.2" stroke="#222" stroke-width="0.7"/><circle cx="441" cy="148.6" r="1" fill="#222"/></svg>
<div style="left:448px;top:146px;width:29px;height:6px;background:#dedede;border-radius:1px;box-shadow:0 0 0 0.45px #9a9a9a, inset 0 0.6px 0.6px #b4b4b4;"></div>
<div style="left:448px;top:146.2px;font-size:4.6px;color:#1c1c1c;line-height:5.6px;white-space:nowrap;width:29px;text-align:center;">C 3</div>
<div style="left:481px;top:146px;width:30px;height:6px;background:#dedede;border-radius:1px;box-shadow:0 0 0 0.45px #9a9a9a, inset 0 0.6px 0.6px #b4b4b4;"></div>
<div style="left:481px;top:146.2px;font-size:4.6px;color:#1c1c1c;line-height:5.6px;white-space:nowrap;width:30px;text-align:center;">-5 ct</div>
<div style="left:515px;top:144.5px;width:12px;height:8.6px;background:#d2d2d2;border-radius:1px;box-shadow:0 0 0 0.45px #a8a8a8;"></div>
<div style="left:531.5px;top:144.5px;width:12px;height:8.6px;background:#d2d2d2;border-radius:1px;box-shadow:0 0 0 0.45px #a8a8a8;"></div>
<svg width="800" height="425" viewBox="0 0 800 425"><path d="M521 145.5v6.5 M518 148.7h6 M519.5 147.3l1.5-1.2l1.5 1.2 M519.5 150.2l1.5 1.2l1.5-1.2" stroke="#222" stroke-width="0.6" fill="none"/><path d="M537.5 145.5v6.5 M534.5 148.7h6 M535 147.5h5 M535 149.9h5" stroke="#222" stroke-width="0.6" fill="none"/></svg>
<div style="left:739px;top:145px;width:54.5px;height:7.6px;background:#cfcfcf;border-radius:1px;box-shadow:0 0 0 0.45px #a2a2a2;"></div>
<div style="left:762.7px;top:145px;width:7px;height:7.6px;background:#f4f4f4;border:0.6px solid #444;"></div>
<svg width="800" height="425" viewBox="0 0 800 425"><path d="M742 149.5h2l1.4-1.4h1.6" stroke="#333" stroke-width="0.7" fill="none"/><circle cx="742.6" cy="149.5" r="0.8" fill="#333"/><path d="M764.2 150.8h1.5l1-2.6h1.6" stroke="#555" stroke-width="0.6" fill="none"/><path d="M787 147h5.5 M787 148.8h5.5 M787 150.6h5.5" stroke="#333" stroke-width="0.7" stroke-dasharray="1.6 0.5"/></svg>
<div style="left:98.3px;top:157.4px;width:84.7px;height:96.3px;background:#b6b6b6;"></div>
<div style="left:98.3px;top:169px;width:84.7px;height:10.2px;background:#8e8e8e;"></div>
<div style="left:109.8px;top:159.7px;font-size:5px;color:#222;line-height:6px;white-space:nowrap;letter-spacing:-0.12px;">ihmw_Re...Loop (1)</div>
<svg width="800" height="425" viewBox="0 0 800 425"><circle cx="161.6" cy="163.8" r="1.5" fill="#cfcfcf" stroke="#808080" stroke-width="0.5"/><circle cx="163.6" cy="162" r="1.5" fill="#e2e2e2" stroke="#808080" stroke-width="0.5"/><circle cx="171.2" cy="164" r="1.8" fill="#f4b8a4" stroke="#e0603a" stroke-width="0.6"/><circle cx="173.3" cy="162" r="1.8" fill="#f4b8a4" stroke="#e0603a" stroke-width="0.6"/></svg>
<div style="left:109.8px;top:170.89999999999998px;font-size:5px;color:#222;line-height:6px;white-space:nowrap;letter-spacing:-0.12px;">ihmw_Skip_Vocal (2)</div>
<svg width="800" height="425" viewBox="0 0 800 425"><circle cx="161.6" cy="175.0" r="1.5" fill="#ddd" stroke="#808080" stroke-width="0.5"/><circle cx="163.6" cy="173.2" r="1.5" fill="#e2e2e2" stroke="#808080" stroke-width="0.5"/><circle cx="172.2" cy="174.2" r="3.6" fill="#f8e4dc"/><circle cx="171.2" cy="175.2" r="1.8" fill="#f4b8a4" stroke="#e0603a" stroke-width="0.6"/><circle cx="173.3" cy="173.2" r="1.8" fill="#f4b8a4" stroke="#e0603a" stroke-width="0.6"/></svg>
<div style="left:109.8px;top:181.89999999999998px;font-size:5px;color:#222;line-height:6px;white-space:nowrap;letter-spacing:-0.12px;">ihmw_Sl...itar_A (3)</div>
<svg width="800" height="425" viewBox="0 0 800 425"><circle cx="161.6" cy="186.0" r="1.5" fill="#cfcfcf" stroke="#808080" stroke-width="0.5"/><circle cx="163.6" cy="184.2" r="1.5" fill="#e2e2e2" stroke="#808080" stroke-width="0.5"/><circle cx="171.2" cy="186.2" r="1.8" fill="#f4b8a4" stroke="#e0603a" stroke-width="0.6"/><circle cx="173.3" cy="184.2" r="1.8" fill="#f4b8a4" stroke="#e0603a" stroke-width="0.6"/></svg>
<div style="left:109.8px;top:192.89999999999998px;font-size:5px;color:#222;line-height:6px;white-space:nowrap;letter-spacing:-0.12px;">ihmw_Bass (4)</div>
<svg width="800" height="425" viewBox="0 0 800 425"><circle cx="161.6" cy="197.0" r="1.5" fill="#cfcfcf" stroke="#808080" stroke-width="0.5"/><circle cx="163.6" cy="195.2" r="1.5" fill="#e2e2e2" stroke="#808080" stroke-width="0.5"/><circle cx="171.2" cy="197.2" r="1.8" fill="#f4b8a4" stroke="#e0603a" stroke-width="0.6"/><circle cx="173.3" cy="195.2" r="1.8" fill="#f4b8a4" stroke="#e0603a" stroke-width="0.6"/></svg>
<div style="left:102.4px;top:172.3px;width:3.6px;height:3.6px;background:#f4f4f4;border-radius:50%;border:0.6px solid #444;"></div>
<div style="left:103.6px;top:173.5px;width:1.2px;height:1.2px;background:#333;border-radius:50%;"></div>
<div style="left:98.3px;top:253.4px;width:84.7px;height:0.9px;background:#6e6e6e;"></div>
<div style="left:98.3px;top:254.3px;width:84.7px;height:150.2px;background:#bababa;"></div>
<div style="left:98px;top:259.2px;font-size:4.8px;color:#222;line-height:5.8px;white-space:nowrap;width:39.400000000000006px;text-align:right;letter-spacing:-0.1px;">Pitch:</div>
<div style="left:141px;top:259.5px;width:29.4px;height:5.8px;background:#dedede;border-radius:1px;box-shadow:0 0 0 0.45px #9a9a9a, inset 0 0.6px 0.6px #b4b4b4;"></div>
<div style="left:141px;top:259.5px;font-size:4.8px;color:#1c1c1c;line-height:5.8px;white-space:nowrap;width:29.4px;text-align:center;">C 3</div>
<div style="left:141px;top:268.5px;width:29.4px;height:5.6px;background:#dedede;border-radius:1px;box-shadow:0 0 0 0.45px #9a9a9a, inset 0 0.6px 0.6px #b4b4b4;"></div>
<div style="left:141px;top:268.4px;font-size:4.8px;color:#1c1c1c;line-height:5.8px;white-space:nowrap;width:29.4px;text-align:center;">-5 ct</div>
<div style="left:141px;top:277.4px;width:29.4px;height:5.8px;background:#dedede;border-radius:1px;box-shadow:0 0 0 0.45px #9a9a9a, inset 0 0.6px 0.6px #b4b4b4;"></div>
<div style="left:141px;top:277.5px;font-size:4.6px;color:#1c1c1c;line-height:5.6px;white-space:nowrap;width:29.4px;text-align:center;">129.2 Hz</div>
<div style="left:98px;top:289.1px;font-size:4.8px;color:#222;line-height:5.8px;white-space:nowrap;width:39.400000000000006px;text-align:right;letter-spacing:-0.1px;">Pitch Modulation:</div>
<div style="left:141px;top:289.4px;width:29.4px;height:5.8px;background:#dedede;border-radius:1px;box-shadow:0 0 0 0.45px #9a9a9a, inset 0 0.6px 0.6px #b4b4b4;"></div>
<div style="left:141px;top:289.4px;font-size:4.8px;color:#1c1c1c;line-height:5.8px;white-space:nowrap;width:29.4px;text-align:center;">100.0 %</div>
<div style="left:98px;top:298.2px;font-size:4.8px;color:#222;line-height:5.8px;white-space:nowrap;width:39.400000000000006px;text-align:right;letter-spacing:-0.1px;">Pitch Drift:</div>
<div style="left:141px;top:298.4px;width:29.4px;height:5.8px;background:#dedede;border-radius:1px;box-shadow:0 0 0 0.45px #9a9a9a, inset 0 0.6px 0.6px #b4b4b4;"></div>
<div style="left:141px;top:298.4px;font-size:4.8px;color:#1c1c1c;line-height:5.8px;white-space:nowrap;width:29.4px;text-align:center;">100.0 %</div>
<div style="left:98px;top:310.6px;font-size:4.8px;color:#222;line-height:5.8px;white-space:nowrap;width:39.400000000000006px;text-align:right;letter-spacing:-0.1px;">Formants:</div>
<div style="left:141px;top:310.8px;width:29.4px;height:5.8px;background:#dedede;border-radius:1px;box-shadow:0 0 0 0.45px #9a9a9a, inset 0 0.6px 0.6px #b4b4b4;"></div>
<div style="left:141px;top:310.8px;font-size:4.8px;color:#1c1c1c;line-height:5.8px;white-space:nowrap;width:29.4px;text-align:center;">0 ct</div>
<div style="left:98px;top:319.6px;font-size:4.8px;color:#222;line-height:5.8px;white-space:nowrap;width:39.400000000000006px;text-align:right;letter-spacing:-0.1px;">Amplitude:</div>
<div style="left:141px;top:319.9px;width:29.4px;height:5.8px;background:#dedede;border-radius:1px;box-shadow:0 0 0 0.45px #9a9a9a, inset 0 0.6px 0.6px #b4b4b4;"></div>
<div style="left:141px;top:319.9px;font-size:4.8px;color:#1c1c1c;line-height:5.8px;white-space:nowrap;width:29.4px;text-align:center;">0.00 dB</div>
<div style="left:141px;top:328.8px;width:29.4px;height:5.8px;background:#dedede;border-radius:1px;box-shadow:0 0 0 0.45px #9a9a9a, inset 0 0.6px 0.6px #b4b4b4;"></div>
<div style="left:141px;top:328.8px;font-size:4.8px;color:#1c1c1c;line-height:5.8px;white-space:nowrap;width:29.4px;text-align:center;">Note Off</div>
<div style="left:98px;top:338.6px;font-size:4.8px;color:#222;line-height:5.8px;white-space:nowrap;width:39.400000000000006px;text-align:right;letter-spacing:-0.1px;">Attack Speed:</div>
<div style="left:141px;top:338.9px;width:29.4px;height:5.8px;background:#dedede;border-radius:1px;box-shadow:0 0 0 0.45px #9a9a9a, inset 0 0.6px 0.6px #b4b4b4;"></div>
<div style="left:141px;top:338.9px;font-size:4.8px;color:#1c1c1c;line-height:5.8px;white-space:nowrap;width:29.4px;text-align:center;">0.0 %</div>
<div style="left:103px;top:348.6px;width:76px;height:0.5px;background:#9c9c9c;"></div>
<div style="left:98px;top:352.8px;font-size:4.8px;color:#222;line-height:5.8px;white-space:nowrap;width:39.400000000000006px;text-align:right;letter-spacing:-0.1px;">File:</div>
<div style="left:141px;top:352.8px;font-size:4.7px;color:#222;line-height:5.7px;white-space:nowrap;letter-spacing:-0.1px;">ihmw_S...cal (2)</div>
<div style="left:98px;top:362.0px;font-size:4.8px;color:#222;line-height:5.8px;white-space:nowrap;width:39.400000000000006px;text-align:right;letter-spacing:-0.1px;">Algorithm:</div>
<div style="left:141px;top:362px;font-size:4.7px;color:#222;line-height:5.7px;white-space:nowrap;">Melodic</div>
<div style="left:183px;top:157.4px;width:1.2px;height:247px;background:#555;"></div>
<div style="left:184.2px;top:157.4px;width:614px;height:9px;background:#c6c6c6;"></div>
<div style="left:184.2px;top:166.3px;width:614px;height:4.5px;background:#d2d2d2;"></div>
<div style="left:219.5px;top:166.6px;width:149.3px;height:4px;background:#fbfbfb;"></div>
<div style="left:200.4px;top:158.5px;width:581px;height:7.8px;background:#cccccc;"></div>
<div style="left:184.2px;top:170.8px;width:16.2px;height:233.8px;background:#f2f2f2;"></div>
<div style="left:200.4px;top:170.8px;width:590.2px;height:233.8px;background:#ffffff;"></div>
<div style="left:200.4px;top:170.8px;width:590.2px;height:5.264999999999986px;background:#ececec;"></div>
<div style="left:184.2px;top:176.065px;width:16.2px;height:0.5px;background:#d0d0d0;"></div>
<div style="left:184.2px;top:179.10000000000002px;font-size:4.2px;color:#7c7c7c;line-height:5.2px;white-space:nowrap;width:16.2px;text-align:center;">G</div>
<div style="left:200.4px;top:187.535px;width:590.2px;height:11.47px;background:#ececec;"></div>
<div style="left:184.2px;top:187.535px;width:16.2px;height:0.5px;background:#d0d0d0;"></div>
<div style="left:184.2px;top:190.57000000000002px;font-size:4.2px;color:#7c7c7c;line-height:5.2px;white-space:nowrap;width:16.2px;text-align:center;">Gb</div>
<div style="left:184.2px;top:199.005px;width:16.2px;height:0.5px;background:#d0d0d0;"></div>
<div style="left:184.2px;top:202.04000000000002px;font-size:4.2px;color:#7c7c7c;line-height:5.2px;white-space:nowrap;width:16.2px;text-align:center;">F</div>
<div style="left:184.2px;top:210.475px;width:16.2px;height:0.5px;background:#d0d0d0;"></div>
<div style="left:184.2px;top:213.51000000000002px;font-size:4.2px;color:#7c7c7c;line-height:5.2px;white-space:nowrap;width:16.2px;text-align:center;">E</div>
<div style="left:200.4px;top:221.945px;width:590.2px;height:11.47px;background:#ececec;"></div>
<div style="left:184.2px;top:221.945px;width:16.2px;height:0.5px;background:#d0d0d0;"></div>
<div style="left:184.2px;top:224.98000000000002px;font-size:4.2px;color:#7c7c7c;line-height:5.2px;white-space:nowrap;width:16.2px;text-align:center;">Eb</div>
<div style="left:184.2px;top:233.415px;width:16.2px;height:0.5px;background:#d0d0d0;"></div>
<div style="left:184.2px;top:236.45000000000002px;font-size:4.2px;color:#7c7c7c;line-height:5.2px;white-space:nowrap;width:16.2px;text-align:center;">D</div>
<div style="left:200.4px;top:244.885px;width:590.2px;height:11.47px;background:#ececec;"></div>
<div style="left:184.2px;top:244.885px;width:16.2px;height:0.5px;background:#d0d0d0;"></div>
<div style="left:184.2px;top:247.92000000000002px;font-size:4.2px;color:#7c7c7c;line-height:5.2px;white-space:nowrap;width:16.2px;text-align:center;">Db</div>
<div style="left:184.2px;top:256.355px;width:16.2px;height:0.5px;background:#d0d0d0;"></div>
<div style="left:184.2px;top:259.39000000000004px;font-size:4.2px;color:#7c7c7c;line-height:5.2px;white-space:nowrap;width:16.2px;text-align:center;">C</div>
<div style="left:184.2px;top:267.825px;width:16.2px;height:0.5px;background:#d0d0d0;"></div>
<div style="left:184.2px;top:270.86px;font-size:4.2px;color:#7c7c7c;line-height:5.2px;white-space:nowrap;width:16.2px;text-align:center;">B</div>
<div style="left:200.4px;top:279.295px;width:590.2px;height:11.47px;background:#ececec;"></div>
<div style="left:184.2px;top:279.295px;width:16.2px;height:0.5px;background:#d0d0d0;"></div>
<div style="left:184.2px;top:282.33000000000004px;font-size:4.2px;color:#7c7c7c;line-height:5.2px;white-space:nowrap;width:16.2px;text-align:center;">Bb 2</div>
<div style="left:184.2px;top:290.765px;width:16.2px;height:0.5px;background:#d0d0d0;"></div>
<div style="left:184.2px;top:293.8px;font-size:4.2px;color:#7c7c7c;line-height:5.2px;white-space:nowrap;width:16.2px;text-align:center;">A</div>
<div style="left:200.4px;top:302.235px;width:590.2px;height:11.47px;background:#ececec;"></div>
<div style="left:184.2px;top:302.235px;width:16.2px;height:0.5px;background:#d0d0d0;"></div>
<div style="left:184.2px;top:305.27000000000004px;font-size:4.2px;color:#7c7c7c;line-height:5.2px;white-space:nowrap;width:16.2px;text-align:center;">Ab</div>
<div style="left:184.2px;top:313.70500000000004px;width:16.2px;height:0.5px;background:#d0d0d0;"></div>
<div style="left:184.2px;top:316.74000000000007px;font-size:4.2px;color:#7c7c7c;line-height:5.2px;white-space:nowrap;width:16.2px;text-align:center;">G</div>
<div style="left:200.4px;top:325.175px;width:590.2px;height:11.47px;background:#ececec;"></div>
<div style="left:184.2px;top:325.175px;width:16.2px;height:0.5px;background:#d0d0d0;"></div>
<div style="left:184.2px;top:328.21000000000004px;font-size:4.2px;color:#7c7c7c;line-height:5.2px;white-space:nowrap;width:16.2px;text-align:center;">Gb</div>
<div style="left:184.2px;top:336.645px;width:16.2px;height:0.5px;background:#d0d0d0;"></div>
<div style="left:184.2px;top:339.68px;font-size:4.2px;color:#7c7c7c;line-height:5.2px;white-space:nowrap;width:16.2px;text-align:center;">F</div>
<div style="left:184.2px;top:348.115px;width:16.2px;height:0.5px;background:#d0d0d0;"></div>
<div style="left:184.2px;top:351.15000000000003px;font-size:4.2px;color:#7c7c7c;line-height:5.2px;white-space:nowrap;width:16.2px;text-align:center;">E</div>
<div style="left:200.4px;top:359.58500000000004px;width:590.2px;height:11.47px;background:#ececec;"></div>
<div style="left:184.2px;top:359.58500000000004px;width:16.2px;height:0.5px;background:#d0d0d0;"></div>
<div style="left:184.2px;top:362.62000000000006px;font-size:4.2px;color:#7c7c7c;line-height:5.2px;white-space:nowrap;width:16.2px;text-align:center;">Eb</div>
<div style="left:184.2px;top:371.055px;width:16.2px;height:0.5px;background:#d0d0d0;"></div>
<div style="left:184.2px;top:374.09000000000003px;font-size:4.2px;color:#7c7c7c;line-height:5.2px;white-space:nowrap;width:16.2px;text-align:center;">D</div>
<div style="left:200.4px;top:382.525px;width:590.2px;height:11.47px;background:#ececec;"></div>
<div style="left:184.2px;top:382.525px;width:16.2px;height:0.5px;background:#d0d0d0;"></div>
<div style="left:184.2px;top:385.56px;font-size:4.2px;color:#7c7c7c;line-height:5.2px;white-space:nowrap;width:16.2px;text-align:center;">Db</div>
<div style="left:184.2px;top:393.995px;width:16.2px;height:0.5px;background:#d0d0d0;"></div>
<div style="left:184.2px;top:397.03000000000003px;font-size:4.2px;color:#7c7c7c;line-height:5.2px;white-space:nowrap;width:16.2px;text-align:center;">C</div>
<div style="left:200px;top:170.8px;width:0.5px;height:233.8px;background:#c8c8c8;"></div>
<div style="left:200.38750000000002px;top:170.8px;width:0.5px;height:233.8px;background:#eaeaea;"></div>
<div style="left:200.38750000000002px;top:169.4px;width:0.4px;height:1.2px;background:#aaa;"></div>
<div style="left:219.0px;top:157.6px;width:0.7px;height:247.00000000000003px;background:#b9b9b9;"></div>
<div style="left:220.70000000000002px;top:160.6px;font-size:4.8px;color:#333;line-height:5.8px;white-space:nowrap;">3</div>
<div style="left:237.81250000000003px;top:170.8px;width:0.5px;height:233.8px;background:#eaeaea;"></div>
<div style="left:237.81250000000003px;top:169.4px;width:0.4px;height:1.2px;background:#aaa;"></div>
<div style="left:256.52500000000003px;top:170.8px;width:0.5px;height:233.8px;background:#eaeaea;"></div>
<div style="left:256.52500000000003px;top:169.4px;width:0.4px;height:1.2px;background:#aaa;"></div>
<div style="left:275.2375px;top:170.8px;width:0.5px;height:233.8px;background:#eaeaea;"></div>
<div style="left:275.2375px;top:169.4px;width:0.4px;height:1.2px;background:#aaa;"></div>
<div style="left:293.84999999999997px;top:157.6px;width:0.7px;height:247.00000000000003px;background:#b9b9b9;"></div>
<div style="left:295.54999999999995px;top:160.6px;font-size:4.8px;color:#333;line-height:5.8px;white-space:nowrap;">4</div>
<div style="left:312.66249999999997px;top:170.8px;width:0.5px;height:233.8px;background:#eaeaea;"></div>
<div style="left:312.66249999999997px;top:169.4px;width:0.4px;height:1.2px;background:#aaa;"></div>
<div style="left:331.375px;top:170.8px;width:0.5px;height:233.8px;background:#eaeaea;"></div>
<div style="left:331.375px;top:169.4px;width:0.4px;height:1.2px;background:#aaa;"></div>
<div style="left:350.0875px;top:170.8px;width:0.5px;height:233.8px;background:#eaeaea;"></div>
<div style="left:350.0875px;top:169.4px;width:0.4px;height:1.2px;background:#aaa;"></div>
<div style="left:368.7px;top:157.6px;width:0.7px;height:247.00000000000003px;background:#b9b9b9;"></div>
<div style="left:370.4px;top:160.6px;font-size:4.8px;color:#333;line-height:5.8px;white-space:nowrap;">5</div>
<div style="left:387.5125px;top:170.8px;width:0.5px;height:233.8px;background:#eaeaea;"></div>
<div style="left:387.5125px;top:169.4px;width:0.4px;height:1.2px;background:#aaa;"></div>
<div style="left:406.225px;top:170.8px;width:0.5px;height:233.8px;background:#eaeaea;"></div>
<div style="left:406.225px;top:169.4px;width:0.4px;height:1.2px;background:#aaa;"></div>
<div style="left:424.9375px;top:170.8px;width:0.5px;height:233.8px;background:#eaeaea;"></div>
<div style="left:424.9375px;top:169.4px;width:0.4px;height:1.2px;background:#aaa;"></div>
<div style="left:443.55px;top:157.6px;width:0.7px;height:247.00000000000003px;background:#b9b9b9;"></div>
<div style="left:445.25px;top:160.6px;font-size:4.8px;color:#333;line-height:5.8px;white-space:nowrap;">6</div>
<div style="left:462.3625px;top:170.8px;width:0.5px;height:233.8px;background:#eaeaea;"></div>
<div style="left:462.3625px;top:169.4px;width:0.4px;height:1.2px;background:#aaa;"></div>
<div style="left:481.07500000000005px;top:170.8px;width:0.5px;height:233.8px;background:#eaeaea;"></div>
<div style="left:481.07500000000005px;top:169.4px;width:0.4px;height:1.2px;background:#aaa;"></div>
<div style="left:499.7875px;top:170.8px;width:0.5px;height:233.8px;background:#eaeaea;"></div>
<div style="left:499.7875px;top:169.4px;width:0.4px;height:1.2px;background:#aaa;"></div>
<div style="left:518.4000000000001px;top:157.6px;width:0.7px;height:247.00000000000003px;background:#b9b9b9;"></div>
<div style="left:520.1px;top:160.6px;font-size:4.8px;color:#333;line-height:5.8px;white-space:nowrap;">7</div>
<div style="left:537.2125px;top:170.8px;width:0.5px;height:233.8px;background:#eaeaea;"></div>
<div style="left:537.2125px;top:169.4px;width:0.4px;height:1.2px;background:#aaa;"></div>
<div style="left:555.925px;top:170.8px;width:0.5px;height:233.8px;background:#eaeaea;"></div>
<div style="left:555.925px;top:169.4px;width:0.4px;height:1.2px;background:#aaa;"></div>
<div style="left:574.6375px;top:170.8px;width:0.5px;height:233.8px;background:#eaeaea;"></div>
<div style="left:574.6375px;top:169.4px;width:0.4px;height:1.2px;background:#aaa;"></div>
<div style="left:593.25px;top:157.6px;width:0.7px;height:247.00000000000003px;background:#b9b9b9;"></div>
<div style="left:594.9499999999999px;top:160.6px;font-size:4.8px;color:#333;line-height:5.8px;white-space:nowrap;">8</div>
<div style="left:612.0624999999999px;top:170.8px;width:0.5px;height:233.8px;background:#eaeaea;"></div>
<div style="left:612.0624999999999px;top:169.4px;width:0.4px;height:1.2px;background:#aaa;"></div>
<div style="left:630.7749999999999px;top:170.8px;width:0.5px;height:233.8px;background:#eaeaea;"></div>
<div style="left:630.7749999999999px;top:169.4px;width:0.4px;height:1.2px;background:#aaa;"></div>
<div style="left:649.4875px;top:170.8px;width:0.5px;height:233.8px;background:#eaeaea;"></div>
<div style="left:649.4875px;top:169.4px;width:0.4px;height:1.2px;background:#aaa;"></div>
<div style="left:668.1px;top:157.6px;width:0.7px;height:247.00000000000003px;background:#b9b9b9;"></div>
<div style="left:669.8px;top:160.6px;font-size:4.8px;color:#333;line-height:5.8px;white-space:nowrap;">9</div>
<div style="left:686.9124999999999px;top:170.8px;width:0.5px;height:233.8px;background:#eaeaea;"></div>
<div style="left:686.9124999999999px;top:169.4px;width:0.4px;height:1.2px;background:#aaa;"></div>
<div style="left:705.6249999999999px;top:170.8px;width:0.5px;height:233.8px;background:#eaeaea;"></div>
<div style="left:705.6249999999999px;top:169.4px;width:0.4px;height:1.2px;background:#aaa;"></div>
<div style="left:724.3375px;top:170.8px;width:0.5px;height:233.8px;background:#eaeaea;"></div>
<div style="left:724.3375px;top:169.4px;width:0.4px;height:1.2px;background:#aaa;"></div>
<div style="left:742.95px;top:157.6px;width:0.7px;height:247.00000000000003px;background:#b9b9b9;"></div>
<div style="left:744.65px;top:160.6px;font-size:4.8px;color:#333;line-height:5.8px;white-space:nowrap;">10</div>
<div style="left:761.7624999999999px;top:170.8px;width:0.5px;height:233.8px;background:#eaeaea;"></div>
<div style="left:761.7624999999999px;top:169.4px;width:0.4px;height:1.2px;background:#aaa;"></div>
<div style="left:780.4749999999999px;top:170.8px;width:0.5px;height:233.8px;background:#eaeaea;"></div>
<div style="left:780.4749999999999px;top:169.4px;width:0.4px;height:1.2px;background:#aaa;"></div>
<div style="left:98.3px;top:156.4px;width:700px;height:1.6px;background:#8e8e8e;"></div>
<div style="left:187px;top:157.5px;font-size:11px;color:#333;line-height:12px;white-space:nowrap;font-family:'DejaVu Sans',sans-serif;line-height:13px;">&#119070;</div>
<div style="left:788.5px;top:159px;font-size:8px;color:#333;line-height:9px;white-space:nowrap;font-family:'DejaVu Sans',sans-serif;">&#9833;</div>
<div style="left:266.5px;top:170px;width:0.7px;height:234.60000000000002px;background:#5a5a5a;"></div>
<div style="left:790.6px;top:170.8px;width:7.7px;height:234px;background:#c0c0c0;"></div>
<div style="left:793.2px;top:263px;width:2.4px;height:57px;background:#555;border-radius:1px;"></div>
<div style="left:793.4px;top:387px;width:2px;height:2px;background:#333;border-radius:50%;"></div>
<div style="left:184.2px;top:404.6px;width:614px;height:8.6px;background:#bcbcbc;"></div>
<div style="left:98.3px;top:404.5px;width:86px;height:8.7px;background:#bcbcbc;"></div>
<div style="left:185px;top:405.5px;font-size:4.2px;color:#222;line-height:5.2px;white-space:nowrap;">&#9699; &#9740; &#9641;</div>
<div style="left:786px;top:405.3px;font-size:5px;color:#555;line-height:6px;white-space:nowrap;">&#9635;</div>
<div style="left:230px;top:408px;width:2px;height:2px;background:#777;border-radius:1px;"></div>
<div style="left:234px;top:408px;width:4px;height:2px;background:#777;border-radius:1px;"></div>
<div style="left:239px;top:408px;width:3px;height:2px;background:#777;border-radius:1px;"></div>
<div style="left:244px;top:408px;width:3px;height:2px;background:#777;border-radius:1px;"></div>
<div style="left:249px;top:408px;width:4px;height:2px;background:#777;border-radius:1px;"></div>
<div style="left:254px;top:408px;width:4px;height:2px;background:#777;border-radius:1px;"></div>
<div style="left:259px;top:408px;width:3px;height:2px;background:#777;border-radius:1px;"></div>
<div style="left:262px;top:408px;width:4px;height:2px;background:#a4a4a4;border-radius:1px;"></div>
<div style="left:267px;top:408px;width:2px;height:2px;background:#a4a4a4;border-radius:1px;"></div>
<div style="left:271px;top:408px;width:3px;height:2px;background:#a4a4a4;border-radius:1px;"></div>
<div style="left:276px;top:408px;width:4px;height:2px;background:#a4a4a4;border-radius:1px;"></div>
<div style="left:281.5px;top:408px;width:3px;height:2px;background:#a4a4a4;border-radius:1px;"></div>
<div style="left:286.5px;top:408px;width:2px;height:2px;background:#a4a4a4;border-radius:1px;"></div>
<div style="left:289.5px;top:408px;width:4px;height:2px;background:#a4a4a4;border-radius:1px;"></div>
<div style="left:294.5px;top:408px;width:4px;height:2px;background:#a4a4a4;border-radius:1px;"></div>
<div style="left:300px;top:408px;width:4px;height:2px;background:#a4a4a4;border-radius:1px;"></div>
<div style="left:305px;top:408px;width:4px;height:2px;background:#a4a4a4;border-radius:1px;"></div>
<div style="left:310px;top:408px;width:2px;height:2px;background:#a4a4a4;border-radius:1px;"></div>
<div style="left:314px;top:408px;width:2px;height:2px;background:#a4a4a4;border-radius:1px;"></div>
<div style="left:317.5px;top:408px;width:2px;height:2px;background:#a4a4a4;border-radius:1px;"></div>
<div style="left:321.0px;top:408px;width:3px;height:2px;background:#a4a4a4;border-radius:1px;"></div>
<div style="left:326.0px;top:408px;width:4px;height:2px;background:#a4a4a4;border-radius:1px;"></div>
<div style="left:336px;top:408px;width:4px;height:2px;background:#a4a4a4;border-radius:1px;"></div>
<div style="left:341.5px;top:408px;width:3px;height:2px;background:#a4a4a4;border-radius:1px;"></div>
<div style="left:352px;top:408px;width:4px;height:2px;background:#a4a4a4;border-radius:1px;"></div>
<div style="left:357.5px;top:408px;width:2px;height:2px;background:#a4a4a4;border-radius:1px;"></div>
<div style="left:361.0px;top:408px;width:2px;height:2px;background:#a4a4a4;border-radius:1px;"></div>
<div style="left:366px;top:408px;width:2px;height:2px;background:#a4a4a4;border-radius:1px;"></div>
<div style="left:369.5px;top:408px;width:2px;height:2px;background:#a4a4a4;border-radius:1px;"></div>
<div style="left:373.0px;top:408px;width:4px;height:2px;background:#a4a4a4;border-radius:1px;"></div>
<div style="left:378.5px;top:408px;width:4px;height:2px;background:#a4a4a4;border-radius:1px;"></div>
<div style="left:385px;top:408px;width:3px;height:2px;background:#a4a4a4;border-radius:1px;"></div>
<div style="left:390px;top:408px;width:3px;height:2px;background:#a4a4a4;border-radius:1px;"></div>
<div style="left:395px;top:408px;width:3px;height:2px;background:#a4a4a4;border-radius:1px;"></div>
<div style="left:400px;top:408px;width:4px;height:2px;background:#a4a4a4;border-radius:1px;"></div>
<div style="left:405.5px;top:408px;width:4px;height:2px;background:#a4a4a4;border-radius:1px;"></div>
<div style="left:410.5px;top:408px;width:3px;height:2px;background:#a4a4a4;border-radius:1px;"></div>
<div style="left:415.5px;top:408px;width:2px;height:2px;background:#a4a4a4;border-radius:1px;"></div>
<div style="left:419.0px;top:408px;width:4px;height:2px;background:#a4a4a4;border-radius:1px;"></div>
<div style="left:424px;top:408px;width:4px;height:2px;background:#a4a4a4;border-radius:1px;"></div>
<div style="left:429px;top:408px;width:4px;height:2px;background:#a4a4a4;border-radius:1px;"></div>
<div style="left:434.5px;top:408px;width:4px;height:2px;background:#a4a4a4;border-radius:1px;"></div>
<div style="left:440.5px;top:408px;width:4px;height:2px;background:#a4a4a4;border-radius:1px;"></div>
<div style="left:445.5px;top:408px;width:4px;height:2px;background:#a4a4a4;border-radius:1px;"></div>
<div style="left:451.5px;top:408px;width:2px;height:2px;background:#a4a4a4;border-radius:1px;"></div>
<div style="left:455.5px;top:408px;width:4px;height:2px;background:#a4a4a4;border-radius:1px;"></div>
<div style="left:461.0px;top:408px;width:3px;height:2px;background:#a4a4a4;border-radius:1px;"></div>
<div style="left:465.0px;top:408px;width:2px;height:2px;background:#a4a4a4;border-radius:1px;"></div>
<div style="left:468.5px;top:408px;width:4px;height:2px;background:#a4a4a4;border-radius:1px;"></div>
<div style="left:476px;top:408px;width:2px;height:2px;background:#a4a4a4;border-radius:1px;"></div>
<div style="left:479.5px;top:408px;width:2px;height:2px;background:#a4a4a4;border-radius:1px;"></div>
<div style="left:483.0px;top:408px;width:2px;height:2px;background:#a4a4a4;border-radius:1px;"></div>
<div style="left:486.0px;top:408px;width:3px;height:2px;background:#a4a4a4;border-radius:1px;"></div>
<div style="left:490.5px;top:408px;width:3px;height:2px;background:#a4a4a4;border-radius:1px;"></div>
<div style="left:494.5px;top:408px;width:2px;height:2px;background:#a4a4a4;border-radius:1px;"></div>
<div style="left:498.5px;top:408px;width:4px;height:2px;background:#a4a4a4;border-radius:1px;"></div>
<div style="left:503.5px;top:408px;width:3px;height:2px;background:#a4a4a4;border-radius:1px;"></div>
<div style="left:508.5px;top:408px;width:4px;height:2px;background:#a4a4a4;border-radius:1px;"></div>
<div style="left:514.0px;top:408px;width:4px;height:2px;background:#a4a4a4;border-radius:1px;"></div>
<div style="left:519.5px;top:408px;width:4px;height:2px;background:#a4a4a4;border-radius:1px;"></div>
<div style="left:524.5px;top:408px;width:2px;height:2px;background:#a4a4a4;border-radius:1px;"></div>
<div style="left:572px;top:408px;width:2px;height:2px;background:#a4a4a4;border-radius:1px;"></div>
<div style="left:575px;top:408px;width:2px;height:2px;background:#a4a4a4;border-radius:1px;"></div>
<div style="left:579px;top:408px;width:4px;height:2px;background:#a4a4a4;border-radius:1px;"></div>
<div style="left:584px;top:408px;width:2px;height:2px;background:#a4a4a4;border-radius:1px;"></div>
<div style="left:587.5px;top:408px;width:3px;height:2px;background:#a4a4a4;border-radius:1px;"></div>
<div style="left:594px;top:408px;width:3px;height:2px;background:#a4a4a4;border-radius:1px;"></div>
<div style="left:598px;top:408px;width:4px;height:2px;background:#a4a4a4;border-radius:1px;"></div>
<div style="left:603px;top:408px;width:3px;height:2px;background:#a4a4a4;border-radius:1px;"></div>
<div style="left:607.5px;top:408px;width:3px;height:2px;background:#a4a4a4;border-radius:1px;"></div>
<div style="left:611.5px;top:408px;width:3px;height:2px;background:#a4a4a4;border-radius:1px;"></div>
<div style="left:616.0px;top:408px;width:3px;height:2px;background:#a4a4a4;border-radius:1px;"></div>
<div style="left:621.0px;top:408px;width:3px;height:2px;background:#a4a4a4;border-radius:1px;"></div>
<div style="left:626.0px;top:408px;width:4px;height:2px;background:#a4a4a4;border-radius:1px;"></div>
<div style="left:632.0px;top:408px;width:4px;height:2px;background:#a4a4a4;border-radius:1px;"></div>
<div style="left:637.0px;top:408px;width:4px;height:2px;background:#a4a4a4;border-radius:1px;"></div>
<div style="left:643.0px;top:408px;width:3px;height:2px;background:#a4a4a4;border-radius:1px;"></div>
<div style="left:647.5px;top:408px;width:4px;height:2px;background:#a4a4a4;border-radius:1px;"></div>
<div style="left:653.5px;top:408px;width:4px;height:2px;background:#a4a4a4;border-radius:1px;"></div>
<div style="left:658.5px;top:408px;width:3px;height:2px;background:#a4a4a4;border-radius:1px;"></div>
<div style="left:663.0px;top:408px;width:3px;height:2px;background:#a4a4a4;border-radius:1px;"></div>
<div style="left:668.0px;top:408px;width:3px;height:2px;background:#a4a4a4;border-radius:1px;"></div>
<div style="left:673.0px;top:408px;width:3px;height:2px;background:#a4a4a4;border-radius:1px;"></div>
<div style="left:677.0px;top:408px;width:3px;height:2px;background:#a4a4a4;border-radius:1px;"></div>
<div style="left:682.0px;top:408px;width:3px;height:2px;background:#a4a4a4;border-radius:1px;"></div>
<div style="left:686.0px;top:408px;width:3px;height:2px;background:#a4a4a4;border-radius:1px;"></div>
<div style="left:691.0px;top:408px;width:4px;height:2px;background:#a4a4a4;border-radius:1px;"></div>
<div style="left:697.0px;top:408px;width:2px;height:2px;background:#a4a4a4;border-radius:1px;"></div>
<div style="left:704px;top:408px;width:4px;height:2px;background:#a4a4a4;border-radius:1px;"></div>
<div style="left:710px;top:408px;width:3px;height:2px;background:#a4a4a4;border-radius:1px;"></div>
<div style="left:714.5px;top:408px;width:3px;height:2px;background:#a4a4a4;border-radius:1px;"></div>
<div style="left:719.5px;top:408px;width:3px;height:2px;background:#a4a4a4;border-radius:1px;"></div>
<div style="left:728px;top:408px;width:4px;height:2px;background:#a4a4a4;border-radius:1px;"></div>
<div style="left:733.5px;top:408px;width:4px;height:2px;background:#a4a4a4;border-radius:1px;"></div>
<div style="left:739.0px;top:408px;width:2px;height:2px;background:#a4a4a4;border-radius:1px;"></div>
<div style="left:743.0px;top:408px;width:2px;height:2px;background:#a4a4a4;border-radius:1px;"></div>
<div style="left:747.0px;top:408px;width:2px;height:2px;background:#a4a4a4;border-radius:1px;"></div>
<div style="left:224px;top:407.5px;width:5px;height:3px;background:#a4a4a4;border-radius:1px;"></div>
<svg width="800" height="425" viewBox="0 0 800 425"><defs><linearGradient id="ng" x1="0" y1="0" x2="0" y2="1"><stop offset="0" stop-color="#e8504a"/><stop offset="0.22" stop-color="#f59340"/><stop offset="0.5" stop-color="#fff2a8"/><stop offset="0.78" stop-color="#f59340"/><stop offset="1" stop-color="#e8504a"/></linearGradient><linearGradient id="sg" x1="0" y1="0" x2="1" y2="1"><stop offset="0" stop-color="#e0407a"/><stop offset="0.5" stop-color="#d83060"/><stop offset="1" stop-color="#c02848"/></linearGradient><filter id="bl" x="-20%" y="-20%" width="140%" height="140%"><feGaussianBlur stdDeviation="0.35"/></filter><filter id="bl2" x="-20%" y="-20%" width="140%" height="140%"><feGaussianBlur stdDeviation="1"/></filter></defs><path d="M200.5 266.1L234 266.40000000000003L234 266.8L200.5 267.1Z" fill="#f8b060" stroke="#e0604a" stroke-width="0.5"/><ellipse cx="223.7" cy="266.6" rx="3" ry="0.9" fill="#fbc070" stroke="#e0604a" stroke-width="0.4"/><path d="M234.3 250V274" stroke="#aaa" stroke-width="0.4"/><path d="M234.8 256.9L235.9 256.0L237.0 255.4L238.1 254.7L239.2 254.4L240.4 254.3L241.5 254.1L242.6 253.9L243.7 253.7L244.8 253.8L245.9 253.9L247.0 253.8L248.1 253.9L249.2 253.9L250.4 253.8L251.5 253.8L252.6 253.8L253.7 253.8L254.8 253.7L255.9 253.7L257.0 253.9L258.1 254.0L259.2 253.9L260.4 253.9L261.5 253.9L262.6 254.2L263.7 254.0L264.8 254.1L265.9 254.7L267.0 254.8L268.1 255.3L269.2 256.0L270.4 257.1L271.5 258.0L272.6 259.0L273.7 260.3L274.8 261.7L274.8 263.3L273.7 264.4L272.6 265.6L271.5 266.8L270.4 267.7L269.2 268.8L268.1 269.5L267.0 269.9L265.9 270.3L264.8 270.6L263.7 270.7L262.6 270.6L261.5 270.9L260.4 270.8L259.2 270.8L258.1 270.8L257.0 270.9L255.9 271.0L254.8 271.1L253.7 270.9L252.6 271.0L251.5 271.0L250.4 271.1L249.2 271.0L248.1 270.9L247.0 270.9L245.9 270.9L244.8 271.0L243.7 271.1L242.6 270.7L241.5 270.9L240.4 270.5L239.2 270.5L238.1 270.2L237.0 269.5L235.9 268.7L234.8 267.9Z" fill="#c83078" stroke="#b82870" stroke-width="0.6" stroke-linejoin="round"/><path d="M236.0 258.5L237.0 257.8L238.1 257.3L239.1 256.9L240.2 256.6L241.2 256.6L242.3 256.4L243.3 256.3L244.4 256.2L245.4 256.2L246.4 256.3L247.5 256.2L248.5 256.3L249.6 256.3L250.6 256.2L251.7 256.2L252.7 256.2L253.8 256.2L254.8 256.1L255.8 256.2L256.9 256.3L257.9 256.3L259.0 256.2L260.0 256.3L261.1 256.3L262.1 256.5L263.2 256.4L264.2 256.4L265.2 256.8L266.3 256.9L267.3 257.3L268.4 257.8L269.4 258.6L270.5 259.2L271.5 260.0L272.6 260.9L273.6 261.9L273.6 263.0L272.6 263.9L271.5 264.7L270.5 265.5L269.4 266.2L268.4 267.0L267.3 267.5L266.3 267.8L265.2 268.1L264.2 268.3L263.2 268.3L262.1 268.3L261.1 268.5L260.0 268.4L259.0 268.5L257.9 268.4L256.9 268.5L255.8 268.6L254.8 268.7L253.8 268.5L252.7 268.6L251.7 268.6L250.6 268.7L249.6 268.6L248.5 268.5L247.5 268.5L246.4 268.5L245.4 268.6L244.4 268.6L243.3 268.4L242.3 268.5L241.2 268.3L240.2 268.2L239.1 268.0L238.1 267.5L237.0 266.9L236.0 266.4Z" fill="#dc3c58" filter="url(#bl2)"/><path d="M237.3 260.2L238.3 259.8L239.2 259.6L240.2 259.3L241.2 259.2L242.2 259.2L243.1 259.1L244.1 259.0L245.1 258.9L246.1 258.9L247.0 259.0L248.0 259.0L249.0 259.0L249.9 259.0L250.9 259.0L251.9 259.0L252.9 259.0L253.8 259.0L254.8 258.9L255.8 258.9L256.7 259.0L257.7 259.0L258.7 259.0L259.7 259.0L260.6 259.0L261.6 259.1L262.6 259.0L263.6 259.1L264.5 259.3L265.5 259.4L266.5 259.6L267.4 259.8L268.4 260.3L269.4 260.6L270.4 261.1L271.3 261.6L272.3 262.1L272.3 262.7L271.3 263.2L270.4 263.7L269.4 264.1L268.4 264.5L267.4 265.0L266.5 265.3L265.5 265.4L264.5 265.6L263.6 265.7L262.6 265.7L261.6 265.7L260.6 265.8L259.7 265.8L258.7 265.8L257.7 265.7L256.7 265.8L255.8 265.9L254.8 265.9L253.8 265.8L252.9 265.9L251.9 265.9L250.9 265.9L249.9 265.8L249.0 265.8L248.0 265.8L247.0 265.8L246.1 265.9L245.1 265.9L244.1 265.7L243.1 265.8L242.2 265.7L241.2 265.6L240.2 265.5L239.2 265.2L238.3 264.9L237.3 264.6Z" fill="#e6504c" filter="url(#bl2)"/><path d="M237.5 261.5L239.0 260.5L240.5 261.0L242.0 260.0L244.0 262.0L246.0 265.5L248.5 268.0L251.0 269.0L253.0 267.5L255.5 265.0L258.0 264.0L261.0 262.0L264.0 259.0L266.5 256.0L268.5 253.5" fill="none" stroke="#b02440" stroke-width="0.6499999999999999" stroke-linejoin="round" stroke-linecap="round"/><path d="M268.5 253.5L269.6 250.6L270.3 252.6L271.0 249.6L271.7 252.8L272.2 250.0L272.8 253.5" fill="none" stroke="#e0584a" stroke-width="0.7" stroke-linejoin="round" stroke-linecap="round"/><path d="M274.6 250V338" stroke="#aaa" stroke-width="0.4"/><path d="M274.8 303.6L275.9 301.6L277.1 300.9L278.2 300.4L279.3 302.2L280.4 303.3L281.6 303.2L282.7 303.2L283.8 301.7L285.0 300.0L286.1 300.3L287.2 300.8L288.3 301.7L289.5 302.5L290.6 302.4L291.7 302.0L292.8 301.6L294.0 300.0L295.1 300.8L296.2 300.4L297.4 301.3L298.5 300.4L299.6 300.7L300.7 301.3L301.9 302.0L303.0 303.9L303.0 310.8L301.9 312.6L300.7 313.8L299.6 312.9L298.5 313.3L297.4 313.6L296.2 313.9L295.1 313.1L294.0 313.8L292.8 312.3L291.7 312.3L290.6 311.0L289.5 311.6L288.3 312.7L287.2 313.8L286.1 313.4L285.0 313.4L283.8 312.4L282.7 311.9L281.6 310.5L280.4 310.9L279.3 312.5L278.2 313.4L277.1 313.2L275.9 312.7L274.8 311.0Z" fill="#d93049" stroke="#d42e48" stroke-width="0.6" stroke-linejoin="round"/><path d="M275.4 304.4L276.5 302.9L277.6 302.4L278.6 302.0L279.7 303.4L280.8 304.2L281.9 304.1L283.0 304.1L284.0 302.9L285.1 301.7L286.2 301.9L287.3 302.3L288.4 303.0L289.4 303.6L290.5 303.5L291.6 303.2L292.7 302.9L293.8 301.7L294.8 302.3L295.9 302.0L297.0 302.7L298.1 302.0L299.2 302.2L300.2 302.7L301.3 303.2L302.4 304.6L302.4 309.9L301.3 311.3L300.2 312.2L299.2 311.5L298.1 311.8L297.0 312.0L295.9 312.2L294.8 311.7L293.8 312.2L292.7 311.1L291.6 311.1L290.5 310.1L289.4 310.5L288.4 311.3L287.3 312.2L286.2 311.9L285.1 311.9L284.0 311.1L283.0 310.7L281.9 309.7L280.8 309.9L279.7 311.1L278.6 311.9L277.6 311.7L276.5 311.3L275.4 310.1Z" fill="#f0863c" filter="url(#bl)"/><path d="M275.7 305.0L276.8 303.9L277.8 303.5L278.9 303.2L279.9 304.2L281.0 304.9L282.0 304.8L283.1 304.8L284.1 303.9L285.2 303.0L286.3 303.1L287.3 303.4L288.4 303.9L289.4 304.4L290.5 304.3L291.5 304.1L292.6 303.9L293.7 303.0L294.7 303.4L295.8 303.2L296.8 303.7L297.9 303.2L298.9 303.4L300.0 303.7L301.0 304.1L302.1 305.2L302.1 309.2L301.0 310.2L300.0 311.0L298.9 310.4L297.9 310.7L296.8 310.8L295.8 311.0L294.7 310.6L293.7 311.0L292.6 310.1L291.5 310.1L290.5 309.3L289.4 309.7L288.4 310.3L287.3 311.0L286.3 310.7L285.2 310.7L284.1 310.1L283.1 309.8L282.0 309.0L281.0 309.2L279.9 310.2L278.9 310.7L277.8 310.6L276.8 310.3L275.7 309.3Z" fill="#fbc862" filter="url(#bl)"/><path d="M276.0 305.6L277.0 304.9L278.1 304.6L279.1 304.4L280.1 305.1L281.2 305.5L282.2 305.5L283.2 305.5L284.3 304.9L285.3 304.2L286.3 304.3L287.4 304.5L288.4 304.9L289.4 305.2L290.4 305.2L291.5 305.0L292.5 304.8L293.5 304.2L294.6 304.5L295.6 304.4L296.6 304.7L297.7 304.3L298.7 304.5L299.7 304.7L300.8 305.0L301.8 305.8L301.8 308.5L300.8 309.2L299.7 309.7L298.7 309.4L297.7 309.5L296.6 309.6L295.6 309.7L294.6 309.4L293.5 309.7L292.5 309.1L291.5 309.1L290.4 308.6L289.4 308.8L288.4 309.3L287.4 309.7L286.3 309.6L285.3 309.6L284.3 309.2L283.2 309.0L282.2 308.4L281.2 308.5L280.1 309.2L279.1 309.6L278.1 309.5L277.0 309.3L276.0 308.6Z" fill="#fff2b0" filter="url(#bl)"/><path d="M277.0 294.0L277.6 300.0L278.5 309.0L280.0 313.0L281.5 316.0" fill="none" stroke="#e0584a" stroke-width="0.85" stroke-linejoin="round" stroke-linecap="round"/><path d="M277.0 294.0L277.6 300.0L278.5 309.0L280.0 313.0L281.5 316.0" fill="none" stroke="#f8b070" stroke-width="0.26" stroke-linejoin="round" stroke-linecap="round"/><path d="M283.0 300.0L284.0 312.0L285.0 316.0" fill="none" stroke="#e0584a" stroke-width="0.75" stroke-linejoin="round" stroke-linecap="round"/><path d="M292.5 309.0C292.8 310.6 293.5 320.0 294.1 318.5C294.7 317.0 295.5 306.1 296.2 300.0C296.9 293.9 297.9 282.8 298.5 281.8C299.1 280.8 299.6 290.0 300.0 294.0C300.4 298.0 300.7 306.3 301.2 305.6C301.7 304.9 302.2 295.0 302.8 290.0C303.4 285.0 304.4 278.0 304.7 275.6" fill="none" stroke="#e0584a" stroke-width="1" stroke-linecap="round"/><path d="M292.5 309.0C292.8 310.6 293.5 320.0 294.1 318.5C294.7 317.0 295.5 306.1 296.2 300.0C296.9 293.9 297.9 282.8 298.5 281.8C299.1 280.8 299.6 290.0 300.0 294.0C300.4 298.0 300.7 306.3 301.2 305.6C301.7 304.9 302.2 295.0 302.8 290.0C303.4 285.0 304.4 278.0 304.7 275.6" fill="none" stroke="#f8b070" stroke-width="0.35" stroke-linecap="round"/><path d="M305.5 284.0C305.6 287.2 306.1 297.5 306.4 303.0C306.7 308.5 307.0 318.2 307.3 317.0C307.6 315.8 307.9 303.7 308.2 296.0C308.5 288.3 308.8 272.0 309.2 271.0C309.6 270.0 309.9 282.2 310.3 290.0C310.7 297.8 311.1 311.3 311.4 318.0C311.7 324.7 312.0 327.4 312.2 330.0C312.4 332.6 312.6 333.0 312.7 333.6" fill="none" stroke="#e0584a" stroke-width="1" stroke-linecap="round"/><path d="M305.5 284.0C305.6 287.2 306.1 297.5 306.4 303.0C306.7 308.5 307.0 318.2 307.3 317.0C307.6 315.8 307.9 303.7 308.2 296.0C308.5 288.3 308.8 272.0 309.2 271.0C309.6 270.0 309.9 282.2 310.3 290.0C310.7 297.8 311.1 311.3 311.4 318.0C311.7 324.7 312.0 327.4 312.2 330.0C312.4 332.6 312.6 333.0 312.7 333.6" fill="none" stroke="#f8b070" stroke-width="0.35" stroke-linecap="round"/><circle cx="312.8" cy="333.6" r="0.8" fill="#dc5a4a"/><path d="M303.5 270V290" stroke="#aaa" stroke-width="0.4"/><path d="M313.2 268V288" stroke="#aaa" stroke-width="0.4"/><path d="M303.5 276.7L304.5 274.4L305.5 273.7L306.5 273.9L307.5 275.2L308.5 277.1L308.5 281.5L307.5 283.6L306.5 285.3L305.5 285.4L304.5 284.9L303.5 282.2Z" fill="#d93049" stroke="#d42e48" stroke-width="0.6" stroke-linejoin="round"/><path d="M304.1 277.3L304.9 275.6L305.6 275.1L306.4 275.2L307.1 276.2L307.9 277.7L307.9 281.0L307.1 282.6L306.4 283.9L305.6 284.0L304.9 283.6L304.1 281.5Z" fill="#f0863c" filter="url(#bl)"/><path d="M304.4 277.8L305.0 276.6L305.7 276.1L306.3 276.2L307.0 277.0L307.6 278.1L307.6 280.7L307.0 281.9L306.3 282.9L305.7 282.9L305.0 282.6L304.4 281.0Z" fill="#fbc862" filter="url(#bl)"/><path d="M304.7 278.4L305.2 277.5L305.7 277.2L306.3 277.2L306.8 277.8L307.3 278.5L307.3 280.3L306.8 281.1L306.3 281.8L305.7 281.9L305.2 281.7L304.7 280.6Z" fill="#fff2b0" filter="url(#bl)"/><path d="M308.5 277.1L309.8 276.7L311.0 277.2L312.2 277.9L313.5 278.7L313.5 279.8L312.2 280.4L311.0 281.3L309.8 281.7L308.5 281.3Z" fill="#d93049" stroke="#d42e48" stroke-width="0.6" stroke-linejoin="round"/><path d="M309.1 277.6L310.1 277.3L311.0 277.7L311.9 278.2L312.9 278.8L312.9 279.6L311.9 280.1L311.0 280.8L310.1 281.1L309.1 280.8Z" fill="#f0863c" filter="url(#bl)"/><path d="M309.4 278.0L310.2 277.7L311.0 278.0L311.8 278.5L312.6 278.9L312.6 279.5L311.8 279.9L311.0 280.4L310.2 280.6L309.4 280.4Z" fill="#fbc862" filter="url(#bl)"/><path d="M309.7 278.4L310.4 278.2L311.0 278.4L311.6 278.7L312.3 279.0L312.3 279.4L311.6 279.7L311.0 280.0L310.4 280.2L309.7 280.0Z" fill="#fff2b0" filter="url(#bl)"/><path d="M313 278.6L377 278.90000000000003L377 279.3L313 279.6Z" fill="#f8b060" stroke="#e0604a" stroke-width="0.5"/><ellipse cx="368" cy="279.1" rx="4" ry="0.9" fill="#fbc070" stroke="#e0604a" stroke-width="0.4"/><path d="M377 268V292" stroke="#aaa" stroke-width="0.4"/><path d="M377 327V337" stroke="#aaa" stroke-width="0.4"/><path d="M377.0 332.0L378.2 331.7L379.5 331.8L380.8 332.4L382.0 332.9L382.0 333.5L380.8 334.1L379.5 334.6L378.2 334.6L377.0 334.3Z" fill="#d93049" stroke="#d42e48" stroke-width="0.6" stroke-linejoin="round"/><path d="M377.6 332.3L378.6 332.1L379.5 332.2L380.4 332.6L381.4 333.0L381.4 333.4L380.4 333.8L379.5 334.2L378.6 334.3L377.6 334.1Z" fill="#f0863c" filter="url(#bl)"/><path d="M377.9 332.5L378.7 332.4L379.5 332.4L380.3 332.8L381.1 333.0L381.1 333.4L380.3 333.7L379.5 334.0L378.7 334.0L377.9 333.9Z" fill="#fbc862" filter="url(#bl)"/><path d="M378.2 332.7L378.9 332.6L379.5 332.7L380.1 332.9L380.8 333.1L380.8 333.3L380.1 333.5L379.5 333.7L378.9 333.8L378.2 333.7Z" fill="#fff2b0" filter="url(#bl)"/><path d="M382.6 247V282" stroke="#aaa" stroke-width="0.4"/><path d="M382.8 282.0L383.2 270.0L383.8 262.0L385.0 256.0L387.0 254.0L390.0 255.0L392.0 256.0L394.0 255.0" fill="none" stroke="#e0584a" stroke-width="0.85" stroke-linejoin="round" stroke-linecap="round"/><path d="M382.8 282.0L383.2 270.0L383.8 262.0L385.0 256.0L387.0 254.0L390.0 255.0L392.0 256.0L394.0 255.0" fill="none" stroke="#f8b070" stroke-width="0.26" stroke-linejoin="round" stroke-linecap="round"/><path d="M382.6 251.0L383.8 249.6L385.0 250.9L386.2 251.1L387.4 250.5L388.6 250.4L389.7 250.5L390.9 250.9L392.1 250.5L393.3 250.1L394.5 251.2L394.5 260.7L393.3 262.1L392.1 261.5L390.9 261.2L389.7 261.6L388.6 261.6L387.4 261.6L386.2 261.1L385.0 261.5L383.8 262.6L382.6 261.3Z" fill="#d93049" stroke="#d42e48" stroke-width="0.6" stroke-linejoin="round"/><path d="M383.2 252.2L384.3 251.1L385.3 252.1L386.4 252.3L387.5 251.8L388.6 251.7L389.6 251.8L390.7 252.1L391.8 251.8L392.8 251.5L393.9 252.3L393.9 259.6L392.8 260.6L391.8 260.2L390.7 260.0L389.6 260.2L388.6 260.3L387.5 260.2L386.4 259.9L385.3 260.2L384.3 261.0L383.2 260.1Z" fill="#f0863c" filter="url(#bl)"/><path d="M383.5 253.1L384.5 252.3L385.5 253.0L386.5 253.2L387.5 252.8L388.6 252.7L389.6 252.8L390.6 253.1L391.6 252.8L392.6 252.6L393.6 253.2L393.6 258.7L392.6 259.5L391.6 259.2L390.6 259.0L389.6 259.2L388.6 259.2L387.5 259.2L386.5 259.0L385.5 259.2L384.5 259.8L383.5 259.1Z" fill="#fbc862" filter="url(#bl)"/><path d="M383.8 254.0L384.8 253.4L385.7 253.9L386.7 254.1L387.6 253.8L388.6 253.8L389.5 253.8L390.4 254.0L391.4 253.8L392.4 253.6L393.3 254.1L393.3 257.9L392.4 258.4L391.4 258.2L390.4 258.1L389.5 258.2L388.6 258.2L387.6 258.2L386.7 258.0L385.7 258.2L384.8 258.6L383.8 258.1Z" fill="#fff2b0" filter="url(#bl)"/><path d="M394.6 222V257" stroke="#aaa" stroke-width="0.4"/><path d="M394.6 226.8L395.8 224.7L397.0 225.1L398.2 225.5L399.4 227.0L400.6 228.2L401.8 229.7L403.0 231.1L403.0 232.4L401.8 233.6L400.6 234.7L399.4 235.8L398.2 237.4L397.0 238.4L395.8 238.3L394.6 236.1Z" fill="#d93049" stroke="#d42e48" stroke-width="0.6" stroke-linejoin="round"/><path d="M395.2 227.9L396.2 226.3L397.3 226.6L398.3 226.9L399.3 228.0L400.3 229.0L401.4 230.1L402.4 231.2L402.4 232.2L401.4 233.1L400.3 233.9L399.3 234.7L398.3 236.0L397.3 236.7L396.2 236.7L395.2 235.0Z" fill="#f0863c" filter="url(#bl)"/><path d="M395.5 228.7L396.4 227.5L397.4 227.8L398.3 228.0L399.3 228.9L400.2 229.6L401.2 230.5L402.1 231.3L402.1 232.0L401.2 232.7L400.2 233.4L399.3 234.0L398.3 234.9L397.4 235.5L396.4 235.5L395.5 234.1Z" fill="#fbc862" filter="url(#bl)"/><path d="M395.8 229.6L396.7 228.8L397.5 228.9L398.4 229.1L399.2 229.7L400.1 230.2L400.9 230.8L401.8 231.3L401.8 231.9L400.9 232.3L400.1 232.8L399.2 233.2L398.4 233.9L397.5 234.3L396.7 234.2L395.8 233.3Z" fill="#fff2b0" filter="url(#bl)"/><path d="M395.0 245.0L395.5 238.0L396.5 233.0L398.5 231.5L401.0 230.5L403.0 226.0" fill="none" stroke="#e0584a" stroke-width="0.85" stroke-linejoin="round" stroke-linecap="round"/><path d="M395.0 245.0L395.5 238.0L396.5 233.0L398.5 231.5L401.0 230.5L403.0 226.0" fill="none" stroke="#f8b070" stroke-width="0.26" stroke-linejoin="round" stroke-linecap="round"/><path d="M403.3 214V240" stroke="#aaa" stroke-width="0.4"/><path d="M403.5 216.8L404.6 213.6L405.8 213.1L406.9 214.3L408.0 214.3L409.1 213.7L410.3 213.6L411.4 214.0L412.5 213.4L413.7 213.6L414.8 216.3L414.8 225.9L413.7 228.7L412.5 229.1L411.4 227.8L410.3 228.4L409.1 228.7L408.0 227.5L406.9 227.9L405.8 228.7L404.6 228.1L403.5 225.7Z" fill="#d93049" stroke="#d42e48" stroke-width="0.6" stroke-linejoin="round"/><path d="M404.1 217.8L405.1 215.4L406.1 215.0L407.1 215.9L408.1 215.9L409.1 215.4L410.2 215.4L411.2 215.7L412.2 215.2L413.2 215.4L414.2 217.4L414.2 224.7L413.2 226.8L412.2 227.1L411.2 226.2L410.2 226.6L409.1 226.8L408.1 225.9L407.1 226.3L406.1 226.9L405.1 226.4L404.1 224.6Z" fill="#f0863c" filter="url(#bl)"/><path d="M404.4 218.5L405.3 216.7L406.3 216.4L407.2 217.1L408.2 217.1L409.1 216.8L410.1 216.7L411.1 216.9L412.0 216.6L413.0 216.7L413.9 218.3L413.9 223.8L413.0 225.4L412.0 225.7L411.1 224.9L410.1 225.3L409.1 225.4L408.2 224.7L407.2 225.0L406.3 225.5L405.3 225.1L404.4 223.7Z" fill="#fbc862" filter="url(#bl)"/><path d="M404.7 219.3L405.6 218.1L406.5 217.8L407.4 218.3L408.3 218.3L409.1 218.1L410.0 218.0L410.9 218.2L411.8 217.9L412.7 218.1L413.6 219.1L413.6 223.0L412.7 224.1L411.8 224.2L410.9 223.7L410.0 224.0L409.1 224.1L408.3 223.6L407.4 223.8L406.5 224.1L405.6 223.9L404.7 222.9Z" fill="#fff2b0" filter="url(#bl)"/><path d="M404.5 222.0L406.5 216.0L408.5 226.0L410.5 215.0L412.5 226.0L414.5 216.0" fill="none" stroke="#e0584a" stroke-width="0.85" stroke-linejoin="round" stroke-linecap="round"/><path d="M404.5 222.0L406.5 216.0L408.5 226.0L410.5 215.0L412.5 226.0L414.5 216.0" fill="none" stroke="#f8b070" stroke-width="0.26" stroke-linejoin="round" stroke-linecap="round"/><path d="M414.8 199.1L416.0 196.7L417.2 196.1L418.3 196.6L419.5 196.2L420.7 196.3L421.9 196.5L423.1 196.3L424.2 196.7L425.4 197.5L426.6 200.1L426.6 208.9L425.4 211.0L424.2 212.0L423.1 212.1L421.9 212.1L420.7 212.5L419.5 212.4L418.3 212.3L417.2 212.3L416.0 211.5L414.8 209.5Z" fill="#d93049" stroke="#d42e48" stroke-width="0.6" stroke-linejoin="round"/><path d="M415.4 200.4L416.5 198.5L417.5 198.1L418.6 198.4L419.6 198.2L420.7 198.2L421.8 198.3L422.8 198.2L423.9 198.6L424.9 199.2L426.0 201.1L426.0 207.8L424.9 209.4L423.9 210.2L422.8 210.3L421.8 210.2L420.7 210.5L419.6 210.4L418.6 210.4L417.5 210.4L416.5 209.8L415.4 208.3Z" fill="#f0863c" filter="url(#bl)"/><path d="M415.7 201.3L416.7 199.9L417.7 199.6L418.7 199.8L419.7 199.6L420.7 199.6L421.7 199.8L422.7 199.7L423.7 199.9L424.7 200.4L425.7 201.9L425.7 207.0L424.7 208.2L423.7 208.8L422.7 208.8L421.7 208.8L420.7 209.1L419.7 209.0L418.7 208.9L417.7 208.9L416.7 208.5L415.7 207.3Z" fill="#fbc862" filter="url(#bl)"/><path d="M416.0 202.2L416.9 201.3L417.9 201.0L418.8 201.2L419.8 201.1L420.7 201.1L421.6 201.2L422.6 201.1L423.5 201.3L424.5 201.6L425.4 202.6L425.4 206.1L424.5 207.0L423.5 207.4L422.6 207.4L421.6 207.4L420.7 207.6L419.8 207.5L418.8 207.5L417.9 207.5L416.9 207.2L416.0 206.4Z" fill="#fff2b0" filter="url(#bl)"/><path d="M415.5 206.0L418.0 207.0L420.0 205.5L423.0 206.5L426.0 205.0" fill="none" stroke="#c8443a" stroke-width="0.85" stroke-linejoin="round" stroke-linecap="round"/><path d="M426.7 186V222" stroke="#aaa" stroke-width="0.4"/><path d="M427.2 212.0L427.8 200.0L428.8 184.8L429.6 198.0L430.2 220.0" fill="none" stroke="#e0584a" stroke-width="0.9" stroke-linejoin="round" stroke-linecap="round"/><path d="M427.2 212.0L427.8 200.0L428.8 184.8L429.6 198.0L430.2 220.0" fill="none" stroke="#f8b070" stroke-width="0.27" stroke-linejoin="round" stroke-linecap="round"/><path d="M427.4 200.6L428.5 197.9L429.6 196.4L430.7 196.7L431.9 197.2L433.0 197.5L434.1 197.5L435.2 197.9L436.3 199.6L437.4 201.5L438.5 202.9L439.7 202.7L440.8 202.0L441.9 202.7L443.0 204.3L443.0 205.1L441.9 206.3L440.8 206.9L439.7 206.6L438.5 206.3L437.4 207.6L436.3 209.5L435.2 210.9L434.1 211.4L433.0 211.8L431.9 212.3L430.7 212.4L429.6 212.3L428.5 211.3L427.4 208.3Z" fill="#d93049" stroke="#d42e48" stroke-width="0.6" stroke-linejoin="round"/><path d="M428.0 201.6L429.0 199.5L430.1 198.3L431.1 198.6L432.1 198.9L433.1 199.2L434.2 199.2L435.2 199.5L436.2 200.8L437.3 202.3L438.3 203.3L439.3 203.1L440.3 202.7L441.4 203.2L442.4 204.4L442.4 205.0L441.4 205.9L440.3 206.3L439.3 206.1L438.3 205.9L437.3 206.9L436.2 208.4L435.2 209.4L434.2 209.8L433.1 210.1L432.1 210.5L431.1 210.5L430.1 210.5L429.0 209.7L428.0 207.4Z" fill="#f0863c" filter="url(#bl)"/><path d="M428.3 202.3L429.3 200.7L430.3 199.8L431.3 200.0L432.2 200.3L433.2 200.5L434.2 200.5L435.2 200.7L436.2 201.7L437.2 202.8L438.2 203.6L439.1 203.5L440.1 203.1L441.1 203.5L442.1 204.4L442.1 204.9L441.1 205.6L440.1 205.9L439.1 205.8L438.2 205.6L437.2 206.3L436.2 207.5L435.2 208.3L434.2 208.6L433.2 208.8L432.2 209.1L431.3 209.1L430.3 209.1L429.3 208.5L428.3 206.7Z" fill="#fbc862" filter="url(#bl)"/><path d="M428.6 203.0L429.5 201.9L430.5 201.3L431.4 201.4L432.4 201.6L433.3 201.7L434.3 201.8L435.2 201.9L436.1 202.6L437.1 203.4L438.0 203.9L439.0 203.8L439.9 203.6L440.9 203.9L441.8 204.5L441.8 204.8L440.9 205.3L439.9 205.5L439.0 205.4L438.0 205.3L437.1 205.8L436.1 206.6L435.2 207.1L434.3 207.3L433.3 207.5L432.4 207.7L431.4 207.7L430.5 207.7L429.5 207.3L428.6 206.1Z" fill="#fff2b0" filter="url(#bl)"/><path d="M431.0 205.0L433.0 203.0L435.0 207.0L437.0 204.0L440.0 206.0L442.5 205.0" fill="none" stroke="#c8443a" stroke-width="0.85" stroke-linejoin="round" stroke-linecap="round"/><path d="M442.6 195V228" stroke="#aaa" stroke-width="0.4"/><path d="M442.9 212.5L444.0 210.8L445.2 209.8L446.3 210.4L447.4 211.5L448.6 211.9L449.7 212.1L450.8 212.3L451.9 210.9L453.1 210.5L454.2 209.6L455.3 209.4L456.5 209.9L457.6 210.0L458.7 210.2L459.9 211.6L461.0 212.9L461.0 220.7L459.9 222.6L458.7 223.4L457.6 223.7L456.5 223.3L455.3 223.7L454.2 223.9L453.1 223.3L451.9 223.0L450.8 221.6L449.7 221.3L448.6 221.0L447.4 222.5L446.3 223.3L445.2 223.6L444.0 222.8L442.9 220.6Z" fill="#d93049" stroke="#d42e48" stroke-width="0.6" stroke-linejoin="round"/><path d="M443.5 213.5L444.6 212.3L445.6 211.5L446.7 211.9L447.7 212.8L448.8 213.1L449.8 213.2L450.9 213.4L451.9 212.3L453.0 212.0L454.1 211.3L455.1 211.2L456.2 211.5L457.2 211.7L458.3 211.8L459.3 212.8L460.4 213.8L460.4 219.8L459.3 221.2L458.3 221.9L457.2 222.0L456.2 221.8L455.1 222.1L454.1 222.2L453.0 221.7L451.9 221.5L450.9 220.4L449.8 220.2L448.8 220.0L447.7 221.1L446.7 221.8L445.6 222.0L444.6 221.4L443.5 219.7Z" fill="#f0863c" filter="url(#bl)"/><path d="M443.8 214.3L444.8 213.3L445.8 212.8L446.9 213.1L447.9 213.7L448.9 213.9L449.9 214.1L450.9 214.2L451.9 213.4L453.0 213.1L454.0 212.6L455.0 212.5L456.0 212.8L457.0 212.9L458.1 213.0L459.1 213.8L460.1 214.5L460.1 219.1L459.1 220.2L458.1 220.7L457.0 220.8L456.0 220.6L455.0 220.8L454.0 220.9L453.0 220.6L451.9 220.4L450.9 219.6L449.9 219.4L448.9 219.2L447.9 220.1L446.9 220.6L445.8 220.8L444.8 220.3L443.8 219.0Z" fill="#fbc862" filter="url(#bl)"/><path d="M444.1 215.1L445.1 214.4L446.1 214.0L447.0 214.2L448.0 214.7L449.0 214.8L450.0 214.9L451.0 215.0L451.9 214.4L452.9 214.3L453.9 213.9L454.9 213.9L455.9 214.0L456.9 214.1L457.8 214.2L458.8 214.7L459.8 215.2L459.8 218.4L458.8 219.1L457.8 219.5L456.9 219.5L455.9 219.4L454.9 219.6L453.9 219.6L452.9 219.4L451.9 219.3L451.0 218.7L450.0 218.6L449.0 218.5L448.0 219.1L447.0 219.4L446.1 219.5L445.1 219.2L444.1 218.3Z" fill="#fff2b0" filter="url(#bl)"/><path d="M443.5 218.0L447.0 217.0L450.0 219.0L452.0 214.0L453.5 204.0L454.3 200.6L455.2 205.0L456.5 214.0L458.0 219.0L461.0 217.0" fill="none" stroke="#e0584a" stroke-width="0.9" stroke-linejoin="round" stroke-linecap="round"/><path d="M443.5 218.0L447.0 217.0L450.0 219.0L452.0 214.0L453.5 204.0L454.3 200.6L455.2 205.0L456.5 214.0L458.0 219.0L461.0 217.0" fill="none" stroke="#f8b070" stroke-width="0.27" stroke-linejoin="round" stroke-linecap="round"/><path d="M461.2 207V228" stroke="#aaa" stroke-width="0.4"/><path d="M464.6 232.0L465.3 215.0L466.0 203.0L466.8 214.0L467.5 222.0" fill="none" stroke="#e0584a" stroke-width="0.9" stroke-linejoin="round" stroke-linecap="round"/><path d="M464.6 232.0L465.3 215.0L466.0 203.0L466.8 214.0L467.5 222.0" fill="none" stroke="#f8b070" stroke-width="0.27" stroke-linejoin="round" stroke-linecap="round"/><path d="M464.4 216.6L465.6 214.0L466.7 212.1L467.9 212.9L469.1 213.0L470.3 213.4L471.4 212.8L472.6 212.5L473.8 212.7L475.0 213.2L476.1 214.1L477.3 216.3L477.3 225.5L476.1 228.1L475.0 228.8L473.8 229.7L472.6 228.9L471.4 228.5L470.3 228.1L469.1 229.2L467.9 229.4L466.7 229.3L465.6 228.6L464.4 225.6Z" fill="#d93049" stroke="#d42e48" stroke-width="0.6" stroke-linejoin="round"/><path d="M465.0 217.7L466.1 215.7L467.1 214.3L468.2 214.9L469.3 214.9L470.3 215.2L471.4 214.8L472.4 214.5L473.5 214.7L474.6 215.1L475.6 215.8L476.7 217.4L476.7 224.4L475.6 226.4L474.6 226.9L473.5 227.6L472.4 227.0L471.4 226.7L470.3 226.4L469.3 227.2L468.2 227.4L467.1 227.3L466.1 226.8L465.0 224.5Z" fill="#f0863c" filter="url(#bl)"/><path d="M465.3 218.5L466.3 217.0L467.3 215.9L468.3 216.3L469.3 216.4L470.3 216.6L471.4 216.2L472.4 216.1L473.4 216.2L474.4 216.5L475.4 217.0L476.4 218.3L476.4 223.6L475.4 225.1L474.4 225.5L473.4 226.1L472.4 225.6L471.4 225.3L470.3 225.1L469.3 225.8L468.3 225.9L467.3 225.8L466.3 225.4L465.3 223.7Z" fill="#fbc862" filter="url(#bl)"/><path d="M465.6 219.2L466.6 218.2L467.5 217.5L468.5 217.8L469.4 217.8L470.4 218.0L471.3 217.7L472.3 217.6L473.2 217.7L474.2 217.9L475.1 218.2L476.1 219.1L476.1 222.8L475.1 223.8L474.2 224.1L473.2 224.5L472.3 224.2L471.3 224.0L470.4 223.8L469.4 224.3L468.5 224.4L467.5 224.3L466.6 224.0L465.6 222.9Z" fill="#fff2b0" filter="url(#bl)"/><path d="M468.0 220.0L470.0 224.0L471.5 234.0L472.5 222.0L474.0 212.0L475.5 221.0L477.0 220.0" fill="none" stroke="#e0584a" stroke-width="0.9" stroke-linejoin="round" stroke-linecap="round"/><path d="M468.0 220.0L470.0 224.0L471.5 234.0L472.5 222.0L474.0 212.0L475.5 221.0L477.0 220.0" fill="none" stroke="#f8b070" stroke-width="0.27" stroke-linejoin="round" stroke-linecap="round"/><path d="M477.6 226.0L478.2 214.0L478.8 208.5L479.5 214.0L480.5 218.0L482.0 230.0" fill="none" stroke="#e0584a" stroke-width="0.9" stroke-linejoin="round" stroke-linecap="round"/><path d="M477.6 226.0L478.2 214.0L478.8 208.5L479.5 214.0L480.5 218.0L482.0 230.0" fill="none" stroke="#f8b070" stroke-width="0.27" stroke-linejoin="round" stroke-linecap="round"/><path d="M477.2 214.0L478.3 212.6L479.5 212.4L480.6 212.5L481.8 212.4L482.9 212.5L484.0 213.0L485.2 213.0L486.3 214.2L487.5 215.0L488.6 216.2L488.6 217.6L487.5 218.8L486.3 220.1L485.2 221.0L484.0 221.1L482.9 221.4L481.8 221.5L480.6 221.7L479.5 221.7L478.3 221.1L477.2 219.8Z" fill="#d93049" stroke="#d42e48" stroke-width="0.6" stroke-linejoin="round"/><path d="M477.8 214.7L478.8 213.6L479.8 213.5L480.9 213.6L481.9 213.5L482.9 213.6L483.9 213.9L484.9 214.0L486.0 214.8L487.0 215.5L488.0 216.4L488.0 217.5L487.0 218.4L486.0 219.4L484.9 220.0L483.9 220.1L482.9 220.3L481.9 220.4L480.9 220.6L479.8 220.6L478.8 220.1L477.8 219.1Z" fill="#f0863c" filter="url(#bl)"/><path d="M478.1 215.3L479.1 214.4L480.0 214.3L481.0 214.4L481.9 214.3L482.9 214.4L483.9 214.7L484.8 214.7L485.8 215.4L486.7 215.8L487.7 216.6L487.7 217.4L486.7 218.1L485.8 218.8L484.8 219.3L483.9 219.4L482.9 219.5L481.9 219.6L481.0 219.7L480.0 219.7L479.1 219.4L478.1 218.6Z" fill="#fbc862" filter="url(#bl)"/><path d="M478.4 215.8L479.3 215.2L480.2 215.2L481.1 215.2L482.0 215.2L482.9 215.2L483.8 215.4L484.7 215.4L485.6 215.9L486.5 216.2L487.4 216.7L487.4 217.2L486.5 217.7L485.6 218.2L484.7 218.6L483.8 218.6L482.9 218.7L482.0 218.8L481.1 218.9L480.2 218.9L479.3 218.6L478.4 218.1Z" fill="#fff2b0" filter="url(#bl)"/><path d="M488 216.5L515 216.8L515 217.2L488 217.5Z" fill="#f8b060" stroke="#e0604a" stroke-width="0.5"/><ellipse cx="504.5" cy="217" rx="4" ry="0.9" fill="#fbc070" stroke="#e0604a" stroke-width="0.4"/><path d="M515.2 208V228" stroke="#aaa" stroke-width="0.4"/><path d="M514.6 381.0L515.3 372.0L516.5 360.0L518.0 340.0L519.0 300.0L519.8 270.0L520.6 256.0" fill="none" stroke="#e0584a" stroke-width="0.95" stroke-linejoin="round" stroke-linecap="round"/><path d="M514.6 381.0L515.3 372.0L516.5 360.0L518.0 340.0L519.0 300.0L519.8 270.0L520.6 256.0" fill="none" stroke="#f8b070" stroke-width="0.28" stroke-linejoin="round" stroke-linecap="round"/><path d="M514.4 358.8L515.5 357.1L516.7 355.7L517.8 355.0L519.0 354.3L520.1 353.9L521.3 353.8L521.3 368.2L520.1 367.9L519.0 367.7L517.8 367.1L516.7 366.2L515.5 364.8L514.4 363.2Z" fill="#d93049" stroke="#d42e48" stroke-width="0.6" stroke-linejoin="round"/><path d="M515.0 359.3L515.9 358.0L516.9 357.0L517.8 356.5L518.8 355.9L519.8 355.6L520.7 355.5L520.7 366.5L519.8 366.2L518.8 366.1L517.8 365.6L516.9 364.9L515.9 363.9L515.0 362.6Z" fill="#f0863c" filter="url(#bl)"/><path d="M515.3 359.7L516.1 358.7L517.0 357.9L517.8 357.5L518.7 357.1L519.5 356.9L520.4 356.8L520.4 365.2L519.5 365.0L518.7 364.9L517.8 364.5L517.0 364.0L516.1 363.2L515.3 362.3Z" fill="#fbc862" filter="url(#bl)"/><path d="M515.6 360.1L516.4 359.4L517.1 358.9L517.8 358.6L518.6 358.3L519.3 358.2L520.1 358.1L520.1 363.9L519.3 363.8L518.6 363.7L517.8 363.4L517.1 363.1L516.4 362.5L515.6 361.9Z" fill="#fff2b0" filter="url(#bl)"/><path d="M521.4 352V372" stroke="#aaa" stroke-width="0.4"/><path d="M520.7 246V268" stroke="#aaa" stroke-width="0.4"/><path d="M520.7 251.4L521.8 249.8L522.9 249.1L524.0 248.6L525.1 249.0L526.2 249.3L527.3 248.8L528.4 249.0L529.5 249.7L530.6 249.1L531.7 249.4L532.8 249.5L533.9 249.5L535.0 249.3L536.1 249.2L537.3 249.4L538.4 249.4L539.5 249.8L540.6 249.6L541.7 249.6L542.8 249.8L543.9 250.2L545.0 250.4L546.1 251.3L547.2 251.8L548.3 251.8L549.4 253.0L550.5 253.6L551.6 254.0L552.7 255.1L552.7 257.5L551.6 258.9L550.5 259.5L549.4 260.6L548.3 260.7L547.2 262.1L546.1 262.5L545.0 262.3L543.9 263.1L542.8 262.8L541.7 263.4L540.6 263.5L539.5 263.7L538.4 263.5L537.3 263.8L536.1 263.9L535.0 263.8L533.9 264.1L532.8 264.2L531.7 264.1L530.6 263.7L529.5 263.6L528.4 263.5L527.3 263.7L526.2 264.2L525.1 264.1L524.0 264.7L522.9 264.3L521.8 263.6L520.7 261.8Z" fill="#d93049" stroke="#d42e48" stroke-width="0.6" stroke-linejoin="round"/><path d="M521.3 252.6L522.4 251.4L523.4 250.9L524.5 250.5L525.5 250.8L526.6 251.1L527.7 250.7L528.7 250.9L529.8 251.3L530.9 250.9L531.9 251.1L533.0 251.2L534.0 251.2L535.1 251.1L536.2 250.9L537.2 251.1L538.3 251.1L539.4 251.5L540.4 251.3L541.5 251.3L542.5 251.5L543.6 251.7L544.7 251.9L545.7 252.6L546.8 253.0L547.9 253.0L548.9 253.9L550.0 254.3L551.0 254.6L552.1 255.5L552.1 257.3L551.0 258.3L550.0 258.8L548.9 259.7L547.9 259.7L546.8 260.8L545.7 261.1L544.7 260.9L543.6 261.5L542.5 261.3L541.5 261.8L540.4 261.8L539.4 262.0L538.3 261.8L537.2 262.1L536.2 262.2L535.1 262.1L534.0 262.3L533.0 262.4L531.9 262.3L530.9 262.0L529.8 261.9L528.7 261.8L527.7 262.0L526.6 262.4L525.5 262.3L524.5 262.8L523.4 262.5L522.4 261.9L521.3 260.6Z" fill="#f0863c" filter="url(#bl)"/><path d="M521.6 253.6L522.6 252.6L523.7 252.3L524.7 251.9L525.8 252.2L526.8 252.4L527.8 252.1L528.9 252.2L529.9 252.6L531.0 252.3L532.0 252.4L533.1 252.5L534.1 252.5L535.1 252.4L536.2 252.3L537.2 252.4L538.3 252.4L539.3 252.7L540.3 252.5L541.4 252.5L542.4 252.7L543.5 252.9L544.5 253.0L545.6 253.5L546.6 253.8L547.6 253.8L548.7 254.5L549.7 254.9L550.8 255.1L551.8 255.7L551.8 257.1L550.8 257.9L549.7 258.3L548.7 258.9L547.6 259.0L546.6 259.8L545.6 260.0L544.5 259.9L543.5 260.4L542.4 260.2L541.4 260.5L540.3 260.6L539.3 260.7L538.3 260.6L537.2 260.8L536.2 260.9L535.1 260.8L534.1 260.9L533.1 261.0L532.0 260.9L531.0 260.7L529.9 260.6L528.9 260.6L527.8 260.7L526.8 261.0L525.8 260.9L524.7 261.3L523.7 261.1L522.6 260.7L521.6 259.6Z" fill="#fbc862" filter="url(#bl)"/><path d="M521.9 254.5L522.9 253.9L523.9 253.6L525.0 253.4L526.0 253.6L527.0 253.7L528.0 253.5L529.0 253.6L530.1 253.8L531.1 253.6L532.1 253.7L533.1 253.8L534.1 253.8L535.2 253.7L536.2 253.6L537.2 253.7L538.2 253.7L539.3 253.9L540.3 253.8L541.3 253.8L542.3 253.9L543.3 254.0L544.4 254.1L545.4 254.5L546.4 254.7L547.4 254.7L548.4 255.2L549.5 255.4L550.5 255.5L551.5 256.0L551.5 257.0L550.5 257.5L549.5 257.7L548.4 258.2L547.4 258.2L546.4 258.8L545.4 258.9L544.4 258.9L543.3 259.2L542.3 259.1L541.3 259.3L540.3 259.4L539.3 259.5L538.2 259.3L537.2 259.5L536.2 259.5L535.2 259.5L534.1 259.6L533.1 259.7L532.1 259.6L531.1 259.4L530.1 259.4L529.0 259.3L528.0 259.4L527.0 259.7L526.0 259.6L525.0 259.8L523.9 259.7L522.9 259.4L521.9 258.7Z" fill="#fff2b0" filter="url(#bl)"/><path d="M521.5 261.0L523.0 258.0L524.5 262.0L526.0 258.0L528.0 260.0L530.0 257.0L532.0 259.0L534.0 255.0L537.0 256.0L540.0 253.0L543.0 254.0L545.5 248.0L547.0 242.0" fill="none" stroke="#c8443a" stroke-width="0.85" stroke-linejoin="round" stroke-linecap="round"/><path d="M552.7 256.1L554.0 254.1L555.3 252.1L556.7 252.1L558.0 254.1L559.3 256.2L559.3 257.4L558.0 259.5L556.7 261.5L555.3 261.5L554.0 259.5L552.7 257.6Z" fill="#d93049" stroke="#d42e48" stroke-width="0.6" stroke-linejoin="round"/><path d="M553.3 256.2L554.4 254.8L555.5 253.2L556.5 253.2L557.6 254.7L558.7 256.3L558.7 257.3L557.6 258.9L556.5 260.3L555.5 260.4L554.4 258.9L553.3 257.4Z" fill="#f0863c" filter="url(#bl)"/><path d="M553.6 256.4L554.6 255.2L555.5 254.1L556.5 254.0L557.4 255.2L558.4 256.4L558.4 257.2L557.4 258.4L556.5 259.5L555.5 259.5L554.6 258.4L553.6 257.2Z" fill="#fbc862" filter="url(#bl)"/><path d="M553.9 256.5L554.7 255.7L555.6 254.9L556.4 254.9L557.3 255.7L558.1 256.6L558.1 257.1L557.3 257.9L556.4 258.7L555.6 258.7L554.7 257.9L553.9 257.1Z" fill="#fff2b0" filter="url(#bl)"/><path d="M559 256.5L563 256.8L563 257.2L559 257.5Z" fill="#f8b060" stroke="#e0604a" stroke-width="0.5"/><path d="M563.2 229V266" stroke="#aaa" stroke-width="0.4"/><path d="M569.6 229V330" stroke="#aaa" stroke-width="0.4"/><path d="M563.3 237.1L564.4 236.7L565.5 236.7L566.6 237.0L567.8 237.3L568.9 237.6L570.0 237.9L570.0 238.5L568.9 238.8L567.8 239.1L566.6 239.4L565.5 239.7L564.4 239.7L563.3 239.3Z" fill="#d93049" stroke="#d42e48" stroke-width="0.6" stroke-linejoin="round"/><path d="M563.9 237.3L564.8 237.1L565.7 237.1L566.6 237.3L567.6 237.5L568.5 237.8L569.4 238.0L569.4 238.4L568.5 238.6L567.6 238.9L566.6 239.1L565.7 239.3L564.8 239.3L563.9 239.1Z" fill="#f0863c" filter="url(#bl)"/><path d="M564.2 237.5L565.0 237.3L565.8 237.3L566.6 237.5L567.5 237.7L568.3 237.9L569.1 238.0L569.1 238.4L568.3 238.5L567.5 238.7L566.6 238.9L565.8 239.1L565.0 239.1L564.2 238.9Z" fill="#fbc862" filter="url(#bl)"/><path d="M564.5 237.7L565.2 237.6L565.9 237.6L566.6 237.7L567.4 237.9L568.1 238.0L568.8 238.1L568.8 238.3L568.1 238.4L567.4 238.5L566.6 238.7L565.9 238.8L565.2 238.8L564.5 238.7Z" fill="#fff2b0" filter="url(#bl)"/><path d="M569.8 307.2L570.9 303.5L572.0 301.6L573.1 301.1L574.2 301.1L575.3 301.3L576.4 302.1L577.5 302.0L578.7 303.1L579.8 303.4L580.9 303.6L582.0 304.4L583.1 305.0L584.2 305.3L585.3 305.7L586.4 307.9L586.4 313.7L585.3 315.1L584.2 315.6L583.1 315.8L582.0 316.7L580.9 317.3L579.8 317.2L578.7 317.9L577.5 318.7L576.4 319.2L575.3 319.8L574.2 319.4L573.1 319.8L572.0 319.6L570.9 317.8L569.8 314.6Z" fill="#d93049" stroke="#d42e48" stroke-width="0.6" stroke-linejoin="round"/><path d="M570.4 308.0L571.4 305.2L572.5 303.7L573.5 303.3L574.5 303.4L575.5 303.5L576.6 304.1L577.6 304.0L578.6 304.9L579.6 305.1L580.7 305.3L581.7 305.9L582.7 306.3L583.7 306.6L584.8 306.9L585.8 308.5L585.8 312.9L584.8 314.0L583.7 314.4L582.7 314.5L581.7 315.2L580.7 315.6L579.6 315.6L578.6 316.1L577.6 316.7L576.6 317.1L575.5 317.6L574.5 317.2L573.5 317.6L572.5 317.4L571.4 316.0L570.4 313.6Z" fill="#f0863c" filter="url(#bl)"/><path d="M570.7 308.6L571.7 306.4L572.7 305.3L573.7 305.0L574.6 305.1L575.6 305.2L576.6 305.6L577.6 305.6L578.6 306.2L579.6 306.4L580.6 306.5L581.6 307.0L582.5 307.3L583.5 307.5L584.5 307.7L585.5 309.0L585.5 312.3L584.5 313.2L583.5 313.5L582.5 313.6L581.6 314.1L580.6 314.4L579.6 314.4L578.6 314.8L577.6 315.3L576.6 315.5L575.6 315.9L574.6 315.6L573.7 315.9L572.7 315.8L571.7 314.7L570.7 312.9Z" fill="#fbc862" filter="url(#bl)"/><path d="M571.0 309.2L571.9 307.7L572.9 306.9L573.8 306.7L574.8 306.7L575.7 306.8L576.7 307.1L577.6 307.1L578.6 307.5L579.5 307.7L580.5 307.8L581.4 308.1L582.4 308.3L583.3 308.4L584.3 308.6L585.2 309.5L585.2 311.8L584.3 312.3L583.3 312.5L582.4 312.6L581.4 313.0L580.5 313.2L579.5 313.2L578.6 313.5L577.6 313.8L576.7 314.0L575.7 314.2L574.8 314.0L573.8 314.2L572.9 314.1L571.9 313.4L571.0 312.2Z" fill="#fff2b0" filter="url(#bl)"/><path d="M574.0 309.0L576.0 312.0L578.0 308.0L580.0 311.0L582.0 308.0L583.5 316.0L584.6 331.0" fill="none" stroke="#e0584a" stroke-width="0.9" stroke-linejoin="round" stroke-linecap="round"/><path d="M574.0 309.0L576.0 312.0L578.0 308.0L580.0 311.0L582.0 308.0L583.5 316.0L584.6 331.0" fill="none" stroke="#f8b070" stroke-width="0.27" stroke-linejoin="round" stroke-linecap="round"/><path d="M584.7 276V312" stroke="#aaa" stroke-width="0.4"/><path d="M584.8 279.8L586.0 277.1L587.1 275.9L588.3 276.2L589.5 276.4L590.6 276.7L591.8 277.2L593.0 277.5L594.1 277.2L595.3 277.9L596.5 277.8L597.6 278.7L598.8 280.9L598.8 288.9L597.6 291.2L596.5 291.9L595.3 292.8L594.1 292.8L593.0 292.8L591.8 293.0L590.6 292.6L589.5 293.2L588.3 293.8L587.1 294.1L586.0 292.5L584.8 290.2Z" fill="#d93049" stroke="#d42e48" stroke-width="0.6" stroke-linejoin="round"/><path d="M585.4 281.0L586.5 279.0L587.5 278.0L588.6 278.3L589.7 278.5L590.7 278.7L591.8 279.0L592.9 279.3L593.9 279.1L595.0 279.6L596.1 279.5L597.1 280.2L598.2 281.9L598.2 288.0L597.1 289.7L596.1 290.3L595.0 290.9L593.9 290.9L592.9 290.9L591.8 291.1L590.7 290.8L589.7 291.3L588.6 291.7L587.5 291.9L586.5 290.7L585.4 289.0Z" fill="#f0863c" filter="url(#bl)"/><path d="M585.7 282.0L586.7 280.4L587.7 279.7L588.8 279.9L589.8 280.0L590.8 280.2L591.8 280.5L592.8 280.7L593.8 280.5L594.8 280.9L595.9 280.8L596.9 281.4L597.9 282.6L597.9 287.3L596.9 288.6L595.9 289.0L594.8 289.5L593.8 289.5L592.8 289.5L591.8 289.6L590.8 289.4L589.8 289.8L588.8 290.1L587.7 290.3L586.7 289.4L585.7 288.0Z" fill="#fbc862" filter="url(#bl)"/><path d="M586.0 282.9L587.0 281.8L587.9 281.3L588.9 281.5L589.9 281.6L590.8 281.7L591.8 281.9L592.8 282.0L593.7 281.9L594.7 282.2L595.7 282.1L596.6 282.5L597.6 283.4L597.6 286.6L596.6 287.5L595.7 287.8L594.7 288.1L593.7 288.1L592.8 288.1L591.8 288.2L590.8 288.0L589.9 288.3L588.9 288.5L587.9 288.7L587.0 288.0L586.0 287.1Z" fill="#fff2b0" filter="url(#bl)"/><path d="M586.0 283.0L588.0 287.0L590.0 282.0L592.0 286.0L594.0 284.0L595.5 296.0L596.5 313.0" fill="none" stroke="#e0584a" stroke-width="0.9" stroke-linejoin="round" stroke-linecap="round"/><path d="M586.0 283.0L588.0 287.0L590.0 282.0L592.0 286.0L594.0 284.0L595.5 296.0L596.5 313.0" fill="none" stroke="#f8b070" stroke-width="0.27" stroke-linejoin="round" stroke-linecap="round"/><path d="M598.7 243V280" stroke="#aaa" stroke-width="0.4"/><path d="M602.8 273.7L603.6 262.0L604.5 252.0" fill="none" stroke="#e0584a" stroke-width="0.9" stroke-linejoin="round" stroke-linecap="round"/><path d="M602.8 273.7L603.6 262.0L604.5 252.0" fill="none" stroke="#f8b070" stroke-width="0.27" stroke-linejoin="round" stroke-linecap="round"/><path d="M598.8 245.9L599.9 243.5L601.0 242.0L602.1 242.1L603.3 242.2L604.4 242.4L605.5 242.2L606.6 242.6L607.7 242.4L608.8 242.0L610.0 241.8L611.1 241.7L612.2 243.1L613.3 246.6L613.3 258.3L612.2 261.1L611.1 261.5L610.0 261.8L608.8 261.6L607.7 261.5L606.6 262.0L605.5 261.5L604.4 261.7L603.3 261.9L602.1 262.0L601.0 261.1L599.9 260.6L598.8 257.7Z" fill="#d93049" stroke="#d42e48" stroke-width="0.6" stroke-linejoin="round"/><path d="M599.4 247.4L600.4 245.5L601.4 244.4L602.5 244.5L603.5 244.6L604.5 244.7L605.5 244.6L606.6 244.9L607.6 244.7L608.6 244.4L609.6 244.3L610.7 244.2L611.7 245.2L612.7 247.9L612.7 256.8L611.7 258.9L610.7 259.2L609.6 259.5L608.6 259.3L607.6 259.2L606.6 259.6L605.5 259.2L604.5 259.4L603.5 259.5L602.5 259.6L601.4 258.9L600.4 258.5L599.4 256.3Z" fill="#f0863c" filter="url(#bl)"/><path d="M599.7 248.5L600.7 247.0L601.7 246.2L602.6 246.2L603.6 246.3L604.6 246.5L605.6 246.3L606.5 246.6L607.5 246.5L608.5 246.2L609.5 246.1L610.4 246.0L611.4 246.8L612.4 248.8L612.4 255.7L611.4 257.2L610.4 257.5L609.5 257.7L608.5 257.5L607.5 257.5L606.5 257.8L605.6 257.5L604.6 257.6L603.6 257.7L602.6 257.8L601.7 257.3L600.7 257.0L599.7 255.3Z" fill="#fbc862" filter="url(#bl)"/><path d="M600.0 249.6L600.9 248.6L601.9 248.0L602.8 248.0L603.7 248.1L604.7 248.2L605.6 248.1L606.5 248.3L607.4 248.2L608.4 248.0L609.3 247.9L610.2 247.9L611.2 248.4L612.1 249.8L612.1 254.5L611.2 255.6L610.2 255.8L609.3 255.9L608.4 255.8L607.4 255.8L606.5 256.0L605.6 255.8L604.7 255.9L603.7 256.0L602.8 256.0L601.9 255.6L600.9 255.4L600.0 254.3Z" fill="#fff2b0" filter="url(#bl)"/><path d="M600.0 254.0L603.0 252.0L605.0 256.0L607.0 249.0L609.0 246.0L611.0 243.0L612.0 260.0L612.6 280.0L613.2 298.8" fill="none" stroke="#e0584a" stroke-width="0.9" stroke-linejoin="round" stroke-linecap="round"/><path d="M600.0 254.0L603.0 252.0L605.0 256.0L607.0 249.0L609.0 246.0L611.0 243.0L612.0 260.0L612.6 280.0L613.2 298.8" fill="none" stroke="#f8b070" stroke-width="0.27" stroke-linejoin="round" stroke-linecap="round"/><path d="M612.8 285V304" stroke="#aaa" stroke-width="0.4"/><path d="M612.9 291.0L614.0 289.0L615.1 288.0L616.3 288.1L617.4 289.5L618.5 291.7L618.5 298.3L617.4 300.5L616.3 301.6L615.1 301.6L614.0 301.2L612.9 299.2Z" fill="#d93049" stroke="#d42e48" stroke-width="0.6" stroke-linejoin="round"/><path d="M613.5 292.0L614.4 290.4L615.3 289.7L616.1 289.8L617.0 290.8L617.9 292.5L617.9 297.5L617.0 299.2L616.1 300.0L615.3 300.0L614.4 299.7L613.5 298.2Z" fill="#f0863c" filter="url(#bl)"/><path d="M613.8 292.7L614.6 291.5L615.3 291.0L616.1 291.0L616.8 291.8L617.6 293.1L617.6 296.9L616.8 298.2L616.1 298.8L615.3 298.8L614.6 298.6L613.8 297.4Z" fill="#fbc862" filter="url(#bl)"/><path d="M614.1 293.4L614.7 292.6L615.4 292.2L616.0 292.3L616.7 292.8L617.3 293.7L617.3 296.3L616.7 297.2L616.0 297.6L615.4 297.7L614.7 297.5L614.1 296.7Z" fill="#fff2b0" filter="url(#bl)"/><path d="M618.5 292.5L619.5 291.8L620.5 292.1L621.5 293.1L622.5 294.4L622.5 295.8L621.5 296.8L620.5 297.9L619.5 298.3L618.5 297.5Z" fill="#d93049" stroke="#d42e48" stroke-width="0.6" stroke-linejoin="round"/><path d="M619.1 293.1L619.8 292.6L620.5 292.8L621.2 293.6L621.9 294.5L621.9 295.6L621.2 296.4L620.5 297.2L619.8 297.5L619.1 296.9Z" fill="#f0863c" filter="url(#bl)"/><path d="M619.4 293.5L620.0 293.1L620.5 293.3L621.0 293.9L621.6 294.6L621.6 295.5L621.0 296.1L620.5 296.7L620.0 296.9L619.4 296.4Z" fill="#fbc862" filter="url(#bl)"/><path d="M619.7 294.0L620.1 293.7L620.5 293.8L620.9 294.2L621.3 294.7L621.3 295.3L620.9 295.7L620.5 296.1L620.1 296.3L619.7 296.0Z" fill="#fff2b0" filter="url(#bl)"/><path d="M618.0 292.0L620.0 294.0L622.0 296.0" fill="none" stroke="#e0584a" stroke-width="0.85" stroke-linejoin="round" stroke-linecap="round"/><path d="M618.0 292.0L620.0 294.0L622.0 296.0" fill="none" stroke="#f8b070" stroke-width="0.26" stroke-linejoin="round" stroke-linecap="round"/><path d="M621.7 298V316" stroke="#aaa" stroke-width="0.4"/><path d="M622.6 287.0L623.2 293.0L624.0 300.0" fill="none" stroke="#e0584a" stroke-width="0.85" stroke-linejoin="round" stroke-linecap="round"/><path d="M622.6 287.0L623.2 293.0L624.0 300.0" fill="none" stroke="#f8b070" stroke-width="0.26" stroke-linejoin="round" stroke-linecap="round"/><path d="M621.8 304.0L623.0 301.1L624.2 299.7L625.3 300.3L626.5 300.2L627.7 300.8L628.9 301.6L630.0 301.2L631.2 301.0L632.4 303.0L632.4 311.2L631.2 313.5L630.0 313.2L628.9 313.3L627.7 313.2L626.5 314.4L625.3 314.9L624.2 314.8L623.0 312.9L621.8 311.0Z" fill="#d93049" stroke="#d42e48" stroke-width="0.6" stroke-linejoin="round"/><path d="M622.4 304.8L623.4 302.6L624.5 301.6L625.5 302.0L626.6 301.9L627.6 302.3L628.7 303.0L629.7 302.6L630.8 302.5L631.8 304.0L631.8 310.3L630.8 312.0L629.7 311.8L628.7 311.9L627.6 311.8L626.6 312.7L625.5 313.1L624.5 313.0L623.4 311.6L622.4 310.1Z" fill="#f0863c" filter="url(#bl)"/><path d="M622.7 305.4L623.7 303.7L624.7 302.9L625.6 303.3L626.6 303.2L627.6 303.5L628.6 304.0L629.5 303.7L630.5 303.7L631.5 304.8L631.5 309.6L630.5 310.9L629.5 310.7L628.6 310.8L627.6 310.7L626.6 311.4L625.6 311.7L624.7 311.7L623.7 310.6L622.7 309.5Z" fill="#fbc862" filter="url(#bl)"/><path d="M623.0 306.0L623.9 304.8L624.8 304.3L625.7 304.5L626.6 304.5L627.6 304.7L628.5 305.0L629.4 304.9L630.3 304.8L631.2 305.6L631.2 308.9L630.3 309.8L629.4 309.7L628.5 309.7L627.6 309.7L626.6 310.2L625.7 310.3L624.8 310.3L623.9 309.6L623.0 308.8Z" fill="#fff2b0" filter="url(#bl)"/><path d="M627.0 296.0L628.0 290.0L629.0 302.0L630.2 318.0L630.8 325.0L631.5 312.0" fill="none" stroke="#e0584a" stroke-width="0.9" stroke-linejoin="round" stroke-linecap="round"/><path d="M627.0 296.0L628.0 290.0L629.0 302.0L630.2 318.0L630.8 325.0L631.5 312.0" fill="none" stroke="#f8b070" stroke-width="0.27" stroke-linejoin="round" stroke-linecap="round"/><path d="M632.8 300.0L633.6 284.0L634.4 277.7L635.2 290.0L636.2 305.0L637.0 309.3L638.0 300.0L638.8 292.0" fill="none" stroke="#e0584a" stroke-width="0.9" stroke-linejoin="round" stroke-linecap="round"/><path d="M632.8 300.0L633.6 284.0L634.4 277.7L635.2 290.0L636.2 305.0L637.0 309.3L638.0 300.0L638.8 292.0" fill="none" stroke="#f8b070" stroke-width="0.27" stroke-linejoin="round" stroke-linecap="round"/><path d="M632.0 287.0L633.2 284.9L634.4 283.6L635.6 283.5L636.7 283.5L637.9 283.7L639.1 284.7L640.3 286.8L640.3 294.2L639.1 296.1L637.9 297.2L636.7 297.4L635.6 297.6L634.4 297.2L633.2 296.0L632.0 293.9Z" fill="#d93049" stroke="#d42e48" stroke-width="0.6" stroke-linejoin="round"/><path d="M632.6 287.9L633.6 286.2L634.6 285.3L635.6 285.2L636.7 285.2L637.7 285.4L638.7 286.1L639.7 287.7L639.7 293.3L638.7 294.8L637.7 295.6L636.7 295.7L635.6 295.9L634.6 295.6L633.6 294.7L632.6 293.1Z" fill="#f0863c" filter="url(#bl)"/><path d="M632.9 288.5L633.8 287.2L634.8 286.5L635.7 286.5L636.6 286.5L637.5 286.6L638.5 287.2L639.4 288.3L639.4 292.6L638.5 293.8L637.5 294.4L636.6 294.5L635.7 294.6L634.8 294.4L633.8 293.7L632.9 292.5Z" fill="#fbc862" filter="url(#bl)"/><path d="M633.2 289.1L634.0 288.3L634.9 287.7L635.7 287.7L636.6 287.7L637.4 287.8L638.3 288.2L639.1 289.0L639.1 292.0L638.3 292.7L637.4 293.2L636.6 293.2L635.7 293.3L634.9 293.2L634.0 292.7L633.2 291.9Z" fill="#fff2b0" filter="url(#bl)"/><path d="M640.4 268V286" stroke="#aaa" stroke-width="0.4"/><path d="M640.8 285.0L641.3 275.0L641.8 270.5" fill="none" stroke="#e0584a" stroke-width="0.85" stroke-linejoin="round" stroke-linecap="round"/><path d="M640.8 285.0L641.3 275.0L641.8 270.5" fill="none" stroke="#f8b070" stroke-width="0.26" stroke-linejoin="round" stroke-linecap="round"/><path d="M640.5 274.4L641.7 272.9L642.9 272.4L644.1 273.3L645.3 274.2L646.5 275.1L647.7 275.9L648.9 276.9L648.9 278.5L647.7 279.1L646.5 280.2L645.3 281.0L644.1 281.8L642.9 282.7L641.7 282.5L640.5 280.6Z" fill="#d93049" stroke="#d42e48" stroke-width="0.6" stroke-linejoin="round"/><path d="M641.1 275.2L642.1 274.0L643.2 273.7L644.2 274.4L645.2 275.0L646.2 275.7L647.3 276.3L648.3 277.1L648.3 278.3L647.3 278.7L646.2 279.5L645.2 280.2L644.2 280.8L643.2 281.5L642.1 281.4L641.1 279.9Z" fill="#f0863c" filter="url(#bl)"/><path d="M641.4 275.8L642.3 274.9L643.3 274.6L644.2 275.1L645.2 275.6L646.1 276.1L647.1 276.6L648.0 277.2L648.0 278.1L647.1 278.5L646.1 279.1L645.2 279.6L644.2 280.1L643.3 280.6L642.3 280.5L641.4 279.4Z" fill="#fbc862" filter="url(#bl)"/><path d="M641.7 276.3L642.6 275.7L643.4 275.5L644.3 275.9L645.1 276.2L646.0 276.6L646.8 276.9L647.7 277.3L647.7 278.0L646.8 278.2L646.0 278.6L645.1 279.0L644.3 279.3L643.4 279.6L642.6 279.6L641.7 278.8Z" fill="#fff2b0" filter="url(#bl)"/><path d="M648.5 278.0L670.8 278.3L670.8 278.7L648.5 279.0Z" fill="#f8b060" stroke="#e0604a" stroke-width="0.5"/><ellipse cx="656" cy="278.5" rx="3.2" ry="0.9" fill="#fbc070" stroke="#e0604a" stroke-width="0.4"/><path d="M642.6 283.0L643.4 300.0L644.6 320.0L646.0 338.0L647.3 348.8" fill="none" stroke="#e0584a" stroke-width="0.95" stroke-linejoin="round" stroke-linecap="round"/><path d="M642.6 283.0L643.4 300.0L644.6 320.0L646.0 338.0L647.3 348.8" fill="none" stroke="#f8b070" stroke-width="0.28" stroke-linejoin="round" stroke-linecap="round"/><path d="M670.9 268V300" stroke="#aaa" stroke-width="0.4"/><path d="M673.8 321.6L675.0 312.0L676.5 304.0L678.0 297.0" fill="none" stroke="#e0584a" stroke-width="0.9" stroke-linejoin="round" stroke-linecap="round"/><path d="M673.8 321.6L675.0 312.0L676.5 304.0L678.0 297.0" fill="none" stroke="#f8b070" stroke-width="0.27" stroke-linejoin="round" stroke-linecap="round"/><path d="M671.0 284.7L672.1 283.2L673.3 281.9L674.4 281.3L675.5 281.3L676.6 281.8L677.8 281.5L678.9 281.9L680.0 282.3L681.1 282.0L682.3 282.7L683.4 281.8L684.5 281.7L685.6 282.0L686.8 281.5L687.9 281.6L689.0 281.8L690.2 281.3L691.3 281.5L692.4 281.8L693.5 281.8L694.7 281.3L695.8 281.3L696.9 281.4L698.0 282.2L699.2 283.5L700.3 285.2L700.3 294.3L699.2 296.3L698.0 297.8L696.9 297.5L695.8 297.9L694.7 298.2L693.5 297.8L692.4 298.6L691.3 298.0L690.2 298.5L689.0 298.0L687.9 298.4L686.8 297.7L685.6 297.5L684.5 297.3L683.4 297.6L682.3 297.0L681.1 297.7L680.0 297.5L678.9 297.8L677.8 298.2L676.6 298.4L675.5 297.8L674.4 297.8L673.3 297.9L672.1 296.4L671.0 294.8Z" fill="#d93049" stroke="#d42e48" stroke-width="0.6" stroke-linejoin="round"/><path d="M671.6 286.0L672.7 284.8L673.8 283.8L674.8 283.4L675.9 283.4L677.0 283.7L678.1 283.5L679.2 283.8L680.2 284.1L681.3 283.8L682.4 284.4L683.5 283.7L684.6 283.7L685.6 283.9L686.7 283.5L687.8 283.6L688.9 283.7L690.0 283.4L691.1 283.5L692.1 283.7L693.2 283.7L694.3 283.4L695.4 283.4L696.5 283.4L697.5 284.1L698.6 285.0L699.7 286.3L699.7 293.2L698.6 294.7L697.5 295.9L696.5 295.6L695.4 295.9L694.3 296.2L693.2 295.9L692.1 296.5L691.1 296.0L690.0 296.4L688.9 296.0L687.8 296.3L686.7 295.8L685.6 295.6L684.6 295.5L683.5 295.7L682.4 295.3L681.3 295.8L680.2 295.6L679.2 295.9L678.1 296.2L677.0 296.4L675.9 295.9L674.8 295.8L673.8 296.0L672.7 294.8L671.6 293.6Z" fill="#f0863c" filter="url(#bl)"/><path d="M671.9 286.9L673.0 286.0L674.0 285.2L675.1 284.9L676.1 284.9L677.2 285.1L678.2 285.0L679.3 285.2L680.4 285.4L681.4 285.3L682.5 285.7L683.5 285.2L684.6 285.1L685.6 285.3L686.7 285.0L687.8 285.0L688.8 285.2L689.9 284.9L690.9 285.0L692.0 285.2L693.1 285.2L694.1 284.9L695.2 284.9L696.2 284.9L697.3 285.4L698.3 286.2L699.4 287.2L699.4 292.4L698.3 293.6L697.3 294.4L696.2 294.3L695.2 294.5L694.1 294.7L693.1 294.4L692.0 294.9L690.9 294.6L689.9 294.8L688.8 294.6L687.8 294.8L686.7 294.4L685.6 294.2L684.6 294.2L683.5 294.3L682.5 294.0L681.4 294.4L680.4 294.2L679.3 294.4L678.2 294.6L677.2 294.8L676.1 294.4L675.1 294.4L674.0 294.5L673.0 293.6L671.9 292.7Z" fill="#fbc862" filter="url(#bl)"/><path d="M672.2 287.8L673.2 287.2L674.3 286.6L675.3 286.4L676.3 286.4L677.4 286.6L678.4 286.5L679.4 286.6L680.5 286.8L681.5 286.7L682.5 286.9L683.6 286.6L684.6 286.6L685.6 286.7L686.7 286.5L687.7 286.5L688.8 286.6L689.8 286.4L690.8 286.5L691.9 286.6L692.9 286.6L693.9 286.4L695.0 286.4L696.0 286.4L697.0 286.8L698.1 287.3L699.1 288.0L699.1 291.6L698.1 292.4L697.0 293.0L696.0 292.9L695.0 293.0L693.9 293.2L692.9 293.0L691.9 293.3L690.8 293.1L689.8 293.3L688.8 293.1L687.7 293.2L686.7 292.9L685.6 292.9L684.6 292.8L683.6 292.9L682.5 292.7L681.5 293.0L680.5 292.9L679.4 293.0L678.4 293.1L677.4 293.2L676.3 293.0L675.3 293.0L674.3 293.0L673.2 292.4L672.2 291.8Z" fill="#fff2b0" filter="url(#bl)"/><path d="M679.0 294.0L681.0 286.0L683.0 283.0L685.0 290.0L687.0 299.0L688.5 293.0L690.0 284.0L692.0 288.0L694.0 286.0L697.0 283.0L698.5 281.5L699.8 295.0L700.6 310.0L702.0 340.0L703.2 370.0L704.0 387.0" fill="none" stroke="#e0584a" stroke-width="0.9" stroke-linejoin="round" stroke-linecap="round"/><path d="M679.0 294.0L681.0 286.0L683.0 283.0L685.0 290.0L687.0 299.0L688.5 293.0L690.0 284.0L692.0 288.0L694.0 286.0L697.0 283.0L698.5 281.5L699.8 295.0L700.6 310.0L702.0 340.0L703.2 370.0L704.0 387.0" fill="none" stroke="#f8b070" stroke-width="0.27" stroke-linejoin="round" stroke-linecap="round"/><path d="M700.3 287.8L701.4 287.0L702.6 287.0L703.7 287.4L704.9 288.3L706.0 289.3L706.0 290.3L704.9 291.3L703.7 292.2L702.6 292.6L701.4 292.6L700.3 291.7Z" fill="#d93049" stroke="#d42e48" stroke-width="0.6" stroke-linejoin="round"/><path d="M700.9 288.3L701.8 287.7L702.7 287.7L703.6 288.0L704.5 288.6L705.4 289.4L705.4 290.2L704.5 291.0L703.6 291.6L702.7 291.9L701.8 291.9L700.9 291.3Z" fill="#f0863c" filter="url(#bl)"/><path d="M701.2 288.7L702.0 288.2L702.8 288.2L703.5 288.4L704.3 288.9L705.1 289.5L705.1 290.1L704.3 290.7L703.5 291.2L702.8 291.4L702.0 291.4L701.2 290.9Z" fill="#fbc862" filter="url(#bl)"/><path d="M701.5 289.0L702.2 288.7L702.8 288.7L703.5 288.8L704.1 289.2L704.8 289.6L704.8 290.0L704.1 290.4L703.5 290.7L702.8 290.9L702.2 290.9L701.5 290.6Z" fill="#fff2b0" filter="url(#bl)"/><path d="M706.2 247V300" stroke="#aaa" stroke-width="0.4"/><path d="M706.6 318.4L707.0 300.0L707.6 280.0L708.4 262.0L709.0 254.0" fill="none" stroke="#e0584a" stroke-width="0.9" stroke-linejoin="round" stroke-linecap="round"/><path d="M706.6 318.4L707.0 300.0L707.6 280.0L708.4 262.0L709.0 254.0" fill="none" stroke="#f8b070" stroke-width="0.27" stroke-linejoin="round" stroke-linecap="round"/><path d="M705.6 253.2L706.8 251.2L707.9 249.3L709.1 249.8L710.2 249.6L711.4 249.8L712.5 250.3L713.7 249.9L714.9 250.0L716.0 250.6L717.2 250.0L718.3 250.8L719.5 250.5L720.6 251.0L721.8 253.2L721.8 261.1L720.6 263.7L719.5 264.6L718.3 264.6L717.2 264.5L716.0 264.9L714.9 264.8L713.7 264.9L712.5 265.1L711.4 265.1L710.2 265.4L709.1 265.3L707.9 265.7L706.8 263.8L705.6 261.4Z" fill="#d93049" stroke="#d42e48" stroke-width="0.6" stroke-linejoin="round"/><path d="M706.2 254.2L707.3 252.7L708.3 251.3L709.4 251.7L710.5 251.5L711.6 251.7L712.6 252.0L713.7 251.7L714.8 251.8L715.8 252.2L716.9 251.8L718.0 252.4L719.1 252.1L720.1 252.6L721.2 254.2L721.2 260.3L720.1 262.2L719.1 262.9L718.0 262.9L716.9 262.8L715.8 263.1L714.8 263.0L713.7 263.1L712.6 263.2L711.6 263.3L710.5 263.5L709.4 263.4L708.3 263.7L707.3 262.3L706.2 260.4Z" fill="#f0863c" filter="url(#bl)"/><path d="M706.5 255.0L707.5 253.9L708.6 252.7L709.6 253.0L710.6 252.9L711.6 253.1L712.7 253.3L713.7 253.1L714.7 253.1L715.8 253.5L716.8 253.1L717.8 253.6L718.8 253.4L719.9 253.7L720.9 255.0L720.9 259.6L719.9 261.1L718.8 261.6L717.8 261.6L716.8 261.6L715.8 261.8L714.7 261.7L713.7 261.8L712.7 261.9L711.6 261.9L710.6 262.1L709.6 262.0L708.6 262.2L707.5 261.2L706.5 259.7Z" fill="#fbc862" filter="url(#bl)"/><path d="M706.8 255.8L707.8 255.0L708.8 254.2L709.8 254.4L710.7 254.3L711.7 254.4L712.7 254.6L713.7 254.5L714.7 254.5L715.7 254.7L716.7 254.5L717.6 254.8L718.6 254.7L719.6 254.9L720.6 255.8L720.6 259.0L719.6 260.0L718.6 260.3L717.6 260.3L716.7 260.3L715.7 260.5L714.7 260.4L713.7 260.5L712.7 260.5L711.7 260.6L710.7 260.7L709.8 260.6L708.8 260.8L707.8 260.0L706.8 259.0Z" fill="#fff2b0" filter="url(#bl)"/><path d="M709.0 258.0L711.0 252.0L713.0 256.0L715.0 251.0L717.0 255.0L719.0 259.0L721.0 256.0" fill="none" stroke="#c8443a" stroke-width="0.85" stroke-linejoin="round" stroke-linecap="round"/><path d="M721.8 246V268" stroke="#aaa" stroke-width="0.4"/><path d="M722.0 262.0L722.6 250.0L723.2 243.0" fill="none" stroke="#e0584a" stroke-width="0.85" stroke-linejoin="round" stroke-linecap="round"/><path d="M722.0 262.0L722.6 250.0L723.2 243.0" fill="none" stroke="#f8b070" stroke-width="0.26" stroke-linejoin="round" stroke-linecap="round"/><path d="M721.0 270.8L722.3 268.8L723.5 267.4L724.8 267.7L726.0 268.6L727.3 270.4L727.3 278.4L726.0 280.7L724.8 281.6L723.5 281.7L722.3 280.2L721.0 278.4Z" fill="#d93049" stroke="#d42e48" stroke-width="0.6" stroke-linejoin="round"/><path d="M721.6 271.7L722.6 270.1L723.6 269.1L724.7 269.3L725.7 270.0L726.7 271.4L726.7 277.5L725.7 279.2L724.7 279.9L723.6 280.0L722.6 278.9L721.6 277.4Z" fill="#f0863c" filter="url(#bl)"/><path d="M721.9 272.3L722.8 271.2L723.7 270.4L724.6 270.6L725.5 271.1L726.4 272.1L726.4 276.8L725.5 278.1L724.6 278.6L723.7 278.7L722.8 277.8L721.9 276.7Z" fill="#fbc862" filter="url(#bl)"/><path d="M722.2 273.0L723.0 272.2L723.8 271.7L724.5 271.8L725.3 272.1L726.1 272.9L726.1 276.1L725.3 277.0L724.5 277.3L723.8 277.4L723.0 276.8L722.2 276.0Z" fill="#fff2b0" filter="url(#bl)"/><path d="M723.6 270.0L724.3 280.0L724.8 286.6" fill="none" stroke="#e0584a" stroke-width="0.85" stroke-linejoin="round" stroke-linecap="round"/><path d="M723.6 270.0L724.3 280.0L724.8 286.6" fill="none" stroke="#f8b070" stroke-width="0.26" stroke-linejoin="round" stroke-linecap="round"/><path d="M725.6 275.0L726.3 262.0L727.0 250.0L727.6 238.0L728.0 228.0" fill="none" stroke="#e0584a" stroke-width="0.9" stroke-linejoin="round" stroke-linecap="round"/><path d="M725.6 275.0L726.3 262.0L727.0 250.0L727.6 238.0L728.0 228.0" fill="none" stroke="#f8b070" stroke-width="0.27" stroke-linejoin="round" stroke-linecap="round"/><path d="M727.3 229.7L728.5 227.1L729.8 226.2L731.0 226.0L732.3 227.1L733.5 228.0L734.8 229.1L736.0 230.8L736.0 236.1L734.8 237.5L733.5 239.0L732.3 240.0L731.0 240.8L729.8 240.8L728.5 240.1L727.3 237.7Z" fill="#d93049" stroke="#d42e48" stroke-width="0.6" stroke-linejoin="round"/><path d="M727.9 230.6L729.0 228.7L730.0 227.9L731.1 227.8L732.2 228.6L733.3 229.3L734.3 230.1L735.4 231.4L735.4 235.5L734.3 236.6L733.3 237.6L732.2 238.4L731.1 239.0L730.0 239.0L729.0 238.5L727.9 236.7Z" fill="#f0863c" filter="url(#bl)"/><path d="M728.2 231.3L729.2 229.8L730.2 229.2L731.2 229.1L732.1 229.8L733.1 230.3L734.1 230.9L735.1 231.9L735.1 235.0L734.1 235.8L733.1 236.7L732.1 237.2L731.2 237.7L730.2 237.7L729.2 237.3L728.2 236.0Z" fill="#fbc862" filter="url(#bl)"/><path d="M728.5 232.0L729.4 230.9L730.3 230.6L731.2 230.5L732.1 230.9L733.0 231.3L733.9 231.7L734.8 232.4L734.8 234.5L733.9 235.1L733.0 235.7L732.1 236.1L731.2 236.4L730.3 236.4L729.4 236.1L728.5 235.2Z" fill="#fff2b0" filter="url(#bl)"/><path d="M736.0 232.2L737.3 230.8L738.5 230.3L739.8 230.8L741.0 230.7L742.3 231.3L743.5 231.6L744.8 232.9L744.8 236.9L743.5 238.6L742.3 238.5L741.0 239.0L739.8 239.3L738.5 239.5L737.3 239.2L736.0 237.7Z" fill="#d93049" stroke="#d42e48" stroke-width="0.6" stroke-linejoin="round"/><path d="M736.6 232.9L737.7 231.8L738.8 231.4L739.9 231.8L740.9 231.8L742.0 232.2L743.1 232.4L744.2 233.4L744.2 236.4L743.1 237.7L742.0 237.7L740.9 238.0L739.9 238.3L738.8 238.4L737.7 238.2L736.6 237.1Z" fill="#f0863c" filter="url(#bl)"/><path d="M736.9 233.4L737.9 232.6L738.9 232.3L739.9 232.6L740.9 232.5L741.9 232.8L742.9 233.0L743.9 233.8L743.9 236.1L742.9 237.1L741.9 237.0L740.9 237.3L739.9 237.5L738.9 237.6L737.9 237.5L736.9 236.6Z" fill="#fbc862" filter="url(#bl)"/><path d="M737.2 233.9L738.1 233.3L739.0 233.1L739.9 233.3L740.9 233.3L741.8 233.5L742.7 233.6L743.6 234.2L743.6 235.8L742.7 236.4L741.8 236.4L740.9 236.6L739.9 236.7L739.0 236.8L738.1 236.7L737.2 236.1Z" fill="#fff2b0" filter="url(#bl)"/><path d="M729.0 232.0L731.0 236.0L733.0 233.0L736.0 236.0L740.0 235.0L744.0 234.0" fill="none" stroke="#c8443a" stroke-width="0.85" stroke-linejoin="round" stroke-linecap="round"/><path d="M745.3 240.0L745.8 222.0L746.2 208.0" fill="none" stroke="#e0584a" stroke-width="0.85" stroke-linejoin="round" stroke-linecap="round"/><path d="M745.3 240.0L745.8 222.0L746.2 208.0" fill="none" stroke="#f8b070" stroke-width="0.26" stroke-linejoin="round" stroke-linecap="round"/><path d="M745.2 226.1L746.4 223.7L747.5 222.5L748.7 221.9L749.9 221.7L751.0 223.1L752.2 224.9L752.2 233.3L751.0 235.1L749.9 235.9L748.7 236.4L747.5 235.7L746.4 234.7L745.2 232.1Z" fill="#d93049" stroke="#d42e48" stroke-width="0.6" stroke-linejoin="round"/><path d="M745.8 226.8L746.8 225.0L747.7 224.1L748.7 223.6L749.7 223.5L750.6 224.5L751.6 225.9L751.6 232.2L750.6 233.7L749.7 234.2L748.7 234.6L747.7 234.1L746.8 233.3L745.8 231.3Z" fill="#f0863c" filter="url(#bl)"/><path d="M746.1 227.3L747.0 225.9L747.8 225.2L748.7 224.9L749.6 224.8L750.4 225.6L751.3 226.6L751.3 231.5L750.4 232.6L749.6 233.0L748.7 233.3L747.8 232.9L747.0 232.3L746.1 230.8Z" fill="#fbc862" filter="url(#bl)"/><path d="M746.4 227.8L747.2 226.9L747.9 226.4L748.7 226.2L749.5 226.1L750.2 226.6L751.0 227.4L751.0 230.7L750.2 231.5L749.5 231.8L748.7 232.0L747.9 231.7L747.2 231.3L746.4 230.2Z" fill="#fff2b0" filter="url(#bl)"/><path d="M752.3 206V238" stroke="#aaa" stroke-width="0.4"/><path d="M752.3 210.7L753.4 208.6L754.5 207.7L755.6 207.7L756.7 208.4L757.9 208.9L759.0 208.9L760.1 208.2L761.2 209.6L762.3 211.0L762.3 217.4L761.2 219.7L760.1 220.3L759.0 220.1L757.9 220.3L756.7 220.5L755.6 220.8L754.5 221.5L753.4 220.3L752.3 218.1Z" fill="#d93049" stroke="#d42e48" stroke-width="0.6" stroke-linejoin="round"/><path d="M752.9 211.6L753.9 210.0L754.9 209.3L755.8 209.3L756.8 209.8L757.8 210.3L758.8 210.2L759.7 209.7L760.7 210.7L761.7 211.8L761.7 216.7L760.7 218.4L759.7 218.9L758.8 218.7L757.8 218.9L756.8 219.0L755.8 219.3L754.9 219.8L753.9 218.9L752.9 217.2Z" fill="#f0863c" filter="url(#bl)"/><path d="M753.2 212.3L754.1 211.0L755.0 210.5L755.9 210.5L756.8 210.9L757.8 211.2L758.7 211.2L759.6 210.8L760.5 211.6L761.4 212.4L761.4 216.1L760.5 217.5L759.6 217.8L758.7 217.7L757.8 217.8L756.8 217.9L755.9 218.1L755.0 218.5L754.1 217.8L753.2 216.6Z" fill="#fbc862" filter="url(#bl)"/><path d="M753.5 212.9L754.3 212.1L755.2 211.7L756.0 211.7L756.9 212.0L757.7 212.2L758.6 212.2L759.4 211.9L760.3 212.5L761.1 213.0L761.1 215.6L760.3 216.5L759.4 216.8L758.6 216.7L757.7 216.8L756.9 216.8L756.0 217.0L755.2 217.2L754.3 216.7L753.5 215.9Z" fill="#fff2b0" filter="url(#bl)"/><path d="M753.0 216.0L755.0 212.0L757.0 215.0L759.0 213.0L761.0 218.0L762.3 223.0" fill="none" stroke="#c8443a" stroke-width="0.85" stroke-linejoin="round" stroke-linecap="round"/><path d="M762.4 219.8L763.6 217.6L764.8 216.5L766.0 216.0L767.1 216.2L768.3 217.5L769.5 219.4L769.5 226.8L768.3 229.3L767.1 230.2L766.0 230.1L764.8 230.5L763.6 228.7L762.4 226.9Z" fill="#d93049" stroke="#d42e48" stroke-width="0.6" stroke-linejoin="round"/><path d="M763.0 220.6L764.0 218.9L765.0 218.1L766.0 217.7L766.9 217.9L767.9 218.9L768.9 220.3L768.9 225.9L767.9 227.9L766.9 228.5L766.0 228.5L765.0 228.7L764.0 227.3L763.0 226.0Z" fill="#f0863c" filter="url(#bl)"/><path d="M763.3 221.2L764.2 219.9L765.1 219.3L766.0 219.0L766.8 219.1L767.7 219.9L768.6 221.0L768.6 225.3L767.7 226.8L766.8 227.3L766.0 227.2L765.1 227.4L764.2 226.4L763.3 225.3Z" fill="#fbc862" filter="url(#bl)"/><path d="M763.6 221.8L764.4 221.0L765.2 220.5L766.0 220.3L766.7 220.4L767.5 220.9L768.3 221.7L768.3 224.6L767.5 225.7L766.7 226.0L766.0 226.0L765.2 226.1L764.4 225.4L763.6 224.7Z" fill="#fff2b0" filter="url(#bl)"/><path d="M764.0 222.0L766.0 226.0L768.0 221.0" fill="none" stroke="#c8443a" stroke-width="0.85" stroke-linejoin="round" stroke-linecap="round"/><path d="M770 200V232" stroke="#aaa" stroke-width="0.4"/><path d="M770.2 205.2L771.4 203.1L772.7 202.1L773.9 202.4L775.1 202.5L776.3 202.4L777.5 202.4L778.8 203.2L780.0 205.1L780.0 212.5L778.8 214.1L777.5 215.0L776.3 214.6L775.1 214.7L773.9 214.8L772.7 215.1L771.4 214.4L770.2 212.3Z" fill="#d93049" stroke="#d42e48" stroke-width="0.6" stroke-linejoin="round"/><path d="M770.8 206.0L771.9 204.4L773.0 203.6L774.0 203.9L775.1 204.0L776.2 203.9L777.2 203.9L778.3 204.5L779.4 205.9L779.4 211.6L778.3 212.8L777.2 213.5L776.2 213.2L775.1 213.2L774.0 213.3L773.0 213.5L771.9 213.0L770.8 211.4Z" fill="#f0863c" filter="url(#bl)"/><path d="M771.1 206.6L772.1 205.4L773.1 204.8L774.1 205.0L775.1 205.1L776.1 205.0L777.1 205.0L778.1 205.5L779.1 206.6L779.1 210.9L778.1 211.8L777.1 212.3L776.1 212.1L775.1 212.1L774.1 212.2L773.1 212.3L772.1 212.0L771.1 210.7Z" fill="#fbc862" filter="url(#bl)"/><path d="M771.4 207.2L772.3 206.4L773.3 206.0L774.2 206.1L775.1 206.2L776.0 206.1L776.9 206.1L777.9 206.5L778.8 207.2L778.8 210.2L777.9 210.8L776.9 211.2L776.0 211.0L775.1 211.0L774.2 211.1L773.3 211.2L772.3 210.9L771.4 210.1Z" fill="#fff2b0" filter="url(#bl)"/><path d="M771.0 206.0L773.0 207.0L775.0 211.0L777.0 212.0L779.0 210.0L780.0 225.0" fill="none" stroke="#c8443a" stroke-width="0.85" stroke-linejoin="round" stroke-linecap="round"/><path d="M780.0 231.1L781.2 227.5L782.4 226.2L783.6 225.5L784.8 226.8L786.0 229.3L786.0 239.5L784.8 242.2L783.6 243.2L782.4 243.0L781.2 241.4L780.0 238.4Z" fill="#d93049" stroke="#d42e48" stroke-width="0.6" stroke-linejoin="round"/><path d="M780.6 231.9L781.6 229.2L782.5 228.2L783.5 227.6L784.4 228.6L785.4 230.5L785.4 238.3L784.4 240.4L783.5 241.1L782.5 240.9L781.6 239.8L780.6 237.5Z" fill="#f0863c" filter="url(#bl)"/><path d="M780.9 232.5L781.7 230.5L782.6 229.7L783.4 229.3L784.3 230.0L785.1 231.5L785.1 237.4L784.3 239.0L783.4 239.5L782.6 239.4L781.7 238.5L780.9 236.8Z" fill="#fbc862" filter="url(#bl)"/><path d="M781.2 233.1L781.9 231.7L782.6 231.2L783.4 230.9L784.1 231.4L784.8 232.4L784.8 236.5L784.1 237.6L783.4 238.0L782.6 237.9L781.9 237.3L781.2 236.1Z" fill="#fff2b0" filter="url(#bl)"/><path d="M784.5 243.0L785.3 230.0L786.0 212.0" fill="none" stroke="#e0584a" stroke-width="0.85" stroke-linejoin="round" stroke-linecap="round"/><path d="M784.5 243.0L785.3 230.0L786.0 212.0" fill="none" stroke="#f8b070" stroke-width="0.26" stroke-linejoin="round" stroke-linecap="round"/><path d="M786.0 207.1L787.5 204.9L788.9 204.6L790.4 206.7L790.4 215.1L788.9 217.1L787.5 217.0L786.0 214.6Z" fill="#d93049" stroke="#d42e48" stroke-width="0.6" stroke-linejoin="round"/><path d="M786.6 208.1L787.7 206.4L788.7 206.1L789.8 207.7L789.8 214.1L788.7 215.6L787.7 215.5L786.6 213.8Z" fill="#f0863c" filter="url(#bl)"/><path d="M786.9 208.8L787.8 207.5L788.6 207.3L789.5 208.5L789.5 213.4L788.6 214.5L787.8 214.5L786.9 213.1Z" fill="#fbc862" filter="url(#bl)"/><path d="M787.2 209.5L787.9 208.6L788.5 208.4L789.2 209.3L789.2 212.6L788.5 213.4L787.9 213.4L787.2 212.5Z" fill="#fff2b0" filter="url(#bl)"/><path d="M788.6 205.0L789.4 225.0L790.2 245.0" fill="none" stroke="#e0584a" stroke-width="0.85" stroke-linejoin="round" stroke-linecap="round"/><path d="M788.6 205.0L789.4 225.0L790.2 245.0" fill="none" stroke="#f8b070" stroke-width="0.26" stroke-linejoin="round" stroke-linecap="round"/></svg>
<div style="left:97.5px;top:413.3px;width:702.5px;height:11.7px;background:#363636;"></div>
<div style="left:98.5px;top:414.5px;width:36px;height:10.5px;background:#414141;"></div>
<div style="left:102px;top:416.5px;font-size:5.4px;color:#bbb;line-height:6.4px;white-space:nowrap;">Console</div>
<div style="left:135.5px;top:414.5px;width:78px;height:10.5px;background:#414141;"></div>
<div style="left:140px;top:416.5px;font-size:5.4px;color:#bbb;line-height:6.4px;white-space:nowrap;">Piano Roll - Multiple Tracks</div>
<div style="left:214.5px;top:414px;width:188px;height:11px;background:#5a5a5a;"></div>
<div style="left:220px;top:416.5px;font-size:5.15px;color:#eee;line-height:6.15px;white-space:nowrap;font-weight:bold;letter-spacing:-0.05px;">Melodyne (2: ihmw_Skip_Vocal (2): &lt;Melodyne&gt; ihmw_Skip_Vocal (2))</div>
<div style="left:396.5px;top:416px;font-size:5px;color:#eee;line-height:6px;white-space:nowrap;">&#10005;</div>
<div style="left:775px;top:416.5px;font-size:4.2px;color:#ccc;line-height:5.2px;white-space:nowrap;">&#10064; &#9662; &#8225;</div>
</div></body></html>
